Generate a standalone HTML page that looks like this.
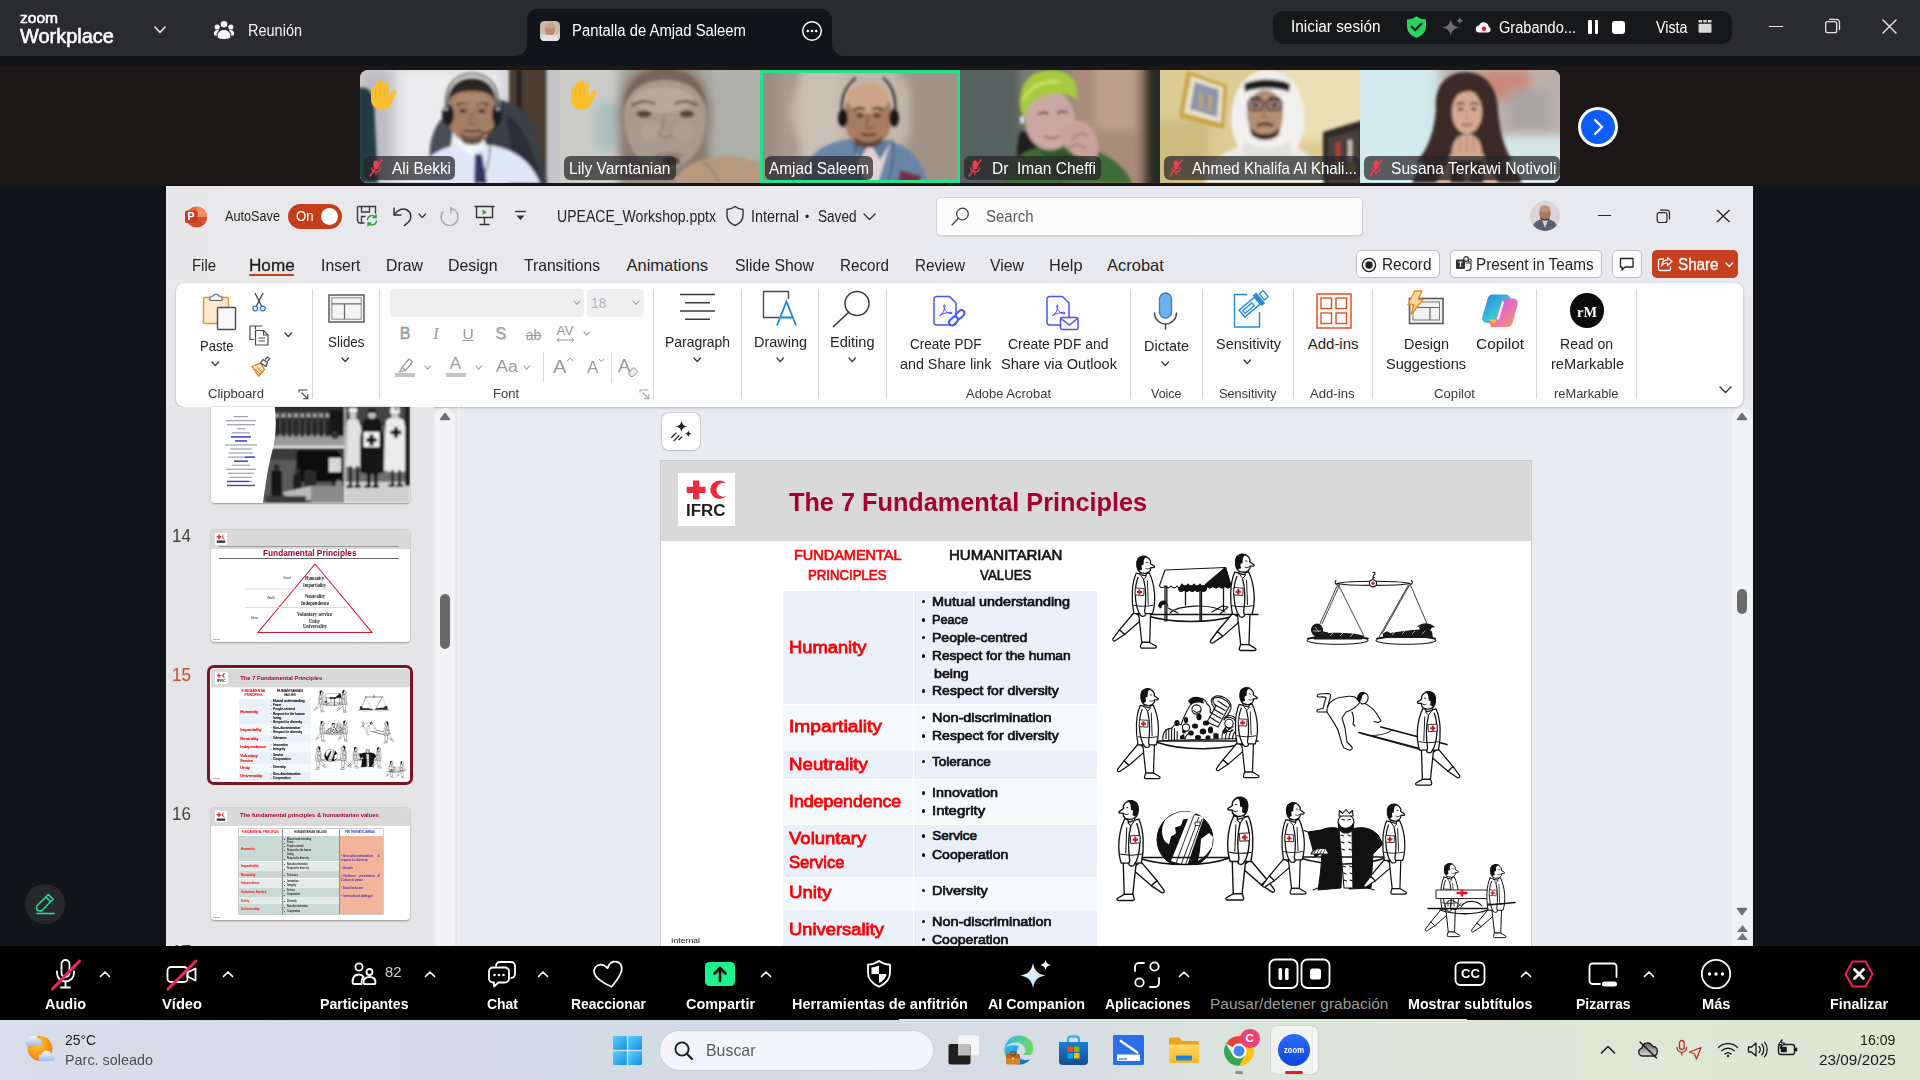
<!DOCTYPE html>
<html><head><meta charset="utf-8"><title>Zoom Workplace</title>
<style>
html,body{margin:0;padding:0;background:#111418;}
body{width:1920px;height:1080px;position:relative;overflow:hidden;font-family:"Liberation Sans",sans-serif;}
.b{position:absolute;display:block;box-sizing:border-box;}
.t{position:absolute;white-space:pre;line-height:1;transform-origin:0 50%;}
svg{overflow:visible;}
</style></head><body>
<div class="b" style="left:0;top:0;width:1920px;height:1080px;background:#111418"></div>
<div class="b" style="left:0;top:66px;width:1920px;height:119px;background:#1b1716"></div>
<!-- zoom_top -->
<div class="b" style="left:0px;top:0px;width:1920px;height:56px;background:#2a2b2e;"></div>
<div class="t" style="left:20px;top:11.4px;font-size:14.5px;color:#fff;transform:scaleX(1.072);-webkit-text-stroke:.55px #fff;">zoom</div>
<div class="t" style="left:20px;top:25.5px;font-size:20.5px;color:#fff;transform:scaleX(0.974);-webkit-text-stroke:.6px #fff;">Workplace</div>
<svg class="b" style="left:153px;top:24px;" width="14" height="12" viewBox="0 0 14 12"><path d="M2 3 L7 8.5 L12 3" fill="none" stroke="#e8e8e8" stroke-width="1.6" stroke-linecap="round" stroke-linejoin="round"/></svg>
<svg class="b" style="left:213px;top:19px;" width="22" height="22" viewBox="0 0 22 22"><g fill="#f2f2f2"><circle cx="11" cy="5.2" r="3.3"/><circle cx="4.2" cy="8" r="2.6"/><circle cx="17.8" cy="8" r="2.6"/>
    <path d="M4.5 17.2c0-3.8 2.6-6.3 6.5-6.3s6.5 2.5 6.5 6.3c0 1.7-1.5 2.8-6.5 2.8s-6.5-1.1-6.5-2.8z"/>
    <path d="M0.8 14.8c0-2.3 1.4-3.7 3.6-3.7.6 0 1.1.1 1.6.3-1.5 1.3-2.4 3.2-2.5 5.5-1.8-.2-2.7-.9-2.7-2.1zM21.2 14.8c0-2.3-1.4-3.7-3.6-3.7-.6 0-1.1.1-1.6.3 1.5 1.3 2.4 3.2 2.5 5.5 1.8-.2 2.7-.9 2.7-2.1z"/></g></svg>
<div class="t" style="left:247.5px;top:23px;font-size:16px;color:#f4f4f4;transform:scaleX(0.906);">Reunión</div>
<div class="b" style="left:527px;top:9px;width:305px;height:47px;background:#111418;border-radius:11px 11px 0 0;"></div>
<svg class="b" style="left:515px;top:44px;" width="12" height="12" viewBox="0 0 12 12"><path d="M12 0 V12 H0 A12 12 0 0 0 12 0z" fill="#111418"/></svg>
<svg class="b" style="left:832px;top:44px;" width="12" height="12" viewBox="0 0 12 12"><path d="M0 0 V12 H12 A12 12 0 0 1 0 0z" fill="#111418"/></svg>
<svg class="b" style="left:540px;top:21px;" width="20" height="20" viewBox="0 0 20 20"><defs><clipPath id="avc"><rect width="20" height="20" rx="4.5"/></clipPath></defs><g clip-path="url(#avc)"><rect width="20" height="20" fill="#c9b9a8"/><rect y="13" width="20" height="7" fill="#d8d4d2"/><ellipse cx="10" cy="9" rx="5" ry="6" fill="#b98a70"/><ellipse cx="10" cy="5" rx="4.6" ry="2.8" fill="#c9a089"/><path d="M2 20c0-4 3-6 8-6s8 2 8 6z" fill="#e6e3e6"/></g></svg>
<div class="t" style="left:572px;top:23px;font-size:16px;color:#fff;transform:scaleX(0.927);">Pantalla de Amjad Saleem</div>
<svg class="b" style="left:801px;top:20px;" width="22" height="22" viewBox="0 0 22 22"><circle cx="11" cy="11" r="9.3" fill="none" stroke="#fff" stroke-width="1.5"/><circle cx="6.8" cy="11" r="1.3" fill="#fff"/><circle cx="11" cy="11" r="1.3" fill="#fff"/><circle cx="15.2" cy="11" r="1.3" fill="#fff"/></svg>
<div class="b" style="left:1273px;top:11px;width:459px;height:33px;background:#17181a;border-radius:10px;"></div>
<div class="t" style="left:1291px;top:19.2px;font-size:16px;color:#fff;transform:scaleX(0.959);">Iniciar sesión</div>
<svg class="b" style="left:1405px;top:15px;" width="23" height="24" viewBox="0 0 23 24"><path d="M11.5 1.2c3 2.2 6 3.2 9.5 3.4v6.6c0 5.5-3.8 9.6-9.5 11.6C5.8 20.8 2 16.7 2 11.2V4.6c3.5-.2 6.5-1.2 9.5-3.4z" fill="#27d45f"/><path d="M6.8 11.8l3.4 3.4 6.2-6.6" fill="none" stroke="#10251a" stroke-width="2.3" stroke-linecap="round" stroke-linejoin="round"/></svg>
<svg class="b" style="left:1439.5px;top:14.5px;" width="26" height="26" viewBox="0 0 23 23"><path d="M9.5 3.5c.9 4.8 2.7 6.6 7.5 7.5-4.8.9-6.6 2.7-7.5 7.5C8.6 13.7 6.8 11.9 2 11c4.8-.9 6.6-2.7 7.5-7.5z" fill="#6b6c70"/><path d="M17.5 1.5c.4 2.2 1.3 3.1 3.5 3.5-2.2.4-3.1 1.3-3.5 3.5-.4-2.2-1.3-3.1-3.5-3.5 2.2-.4 3.1-1.3 3.5-3.5z" fill="#6b6c70"/></svg>
<svg class="b" style="left:1475px;top:20px;" width="18" height="14" viewBox="0 0 18 14"><path d="M4.5 12.5a3.5 3.5 0 0 1-.4-7 5 5 0 0 1 9.6 1.2 3 3 0 0 1-.4 5.8z" fill="#fff"/><circle cx="9" cy="8.8" r="2.3" fill="#e8173d"/></svg>
<div class="t" style="left:1499px;top:19.7px;font-size:16px;color:#fff;transform:scaleX(0.911);">Grabando...</div>
<div class="b" style="left:1588px;top:20px;width:3.5px;height:14px;background:#fff;border-radius:1px;"></div>
<div class="b" style="left:1594.5px;top:20px;width:3.5px;height:14px;background:#fff;border-radius:1px;"></div>
<div class="b" style="left:1611.5px;top:20.5px;width:13px;height:13px;background:#fff;border-radius:3px;"></div>
<div class="t" style="left:1656px;top:19.7px;font-size:16px;color:#fff;transform:scaleX(0.893);">Vista</div>
<svg class="b" style="left:1698px;top:19px;" width="15" height="15" viewBox="0 0 15 15"><g fill="#d9d9d9"><rect x="0.5" y="1" width="3.6" height="2.6" rx=".6"/><rect x="5.2" y="1" width="3.6" height="2.6" rx=".6"/><rect x="9.9" y="1" width="3.6" height="2.6" rx=".6"/><rect x="0.5" y="4.8" width="13" height="9" rx="1.2"/></g></svg>
<div class="b" style="left:1769px;top:25.5px;width:14px;height:1.3px;background:#e6e6e6;"></div>
<svg class="b" style="left:1824px;top:17px;" width="18" height="18" viewBox="0 0 18 18"><rect x="1.7" y="4.7" width="11" height="11" rx="2" fill="none" stroke="#e6e6e6" stroke-width="1.3"/><path d="M5 2.3h7.5a3 3 0 0 1 3 3V13" fill="none" stroke="#e6e6e6" stroke-width="1.3"/></svg>
<svg class="b" style="left:1881px;top:18px;" width="17" height="17" viewBox="0 0 17 17"><path d="M1.5 1.5l14 14M15.5 1.5l-14 14" stroke="#e6e6e6" stroke-width="1.4" fill="none"/></svg>
<!-- gallery -->
<svg class="b" style="left:360px;top:70px;border-radius:8px 0 0 8px;overflow:hidden" width="200" height="113" viewBox="0 0 200 113"><defs><filter id="bl360" x="-10%" y="-10%" width="120%" height="120%"><feGaussianBlur stdDeviation="1.6"/></filter><filter id="bb360" x="-20%" y="-20%" width="140%" height="140%"><feGaussianBlur stdDeviation="5"/></filter></defs><rect width="200" height="113" fill="#d6d5d9"/>
    <g filter="url(#bb360)"><rect x="40" y="0" width="100" height="113" fill="#ecebee"/><rect x="0" y="0" width="30" height="113" fill="#bcbcc2"/></g>
    <g filter="url(#bl360)">
    <rect x="149" y="-5" width="38" height="125" fill="#4b3d33"/><rect x="156" y="-5" width="6" height="125" fill="#2b231e"/><rect x="187" y="-5" width="15" height="125" fill="#c6c5ca"/>
    <path d="M-2 18c8-2 14 2 16 12l4 83H-2z" fill="#233b44"/>
    <path d="M70 96c-2-20 2-38 14-50l10 4-6 44z" fill="#4a4f56"/>
    <path d="M122 30c22-4 44 6 54 30l12 53h-70z" fill="#3a3f46"/>
    <path d="M146 44c14 8 26 28 36 69h-26z" fill="#2b2f35"/>
    <path d="M56 113c5-22 18-34 42-38h32c22 4 40 14 50 38z" fill="#dfe8f8"/>
    <path d="M96 74l16 12 14-12-4-8H100z" fill="#f2f5fc"/>
    <path d="M115 84l7 0 5 29h-13z" fill="#2c3763"/>
    <ellipse cx="112" cy="42" rx="25" ry="31" fill="#a57e66"/>
    <path d="M87 36c0-18 10-28 25-28s25 10 25 28c-3-10-8-15-25-15s-22 5-25 15z" fill="#2b2522"/>
    <path d="M100 62c5 6 19 6 24 0l-2 10c-5 4-15 4-20 0z" fill="#6e5547"/>
    <ellipse cx="88" cy="45" rx="6" ry="11" fill="#1a1a1c"/><ellipse cx="137" cy="45" rx="5" ry="11" fill="#1a1a1c"/>
    <path d="M86 40C84 14 98 6 112 6s28 8 26 34" fill="none" stroke="#d9d5d2" stroke-width="3"/>
    <path d="M86 40C84 14 98 6 112 6s28 8 26 34" fill="none" stroke="#222" stroke-width="1.5" transform="translate(0,-2)"/>
    <path d="M128 62c4 12 2 30-6 50" fill="none" stroke="#222" stroke-width="1"/>
    <path d="M97 35c4-2.5 9-2.5 12-.5M116 34.5c4-2 8-2 12 .5" stroke="#2a1e18" stroke-width="2.6" fill="none"/>
    <ellipse cx="103" cy="41" rx="3.6" ry="1.8" fill="#2a1e18"/><ellipse cx="122" cy="41" rx="3.6" ry="1.8" fill="#2a1e18"/>
    <path d="M112 42c-1 6-2 9-3 11 2 1.5 6 1.5 8 0" stroke="#7b5a48" stroke-width="1.6" fill="none"/>
    <path d="M104 60c5 2 12 2 17 0" stroke="#5b3d33" stroke-width="2.2" fill="none"/>
    <ellipse cx="112" cy="30" rx="16" ry="7" fill="#b58d73" opacity=".6"/>
    <path d="M137 52c-2 8-8 12-16 11" stroke="#1a1a1a" stroke-width="1.6" fill="none"/>
    </g></svg>
<svg class="b" style="left:369px;top:79px;" width="27" height="31" viewBox="0 0 27 31"><g fill="#fbbf2e"><rect x="2" y="7.5" width="4.2" height="14" rx="2.1"/><rect x="6.4" y="3" width="4.3" height="17" rx="2.15"/><rect x="10.9" y="1.2" width="4.3" height="18" rx="2.15"/><rect x="15.4" y="3.5" width="4.3" height="17" rx="2.15"/>
    <path d="M2 15h17.7v4.5l3.3-6.5c.8-1.6 2.3-2 3.3-1.3 1.1.7 1.3 2 .6 3.5L22.5 24c-2 4.5-5.5 6.7-10 6.7C6 30.7 2 26.5 2 20.5z"/></g><path d="M6.3 9v9M10.8 6v12M15.3 7v11" stroke="#e9a21a" stroke-width=".5" fill="none"/></svg>
<div class="b" style="left:364px;top:155.5px;width:91px;height:24.5px;background:rgba(38,38,40,.72);border-radius:6px;"></div><svg class="b" style="left:368.5px;top:159px;" width="14" height="18" viewBox="0 0 14 18"><g fill="#ee3d4f"><rect x="4.5" y="1.5" width="5" height="9" rx="2.5"/><path d="M2 8.5h1.2a3.8 3.8 0 0 0 7.6 0H12a5 5 0 0 1-4.4 5v2.5H6.4v-2.5A5 5 0 0 1 2 8.5z"/></g><path d="M1 17L13 1" stroke="#ee3d4f" stroke-width="1.5" stroke-linecap="round"/></svg><div class="t" style="left:391.5px;top:160.2px;font-size:16.5px;color:#fff;transform:scaleX(0.933);">Ali Bekki</div>
<svg class="b" style="left:560px;top:70px;border-radius:0;overflow:hidden" width="200" height="113" viewBox="0 0 200 113"><defs><filter id="bl560" x="-10%" y="-10%" width="120%" height="120%"><feGaussianBlur stdDeviation="1.6"/></filter><filter id="bb560" x="-20%" y="-20%" width="140%" height="140%"><feGaussianBlur stdDeviation="5"/></filter></defs><rect width="200" height="113" fill="#a5a6a1"/>
    <g filter="url(#bb560)"><rect x="-10" y="-10" width="68" height="140" fill="#cbccc8"/><rect x="36" y="32" width="20" height="48" fill="#a9bfbf"/><rect x="150" y="-10" width="60" height="100" fill="#afb0ab"/>
    <path d="M58 113V60c-6-30 10-70 46-70s54 38 46 72v51z" fill="#8b7c70"/>
    </g>
    <g filter="url(#bl560)">
    <ellipse cx="105" cy="48" rx="41" ry="52" fill="#a99a8e"/>
    <ellipse cx="103" cy="30" rx="30" ry="13" fill="#b7a99e"/>
    <ellipse cx="92" cy="62" rx="12" ry="9" fill="#b3a398" opacity=".8"/><ellipse cx="124" cy="62" rx="10" ry="9" fill="#b09f94" opacity=".8"/>
    <path d="M63 40c2-26 18-42 42-42s40 16 42 42c-6-20-20-30-42-30s-36 10-42 30z" fill="#74665a"/>
    <ellipse cx="84" cy="44" rx="7.5" ry="3.6" fill="#4f4039"/><ellipse cx="127" cy="44" rx="7.5" ry="3.6" fill="#4f4039"/>
    <path d="M72 36c6-5 15-6 23-2M115 34c8-4 17-3 23 2" stroke="#6a574b" stroke-width="2.6" fill="none"/>
    <path d="M104 48c-1 8-3 14-5 17 3 3 10 3 13 0" stroke="#8f7c70" stroke-width="2" fill="none"/>
    <ellipse cx="111" cy="91" rx="9" ry="5" fill="#4b3a36"/>
    <path d="M96 86c8-3 20-3 28 0" stroke="#8a6f66" stroke-width="2" fill="none"/>
    <path d="M114 113c5-16 22-24 45-26 22-2 38 4 46 12v14z" fill="#b79a7e"/>
    <path d="M142 92c10 4 14 12 16 21" stroke="#9f8468" stroke-width="2" fill="none"/>
    </g></svg>
<svg class="b" style="left:569px;top:79px;" width="27" height="31" viewBox="0 0 27 31"><g fill="#fbbf2e"><rect x="2" y="7.5" width="4.2" height="14" rx="2.1"/><rect x="6.4" y="3" width="4.3" height="17" rx="2.15"/><rect x="10.9" y="1.2" width="4.3" height="18" rx="2.15"/><rect x="15.4" y="3.5" width="4.3" height="17" rx="2.15"/>
    <path d="M2 15h17.7v4.5l3.3-6.5c.8-1.6 2.3-2 3.3-1.3 1.1.7 1.3 2 .6 3.5L22.5 24c-2 4.5-5.5 6.7-10 6.7C6 30.7 2 26.5 2 20.5z"/></g><path d="M6.3 9v9M10.8 6v12M15.3 7v11" stroke="#e9a21a" stroke-width=".5" fill="none"/></svg>
<div class="b" style="left:563.5px;top:155.5px;width:112.5px;height:24.5px;background:rgba(38,38,40,.72);border-radius:6px;"></div><div class="t" style="left:569px;top:160.2px;font-size:16.5px;color:#fff;transform:scaleX(0.94);">Lily Varntanian</div>
<svg class="b" style="left:760px;top:70px;border-radius:0;overflow:hidden" width="200" height="113" viewBox="0 0 200 113"><defs><filter id="bl760" x="-10%" y="-10%" width="120%" height="120%"><feGaussianBlur stdDeviation="1.6"/></filter><filter id="bb760" x="-20%" y="-20%" width="140%" height="140%"><feGaussianBlur stdDeviation="5"/></filter></defs><rect width="200" height="113" fill="#a6988e"/>
    <g filter="url(#bb760)"><ellipse cx="92" cy="42" rx="62" ry="58" fill="#c2b6ab"/><rect x="40" y="-10" width="40" height="140" fill="#cabfb4"/><rect x="150" y="-10" width="60" height="140" fill="#a09287"/><rect x="-10" y="-10" width="26" height="140" fill="#9a8c82"/></g>
    <g filter="url(#bl760)">
    <path d="M40 113c4-24 18-40 50-44h30c28 4 42 20 48 44z" fill="#6786a8"/>
    <path d="M92 74l14 39h12l12-39z" fill="#e3d3d8"/>
    <path d="M88 70l12 20 8-14zM132 70l-12 20-8-14z" fill="#5e7c9c"/>
    <path d="M140 100l22 6-4 7h-20z" fill="#7b2a48"/>
    <ellipse cx="108" cy="46" rx="24" ry="32" fill="#a77b5f"/>
    <ellipse cx="108" cy="28" rx="21" ry="15" fill="#cda586"/>
    <path d="M94 66c6 8 22 8 28 0l-1 8c-6 5-20 5-26 0z" fill="#5d4438"/>
    <path d="M94 40c4-2.5 8-2.5 11-.5M112 39.5c4-2 8-2 11 .5" stroke="#3c2a22" stroke-width="2.4" fill="none"/>
    <ellipse cx="100" cy="45.5" rx="3.4" ry="1.7" fill="#2a1c16"/><ellipse cx="117" cy="45.5" rx="3.4" ry="1.7" fill="#2a1c16"/>
    <path d="M108 46c-.5 6-1.5 9-2.5 11 2 1.5 5.5 1.5 7.5 0" stroke="#7d573f" stroke-width="1.6" fill="none"/>
    <path d="M101 64c4 1.5 11 1.5 15 0" stroke="#4a3026" stroke-width="2.2" fill="none"/>
    <ellipse cx="83" cy="48" rx="5" ry="9" fill="#161616"/><ellipse cx="134" cy="48" rx="5" ry="9" fill="#161616"/>
    <path d="M82 42c-2-18 8-30 14-34M135 42c2-18-6-30-12-34" fill="none" stroke="#161616" stroke-width="2"/>
    <path d="M132 70c4 10 0 28-4 43M96 74c-2 14 0 26 4 39" fill="none" stroke="#2a2a2a" stroke-width=".9"/>
    </g></svg>
<div class="b" style="left:760px;top:70px;width:200px;height:113px;background:transparent;border:3px solid #22e38d;"></div>
<div class="b" style="left:764.5px;top:155.5px;width:108px;height:24.5px;background:rgba(38,38,40,.72);border-radius:6px;"></div><div class="t" style="left:768.5px;top:160.2px;font-size:16.5px;color:#fff;transform:scaleX(0.932);">Amjad Saleem</div>
<svg class="b" style="left:960px;top:70px;border-radius:0;overflow:hidden" width="200" height="113" viewBox="0 0 200 113"><defs><filter id="bl960" x="-10%" y="-10%" width="120%" height="120%"><feGaussianBlur stdDeviation="1.6"/></filter><filter id="bb960" x="-20%" y="-20%" width="140%" height="140%"><feGaussianBlur stdDeviation="5"/></filter></defs><rect width="200" height="113" fill="#6a7068"/>
    <g filter="url(#bb960)"><rect x="-10" y="-10" width="70" height="140" fill="#56625e"/><rect x="110" y="-10" width="80" height="140" fill="#a98b7a"/><rect x="135" y="-10" width="40" height="70" fill="#c0a090"/><rect x="183" y="-10" width="30" height="140" fill="#2a2c28"/><rect x="60" y="-10" width="50" height="50" fill="#7b7f74"/></g>
    <g filter="url(#bl960)">
    <path d="M60 62c-4 14-4 28 0 40h22V60z" fill="#231d1b"/>
    <path d="M44 113c4-20 16-32 36-36h40c26 4 44 18 52 36z" fill="#3e6b35"/>
    <path d="M80 80l20 33 22-33z" fill="#2f5a2a"/>
    <ellipse cx="90" cy="50" rx="25" ry="30" fill="#cba7a3"/>
    <path d="M61 42C56 16 70 0 90 0s30 10 27 30c-10-8-28-10-44 2-5 4-8 10-8 16z" fill="#a6c93c"/>
    <path d="M64 30c6-14 20-20 36-18" stroke="#c4e05a" stroke-width="4" fill="none"/>
    <path d="M78 44c4-2 8-2 11 0M97 43c4-2 8-2 11 0" stroke="#4a3430" stroke-width="2" fill="none"/>
    <path d="M84 66c5 3 11 3 16 0" stroke="#a8656a" stroke-width="2.2" fill="none"/>
    <path d="M100 58c8-10 24-10 32 0 6 8 8 22 4 32l-20-4c-10-6-18-16-16-28z" fill="#caa29c"/>
    <path d="M112 70c4-6 10-8 16-4M108 78c6-4 12-4 18 0" stroke="#9c706c" stroke-width="1.5" fill="none"/>
    <ellipse cx="62" cy="50" rx="2" ry="4" fill="#f2f2f2"/>
    </g></svg>
<div class="b" style="left:963.5px;top:155.5px;width:137.5px;height:24.5px;background:rgba(38,38,40,.72);border-radius:6px;"></div><svg class="b" style="left:968px;top:159px;" width="14" height="18" viewBox="0 0 14 18"><g fill="#ee3d4f"><rect x="4.5" y="1.5" width="5" height="9" rx="2.5"/><path d="M2 8.5h1.2a3.8 3.8 0 0 0 7.6 0H12a5 5 0 0 1-4.4 5v2.5H6.4v-2.5A5 5 0 0 1 2 8.5z"/></g><path d="M1 17L13 1" stroke="#ee3d4f" stroke-width="1.5" stroke-linecap="round"/></svg><div class="t" style="left:991.5px;top:160.2px;font-size:16.5px;color:#fff;transform:scaleX(0.94);">Dr  Iman Cheffi</div>
<svg class="b" style="left:1160px;top:70px;border-radius:0;overflow:hidden" width="200" height="113" viewBox="0 0 200 113"><defs><filter id="bl1160" x="-10%" y="-10%" width="120%" height="120%"><feGaussianBlur stdDeviation="1.6"/></filter><filter id="bb1160" x="-20%" y="-20%" width="140%" height="140%"><feGaussianBlur stdDeviation="5"/></filter></defs><rect width="200" height="113" fill="#dccc94"/>
    <g filter="url(#bb1160)"><rect x="120" y="-10" width="90" height="80" fill="#eadfb4"/><rect x="-10" y="50" width="60" height="80" fill="#cdbb80"/></g>
    <g filter="url(#bl1160)">
    <path d="M27 1l40 14-3 44-45-12z" fill="#c9a23f"/><path d="M31 6l32 11-2 36-37-10z" fill="#e9e2c8"/><path d="M35 12l24 8-2 27-27-8z" fill="#8b93ad"/><path d="M40 22l3 1-1 16-3-1zM49 25l3 1-1 16-3-1z" fill="#c9a94f"/>
    <path d="M163 62l40-12v66h-40z" fill="#2d2928"/><path d="M168 68l32-9v54h-32z" fill="#4a3f3c"/><rect x="176" y="72" width="4" height="22" fill="#b9403a"/><rect x="188" y="70" width="4" height="22" fill="#c8c2b8"/><circle cx="178" cy="100" r="5" fill="#8c7a45"/><circle cx="191" cy="98" r="5" fill="#8c7a45"/>
    <path d="M45 113c4-22 20-34 44-40h36c22 6 34 18 38 40z" fill="#ebe9e5"/>
    <path d="M72 60C68 24 84 0 108 0s38 22 36 58c-2 12-6 20-12 26H84c-6-6-10-14-12-24z" fill="#f1f0ee"/>
    <path d="M84 70c8 10 38 10 46 0l4 16c-10 8-42 8-52 0z" fill="#e3e1dd"/>
    <ellipse cx="105" cy="44" rx="18" ry="24" fill="#b38e6f"/>
    <path d="M84 14c10-6 36-6 46 0l-1 8c-12-5-32-5-44 0z" fill="#1c1b1d"/>
    <path d="M89 54c4 14 28 14 32 0l-2 10c-6 8-22 8-28 0z" fill="#3b2b22"/>
    <path d="M97 56c4-3 12-3 16 0" stroke="#3b2b22" stroke-width="3" fill="none"/>
    <path d="M90 28.5c3-1.5 8-1.5 11 0M109 28.5c3-1.5 8-1.5 11 0" stroke="#2a1d16" stroke-width="2" fill="none"/><ellipse cx="95.5" cy="35" rx="3" ry="1.7" fill="#2a1d16"/><ellipse cx="114.5" cy="35" rx="3" ry="1.7" fill="#2a1d16"/><path d="M105 37c-.5 5-1.5 8-2.5 9.5 1.5 1.2 4.5 1.2 6 0" stroke="#8b6a50" stroke-width="1.4" fill="none"/><rect x="88" y="30" width="15" height="10" rx="3" fill="rgba(90,80,130,.25)" stroke="#2a2530" stroke-width="1.3"/><rect x="107" y="30" width="15" height="10" rx="3" fill="rgba(90,80,130,.25)" stroke="#2a2530" stroke-width="1.3"/><path d="M103 33h4" stroke="#2a2530" stroke-width="1.2"/>
    </g></svg>
<div class="b" style="left:1164px;top:155.5px;width:195.5px;height:24.5px;background:rgba(38,38,40,.72);border-radius:6px;"></div><svg class="b" style="left:1168.5px;top:159px;" width="14" height="18" viewBox="0 0 14 18"><g fill="#ee3d4f"><rect x="4.5" y="1.5" width="5" height="9" rx="2.5"/><path d="M2 8.5h1.2a3.8 3.8 0 0 0 7.6 0H12a5 5 0 0 1-4.4 5v2.5H6.4v-2.5A5 5 0 0 1 2 8.5z"/></g><path d="M1 17L13 1" stroke="#ee3d4f" stroke-width="1.5" stroke-linecap="round"/></svg><div class="t" style="left:1191.5px;top:160.2px;font-size:16.5px;color:#fff;transform:scaleX(0.913);">Ahmed Khalifa Al Khali...</div>
<svg class="b" style="left:1360px;top:70px;border-radius:0 8px 8px 0;overflow:hidden" width="200" height="113" viewBox="0 0 200 113"><defs><filter id="bl1360" x="-10%" y="-10%" width="120%" height="120%"><feGaussianBlur stdDeviation="1.6"/></filter><filter id="bb1360" x="-20%" y="-20%" width="140%" height="140%"><feGaussianBlur stdDeviation="5"/></filter></defs><rect width="200" height="113" fill="#cfe6e8"/>
    <g filter="url(#bb1360)"><rect x="80" y="-10" width="130" height="80" fill="#b9b0aa"/><rect x="120" y="0" width="50" height="30" fill="#c98a7c"/><rect x="150" y="20" width="40" height="40" fill="#a9a6a6"/><rect x="140" y="66" width="70" height="60" fill="#d4e6e6"/><rect x="-10" y="-10" width="80" height="140" fill="#d2eaec"/></g>
    <g filter="url(#bl1360)">
    <path d="M76 40C74 14 88 2 106 2s32 14 32 40c2 20 6 36 14 48l-20 6H74l-18-4c12-12 18-30 20-52z" fill="#3b2b25"/>
    <path d="M52 113c4-14 14-22 30-26h46c18 4 30 12 34 26z" fill="#3a2a2b"/>
    <ellipse cx="107" cy="42" rx="15" ry="22" fill="#d4aa92"/>
    <path d="M92 30c2-12 8-18 16-18s14 6 15 18c-6-8-12-10-18-8-6 1-10 4-13 8z" fill="#3b2b25"/>
    <path d="M96 34.5c3-1.8 6-1.8 8.5-.3M110 34.2c2.5-1.5 5.5-1.5 8.5.3" stroke="#3a2620" stroke-width="1.7" fill="none"/><ellipse cx="100.5" cy="39" rx="2.8" ry="1.6" fill="#2e1e1a"/><ellipse cx="114" cy="39" rx="2.8" ry="1.6" fill="#2e1e1a"/><path d="M107 40c-.4 4-1 6.5-1.8 8 1.3 1 3.5 1 4.8 0" stroke="#b58a72" stroke-width="1.2" fill="none"/>
    <path d="M102 54c3 1.5 7 1.5 10 0" stroke="#a4505a" stroke-width="2" fill="none"/>
    <path d="M92 82c0-10 6-18 15-18s15 8 15 18l4 8H88z" fill="#d2a68e"/>
    <path d="M100 68v14M107 66v16M114 68v14" stroke="#a87e68" stroke-width="1" fill="none"/>
    <path d="M90 90l-14 23h14zM124 90l14 23h-14z" fill="#c99e88"/>
    <ellipse cx="107" cy="106" rx="3" ry="4" fill="#a88f5c"/>
    </g></svg>
<div class="b" style="left:1364px;top:155.5px;width:195.5px;height:24.5px;background:rgba(38,38,40,.72);border-radius:6px;"></div><svg class="b" style="left:1368.5px;top:159px;" width="14" height="18" viewBox="0 0 14 18"><g fill="#ee3d4f"><rect x="4.5" y="1.5" width="5" height="9" rx="2.5"/><path d="M2 8.5h1.2a3.8 3.8 0 0 0 7.6 0H12a5 5 0 0 1-4.4 5v2.5H6.4v-2.5A5 5 0 0 1 2 8.5z"/></g><path d="M1 17L13 1" stroke="#ee3d4f" stroke-width="1.5" stroke-linecap="round"/></svg><div class="t" style="left:1390.5px;top:160.2px;font-size:16.5px;color:#fff;transform:scaleX(0.946);">Susana Terkawi Notivoli</div>
<div class="b" style="left:1577.5px;top:106.5px;width:40px;height:40px;background:#fff;border-radius:20px;"></div>
<div class="b" style="left:1580.5px;top:109.5px;width:34px;height:34px;background:#0d5cff;border-radius:17px;"></div>
<svg class="b" style="left:1590px;top:117px;" width="16" height="20" viewBox="0 0 16 20"><path d="M5 3l7 7-7 7" fill="none" stroke="#fff" stroke-width="2.4" stroke-linecap="round" stroke-linejoin="round"/></svg>
<!-- ppt -->
<div class="b" style="left:166px;top:186px;width:1587px;height:761px;background:#e9e9ed;"></div>
<div class="b" style="left:459px;top:400px;width:1294px;height:545px;background:#e8ebf0;"></div>
<div class="b" style="left:166px;top:186px;width:1587px;height:97px;background:linear-gradient(90deg,#e8e7ea 0%,#e9e9ee 40%,#e7e9ef 100%);"></div>
<svg class="b" style="left:184px;top:204.5px;" width="24" height="24" viewBox="0 0 24 24"><defs><linearGradient id="pp" x1="0" y1="0" x2="1" y2="1"><stop offset="0" stop-color="#f0704a"/><stop offset="1" stop-color="#c13a1b"/></linearGradient></defs><circle cx="12.5" cy="12" r="10.5" fill="url(#pp)"/><path d="M12.5 1.5a10.5 10.5 0 0 1 10.5 10.5H12.5z" fill="#f58a63"/><path d="M12.5 12H23a10.5 10.5 0 0 1-3.5 7.8z" fill="#d9502a"/><rect x="1" y="5.5" width="12.5" height="12.5" rx="1.8" fill="#c43e1c"/></svg>
<div class="t" style="left:187.5px;top:210.9px;font-size:10.5px;color:#fff;font-weight:bold;">P</div>
<div class="t" style="left:224.5px;top:209.6px;font-size:13.8px;color:#242424;transform:scaleX(0.919);">AutoSave</div>
<div class="b" style="left:287.5px;top:204px;width:54.5px;height:24.5px;background:#c43e1c;border-radius:12.5px;"></div>
<div class="t" style="left:295.5px;top:209.6px;font-size:13.8px;color:#fff;transform:scaleX(0.951);">On</div>
<div class="b" style="left:320.5px;top:207.5px;width:17.5px;height:17.5px;background:#fff;border-radius:9px;"></div>
<svg class="b" style="left:356px;top:205px;" width="23" height="22" viewBox="0 0 23 22"><path d="M1.5 1.5h14l4 0v7M1.5 1.5v13.5a3 3 0 0 0 3 3h4" fill="none" stroke="#3b3b3b" stroke-width="1.4"/><path d="M5.5 1.5v5.5h8V1.5" fill="none" stroke="#3b3b3b" stroke-width="1.3"/><path d="M5.5 18v-6.5h4" fill="none" stroke="#3b3b3b" stroke-width="1.3"/><g fill="none" stroke="#2ea043" stroke-width="1.5" stroke-linecap="round"><path d="M11.5 14.5a4.6 4.6 0 0 1 8-2.5M20 9.8v2.8h-2.8"/><path d="M20.5 16a4.6 4.6 0 0 1-8 2.5M12 20.8V18h2.8"/></g></svg>
<svg class="b" style="left:391px;top:205px;" width="23" height="22" viewBox="0 0 23 22"><path d="M3 3v7h7" fill="none" stroke="#333" stroke-width="1.5" stroke-linecap="round" stroke-linejoin="round"/><path d="M3.5 9.5C7 4.5 12 2.8 16 5c4.5 2.5 5 8.5 1.5 12l-4 3.5" fill="none" stroke="#333" stroke-width="1.5" stroke-linecap="round"/></svg>
<svg class="b" style="left:418.25px;top:213.2px;" width="8.5" height="5.6" viewBox="0 0 8.5 5.6"><path d="M1 1L4.25 4.6L7.5 1" fill="none" stroke="#333" stroke-width="1.3" stroke-linecap="round" stroke-linejoin="round"/></svg>
<svg class="b" style="left:437px;top:205px;" width="23" height="22" viewBox="0 0 23 22"><path d="M14 2.5v5.5" fill="none" stroke="#a8a8a8" stroke-width="1.4" stroke-linecap="round"/><path d="M14 3.5a8.5 8.5 0 1 1-8 3" fill="none" stroke="#a8a8a8" stroke-width="1.4" stroke-linecap="round"/></svg>
<svg class="b" style="left:474px;top:205px;" width="21" height="22" viewBox="0 0 21 22"><path d="M1 1.5h19M2.5 1.5v11h16v-11M10.5 12.5v6M6 19.5h9" fill="none" stroke="#333" stroke-width="1.4" stroke-linecap="round"/><path d="M8.5 4.5l4.5 2.8-4.5 2.8z" fill="#2ea043"/></svg>
<svg class="b" style="left:514px;top:210px;" width="13" height="12" viewBox="0 0 13 12"><path d="M1 1.5h11" stroke="#333" stroke-width="1.4"/><path d="M2.5 5.5h8L6.5 10z" fill="#333"/></svg>
<div class="t" style="left:557px;top:208.7px;font-size:16px;color:#242424;transform:scaleX(0.878);">UPEACE_Workshop.pptx</div>
<svg class="b" style="left:725px;top:205px;" width="20" height="22" viewBox="0 0 20 22"><path d="M10 1.5c2.5 2 5.2 2.8 8 3v6c0 4.5-3 7.8-8 10-5-2.2-8-5.5-8-10v-6c2.8-.2 5.5-1 8-3z" fill="none" stroke="#333" stroke-width="1.4" stroke-linejoin="round"/></svg>
<div class="t" style="left:751px;top:208.7px;font-size:16px;color:#242424;transform:scaleX(0.899);">Internal</div>
<div class="t" style="left:805px;top:210.6px;font-size:12px;color:#242424;">•</div>
<div class="t" style="left:817.5px;top:208.7px;font-size:16px;color:#242424;transform:scaleX(0.849);">Saved</div>
<svg class="b" style="left:862.5px;top:213.25px;" width="13" height="7.5" viewBox="0 0 13 7.5"><path d="M1 1L6.5 6.5L12 1" fill="none" stroke="#333" stroke-width="1.4" stroke-linecap="round" stroke-linejoin="round"/></svg>
<div class="b" style="left:935.5px;top:196.5px;width:427px;height:39px;background:#fbfbfc;border-radius:5px;border:1px solid #d4d4d8;box-shadow:0 1px 1.5px rgba(0,0,0,.08);"></div>
<svg class="b" style="left:950px;top:206px;" width="21" height="21" viewBox="0 0 21 21"><circle cx="12.5" cy="8" r="5.8" fill="none" stroke="#444" stroke-width="1.3"/><path d="M8.5 12.3L2 19" stroke="#444" stroke-width="1.3" stroke-linecap="round"/></svg>
<div class="t" style="left:986px;top:208.7px;font-size:16px;color:#5a5a5a;transform:scaleX(0.937);">Search</div>
<svg class="b" style="left:1529.5px;top:201px;" width="30" height="30" viewBox="0 0 30 30"><defs><clipPath id="av2"><circle cx="15" cy="15" r="15"/></clipPath></defs><g clip-path="url(#av2)"><rect width="30" height="30" fill="#ddd3d6"/><path d="M2 30c0-8 5-12 13-12s13 4 13 12z" fill="#59616e"/><path d="M12 19l3 8 3-8z" fill="#d9cfd2"/><ellipse cx="15" cy="12" rx="5.8" ry="7.2" fill="#a87a60"/><ellipse cx="15" cy="8" rx="5.2" ry="3.8" fill="#c09478"/><path d="M10.5 16c2 3 7 3 9 0v2c-2 2-7 2-9 0z" fill="#4a362c"/></g></svg>
<div class="b" style="left:1597.5px;top:214.5px;width:13.5px;height:1.3px;background:#222;"></div>
<svg class="b" style="left:1656px;top:208.5px;" width="16" height="15" viewBox="0 0 16 15"><rect x="1.2" y="3.7" width="9.8" height="9.8" rx="2" fill="none" stroke="#222" stroke-width="1.2"/><path d="M4.2 1.2h6.3a3 3 0 0 1 3 3v6.3" fill="none" stroke="#222" stroke-width="1.2"/></svg>
<svg class="b" style="left:1716px;top:209px;" width="15" height="14" viewBox="0 0 15 14"><path d="M1 1l12.5 12M13.5 1L1 13" stroke="#222" stroke-width="1.3"/></svg>
<div class="t" style="left:192px;top:257.2px;font-size:16.5px;color:#242424;transform:scaleX(0.903);">File</div>
<div class="t" style="left:248.8px;top:257.2px;font-size:16.5px;color:#1f1f1f;transform:scaleX(1.038);-webkit-text-stroke:.35px #1f1f1f;">Home</div>
<div class="t" style="left:320.5px;top:257.2px;font-size:16.5px;color:#242424;transform:scaleX(0.957);">Insert</div>
<div class="t" style="left:386px;top:257.2px;font-size:16.5px;color:#242424;transform:scaleX(0.961);">Draw</div>
<div class="t" style="left:448px;top:257.2px;font-size:16.5px;color:#242424;transform:scaleX(0.964);">Design</div>
<div class="t" style="left:524px;top:257.2px;font-size:16.5px;color:#242424;transform:scaleX(0.949);">Transitions</div>
<div class="t" style="left:626.5px;top:257.2px;font-size:16.5px;color:#242424;">Animations</div>
<div class="t" style="left:735px;top:257.2px;font-size:16.5px;color:#242424;transform:scaleX(0.957);">Slide Show</div>
<div class="t" style="left:840px;top:257.2px;font-size:16.5px;color:#242424;transform:scaleX(0.921);">Record</div>
<div class="t" style="left:915px;top:257.2px;font-size:16.5px;color:#242424;transform:scaleX(0.924);">Review</div>
<div class="t" style="left:990px;top:257.2px;font-size:16.5px;color:#242424;transform:scaleX(0.959);">View</div>
<div class="t" style="left:1048.5px;top:257.2px;font-size:16.5px;color:#242424;transform:scaleX(0.987);">Help</div>
<div class="t" style="left:1107px;top:257.2px;font-size:16.5px;color:#242424;">Acrobat</div>
<div class="b" style="left:248.8px;top:273.8px;width:45.7px;height:2.5px;background:#c43e1c;border-radius:1.2px;"></div>
<div class="b" style="left:1355.5px;top:249.5px;width:84px;height:28.5px;background:#fbfbfc;border-radius:5px;border:1px solid #bdbdc2;"></div>
<svg class="b" style="left:1361px;top:256.5px;" width="16" height="16" viewBox="0 0 16 16"><circle cx="8" cy="8" r="6.6" fill="none" stroke="#222" stroke-width="1.3"/><circle cx="8" cy="8" r="3.7" fill="#222"/></svg>
<div class="t" style="left:1381.5px;top:256.5px;font-size:16px;color:#242424;transform:scaleX(0.96);">Record</div>
<div class="b" style="left:1450px;top:249.5px;width:151.5px;height:28.5px;background:#fbfbfc;border-radius:5px;border:1px solid #bdbdc2;"></div>
<svg class="b" style="left:1455px;top:256px;" width="17" height="16" viewBox="0 0 17 16"><rect x="1" y="3.5" width="9" height="9.5" rx="1.2" fill="#333"/><path d="M3.5 6h4M5.5 6v5" stroke="#fff" stroke-width="1.2"/><circle cx="11" cy="3" r="2.3" fill="none" stroke="#333" stroke-width="1.2"/><circle cx="14.8" cy="4.5" r="1.5" fill="none" stroke="#333" stroke-width="1.1"/><path d="M10.5 7h5.5v4.5a3 3 0 0 1-3 3h-2" fill="none" stroke="#333" stroke-width="1.2"/></svg>
<div class="t" style="left:1476px;top:256.5px;font-size:16px;color:#242424;transform:scaleX(0.953);">Present in Teams</div>
<div class="b" style="left:1612px;top:249.5px;width:29.5px;height:28.5px;background:#fbfbfc;border-radius:5px;border:1px solid #bdbdc2;"></div>
<svg class="b" style="left:1619px;top:256.5px;" width="16" height="15" viewBox="0 0 16 15"><path d="M1.5 1.5h12.5v8.5H6l-3 3v-3H1.5z" fill="none" stroke="#222" stroke-width="1.3" stroke-linejoin="round"/></svg>
<div class="b" style="left:1651.5px;top:249.5px;width:86.5px;height:28.5px;background:#c8401f;border-radius:5px;"></div>
<svg class="b" style="left:1657px;top:256px;" width="17" height="16" viewBox="0 0 17 16"><path d="M6.5 3H3.5a2 2 0 0 0-2 2v7.5a2 2 0 0 0 2 2h8a2 2 0 0 0 2-2V11" fill="none" stroke="#fff" stroke-width="1.3" stroke-linecap="round"/><path d="M10.5 1.5l4.5 4-4.5 4v-2.5c-3 0-4.8 1-6 3 .3-3.5 2.5-6 6-6.2z" fill="none" stroke="#fff" stroke-width="1.2" stroke-linejoin="round"/></svg>
<div class="t" style="left:1677.5px;top:256.5px;font-size:16px;color:#fff;transform:scaleX(0.949);-webkit-text-stroke:.3px #fff;">Share</div>
<svg class="b" style="left:1725.25px;top:261.75px;" width="8.5" height="5.5" viewBox="0 0 8.5 5.5"><path d="M1 1L4.25 4.5L7.5 1" fill="none" stroke="#fff" stroke-width="1.3" stroke-linecap="round" stroke-linejoin="round"/></svg>
<div class="b" style="left:176px;top:283px;width:1567px;height:124px;background:#fdfdfd;border-radius:8px;box-shadow:0 1px 3px rgba(0,0,0,.22),0 0 1px rgba(0,0,0,.15);"></div>
<svg class="b" style="left:200px;top:292px;" width="37" height="39" viewBox="0 0 37 39"><path d="M5 5.5h22a1.5 1.5 0 0 1 1.5 1.5v23a1.5 1.5 0 0 1-1.5 1.5H5a1.5 1.5 0 0 1-1.5-1.5V7A1.5 1.5 0 0 1 5 5.5z" fill="#fbe9d0" stroke="#e8912d" stroke-width="1.5"/><path d="M10 8.5V6a2 2 0 0 1 2-2h1.5a2.6 2.6 0 0 1 5 0H20a2 2 0 0 1 2 2v2.5z" fill="#f3f3f3" stroke="#6b6b6b" stroke-width="1.2"/><rect x="17.5" y="15.5" width="18" height="22" rx="1" fill="#f8f8f8" stroke="#4d4d4d" stroke-width="1.4"/></svg>
<div class="t" style="left:199.6px;top:338px;font-size:15px;color:#242424;transform:scaleX(0.873);">Paste</div>
<svg class="b" style="left:211.25px;top:361.2px;" width="8.5" height="5.6" viewBox="0 0 8.5 5.6"><path d="M1 1L4.25 4.6L7.5 1" fill="none" stroke="#333" stroke-width="1.3" stroke-linecap="round" stroke-linejoin="round"/></svg>
<svg class="b" style="left:251px;top:292px;" width="16" height="21" viewBox="0 0 16 21"><path d="M4 1l6.5 13M12 1L5.5 14" stroke="#3b3b3b" stroke-width="1.2" fill="none"/><circle cx="4.2" cy="16.5" r="2.4" fill="none" stroke="#2b7cd3" stroke-width="1.3"/><circle cx="11.8" cy="16.5" r="2.4" fill="none" stroke="#2b7cd3" stroke-width="1.3"/></svg>
<svg class="b" style="left:249px;top:325px;" width="21" height="21" viewBox="0 0 21 21"><path d="M6.5 4.5V1h6.5l.5 0M1 1h5.5M1 1v13.5h4" fill="none" stroke="#4a4a4a" stroke-width="1.2"/><path d="M6.5 5.5h8l4.5 4.5v10h-12.5z" fill="#fafafa" stroke="#4a4a4a" stroke-width="1.2" stroke-linejoin="round"/><path d="M14.5 5.5v4.5h4.5M9.5 13h6.5M9.5 16h6.5" fill="none" stroke="#4a4a4a" stroke-width="1.1"/></svg>
<svg class="b" style="left:284.25px;top:332.2px;" width="8.5" height="5.6" viewBox="0 0 8.5 5.6"><path d="M1 1L4.25 4.6L7.5 1" fill="none" stroke="#333" stroke-width="1.3" stroke-linecap="round" stroke-linejoin="round"/></svg>
<svg class="b" style="left:250px;top:356px;" width="21" height="21" viewBox="0 0 21 21"><path d="M2 10.5l8.5-3.5 4 6.5-6 6.5z" fill="#fbe3c4" stroke="#e07b1a" stroke-width="1.3" stroke-linejoin="round"/><path d="M5 13l5 5M7.5 11.5l4.5 5" stroke="#e07b1a" stroke-width="1"/><path d="M10.5 7l2.5-3.5 4.5 3-1.5 4z" fill="#f3f3f3" stroke="#4a4a4a" stroke-width="1.2" stroke-linejoin="round"/><path d="M15 3.5l2.5-2.5 2 1.5-2 3" fill="none" stroke="#4a4a4a" stroke-width="1.2"/></svg>
<div class="t" style="left:208px;top:387.2px;font-size:13.5px;color:#3a3a3a;transform:scaleX(0.969);">Clipboard</div>
<svg class="b" style="left:297.5px;top:388.5px;" width="11" height="11" viewBox="0 0 11 11"><path d="M1 3.5V1h8.5M3.5 3.5l6 6M9.8 5v4.8H5" fill="none" stroke="#444" stroke-width="1.1"/></svg>
<div class="b" style="left:311.5px;top:289px;width:1px;height:110px;background:#d6d6d8;"></div>
<svg class="b" style="left:328px;top:293.5px;" width="37" height="29" viewBox="0 0 37 29"><rect x="1" y="1" width="35" height="27" fill="#f5f5f5" stroke="#5a5a5a" stroke-width="1.5"/><rect x="3.8" y="3.8" width="29.4" height="21.4" fill="none" stroke="#8a8a8a" stroke-width="1"/><path d="M3.8 9.8h29.4M16.5 9.8v15.4" stroke="#6a6a6a" stroke-width="1.3"/></svg>
<div class="t" style="left:327.6px;top:334px;font-size:15px;color:#242424;transform:scaleX(0.893);">Slides</div>
<svg class="b" style="left:341.25px;top:357.2px;" width="8.5" height="5.6" viewBox="0 0 8.5 5.6"><path d="M1 1L4.25 4.6L7.5 1" fill="none" stroke="#333" stroke-width="1.3" stroke-linecap="round" stroke-linejoin="round"/></svg>
<div class="b" style="left:379px;top:289px;width:1px;height:110px;background:#d6d6d8;"></div>
<div class="b" style="left:390px;top:288.5px;width:194px;height:28.5px;background:#efeff2;border-radius:4px;"></div>
<svg class="b" style="left:572.5px;top:300.3px;" width="8" height="5.4" viewBox="0 0 8 5.4"><path d="M1 1L4 4.4L7 1" fill="none" stroke="#9a9a9a" stroke-width="1.1" stroke-linecap="round" stroke-linejoin="round"/></svg>
<div class="b" style="left:587px;top:288.5px;width:56.5px;height:28.5px;background:#efeff2;border-radius:4px;"></div>
<div class="t" style="left:590.5px;top:296.2px;font-size:14.5px;color:#b4b4b8;transform:scaleX(0.961);">18</div>
<svg class="b" style="left:632px;top:300.3px;" width="8" height="5.4" viewBox="0 0 8 5.4"><path d="M1 1L4 4.4L7 1" fill="none" stroke="#9a9a9a" stroke-width="1.1" stroke-linecap="round" stroke-linejoin="round"/></svg>
<div class="t" style="left:399.7px;top:326px;font-size:16px;color:#9a9a9a;-webkit-text-stroke:.4px #9a9a9a;">B</div>
<div class="t" style="left:433.3px;top:326px;font-size:16px;color:#9a9a9a;font-style:italic;font-family:'Liberation Serif',serif;">I</div>
<div class="t" style="left:462.4px;top:325.7px;font-size:15.5px;color:#9a9a9a;text-decoration:underline;">U</div>
<div class="t" style="left:495.2px;top:326px;font-size:16px;color:#9a9a9a;text-shadow:1px 1px 0 #d5d5d5;">S</div>
<div class="t" style="left:525.7px;top:327.5px;font-size:14px;color:#9a9a9a;text-decoration:line-through;">ab</div>
<div class="t" style="left:556.5px;top:323.9px;font-size:13.5px;color:#9a9a9a;">AV</div>
<svg class="b" style="left:556px;top:337px;" width="20" height="6" viewBox="0 0 20 6"><path d="M1 3h17M3.5 .8L1 3l2.5 2.2M15.5 .8L18 3l-2.5 2.2" fill="none" stroke="#9a9a9a" stroke-width="1"/></svg>
<svg class="b" style="left:582.75px;top:331.4px;" width="7.5" height="5.2" viewBox="0 0 7.5 5.2"><path d="M1 1L3.75 4.2L6.5 1" fill="none" stroke="#9a9a9a" stroke-width="1.1" stroke-linecap="round" stroke-linejoin="round"/></svg>
<svg class="b" style="left:394px;top:355px;" width="22" height="22" viewBox="0 0 22 22"><path d="M8 12.5l7-8.5 3.5 3-7 8.5zM8 12.5l-2.5 4.5 5.5-1.5" fill="none" stroke="#9a9a9a" stroke-width="1.2" stroke-linejoin="round"/><rect x="1" y="18" width="20" height="4" fill="#c4c4c4"/></svg>
<svg class="b" style="left:424.25px;top:365.4px;" width="7.5" height="5.2" viewBox="0 0 7.5 5.2"><path d="M1 1L3.75 4.2L6.5 1" fill="none" stroke="#9a9a9a" stroke-width="1.1" stroke-linecap="round" stroke-linejoin="round"/></svg>
<div class="t" style="left:449.8px;top:355.2px;font-size:17px;color:#9a9a9a;">A</div>
<div class="b" style="left:445.5px;top:373px;width:20px;height:4px;background:#c4c4c4;"></div>
<svg class="b" style="left:474.75px;top:365.4px;" width="7.5" height="5.2" viewBox="0 0 7.5 5.2"><path d="M1 1L3.75 4.2L6.5 1" fill="none" stroke="#9a9a9a" stroke-width="1.1" stroke-linecap="round" stroke-linejoin="round"/></svg>
<div class="t" style="left:496px;top:359.2px;font-size:16px;color:#9a9a9a;transform:scaleX(1.124);">Aa</div>
<svg class="b" style="left:522.75px;top:365.4px;" width="7.5" height="5.2" viewBox="0 0 7.5 5.2"><path d="M1 1L3.75 4.2L6.5 1" fill="none" stroke="#9a9a9a" stroke-width="1.1" stroke-linecap="round" stroke-linejoin="round"/></svg>
<div class="b" style="left:543px;top:352px;width:1px;height:30px;background:#dcdcdc;"></div>
<div class="t" style="left:553px;top:357.2px;font-size:19px;color:#9a9a9a;transform:scaleX(1.065);">A</div>
<svg class="b" style="left:566px;top:357px;" width="8" height="5" viewBox="0 0 8 5"><path d="M1 4l3-3 3 3" fill="none" stroke="#9a9a9a" stroke-width="1"/></svg>
<div class="t" style="left:587px;top:360.2px;font-size:16px;color:#9a9a9a;transform:scaleX(1.078);">A</div>
<svg class="b" style="left:598px;top:358px;" width="7" height="5" viewBox="0 0 7 5"><path d="M1 1l2.5 2.5L6 1" fill="none" stroke="#9a9a9a" stroke-width="1"/></svg>
<div class="b" style="left:611px;top:352px;width:1px;height:30px;background:#dcdcdc;"></div>
<div class="t" style="left:618px;top:356.7px;font-size:18px;color:#9a9a9a;transform:scaleX(1.041);">A</div>
<svg class="b" style="left:627px;top:366px;" width="12" height="11" viewBox="0 0 12 11"><path d="M1.5 7L6.5 1.5 11 5.5 6 10.5H3.5z" fill="#e9e9e9" stroke="#9a9a9a" stroke-width="1"/></svg>
<div class="t" style="left:493.3px;top:387.2px;font-size:13.5px;color:#3a3a3a;transform:scaleX(0.963);">Font</div>
<svg class="b" style="left:639px;top:388.5px;" width="11" height="11" viewBox="0 0 11 11"><path d="M1 3.5V1h8.5M3.5 3.5l6 6M9.8 5v4.8H5" fill="none" stroke="#a8a8a8" stroke-width="1.1"/></svg>
<div class="b" style="left:653.3px;top:289px;width:1px;height:110px;background:#d6d6d8;"></div>
<svg class="b" style="left:679px;top:293px;" width="37" height="28" viewBox="0 0 37 28"><path d="M1 1.5h35M6 9.8h25M1 18h35M6 26.2h25" stroke="#3b3b3b" stroke-width="1.5"/></svg>
<div class="t" style="left:665px;top:334px;font-size:15px;color:#242424;transform:scaleX(0.928);">Paragraph</div>
<svg class="b" style="left:692.55px;top:357.2px;" width="8.5" height="5.6" viewBox="0 0 8.5 5.6"><path d="M1 1L4.25 4.6L7.5 1" fill="none" stroke="#333" stroke-width="1.3" stroke-linecap="round" stroke-linejoin="round"/></svg>
<div class="b" style="left:740.8px;top:289px;width:1px;height:110px;background:#d6d6d8;"></div>
<svg class="b" style="left:762px;top:290px;" width="37" height="37" viewBox="0 0 37 37"><path d="M17 27.5H1.5V1.5h25V9" fill="none" stroke="#4a4a4a" stroke-width="1.4"/><path d="M15 35.5L24.5 11.5 34 35.5M18.5 27.5h12" fill="none" stroke="#1e88d8" stroke-width="1.8"/></svg>
<div class="t" style="left:753.7px;top:334px;font-size:15px;color:#242424;transform:scaleX(0.963);">Drawing</div>
<svg class="b" style="left:775.55px;top:357.2px;" width="8.5" height="5.6" viewBox="0 0 8.5 5.6"><path d="M1 1L4.25 4.6L7.5 1" fill="none" stroke="#333" stroke-width="1.3" stroke-linecap="round" stroke-linejoin="round"/></svg>
<div class="b" style="left:817.5px;top:289px;width:1px;height:110px;background:#d6d6d8;"></div>
<svg class="b" style="left:832px;top:290px;" width="39" height="38" viewBox="0 0 39 38"><circle cx="25" cy="13.5" r="12" fill="none" stroke="#3b3b3b" stroke-width="1.5"/><path d="M16.5 22.5L1.5 36.5" stroke="#3b3b3b" stroke-width="1.7" stroke-linecap="round"/></svg>
<div class="t" style="left:830px;top:334px;font-size:15px;color:#242424;transform:scaleX(0.97);">Editing</div>
<svg class="b" style="left:847.55px;top:357.2px;" width="8.5" height="5.6" viewBox="0 0 8.5 5.6"><path d="M1 1L4.25 4.6L7.5 1" fill="none" stroke="#333" stroke-width="1.3" stroke-linecap="round" stroke-linejoin="round"/></svg>
<div class="b" style="left:885.8px;top:289px;width:1px;height:110px;background:#d6d6d8;"></div>
<svg class="b" style="left:933px;top:295px;" width="34" height="36" viewBox="0 0 34 36"><path d="M3.5 1.5h13l6.5 6.5v19.5a2.5 2.5 0 0 1-2.5 2.5H3.5A2.5 2.5 0 0 1 1 27.5V4a2.5 2.5 0 0 1 2.5-2.5z" fill="#fcfcff" stroke="#4656ee" stroke-width="1.5"/><path d="M6.5 20.5c3-1.5 5-5 5.5-9.5.2-1.5-1.5-1.5-1.3.2.5 4 3.5 7.3 7.3 7.5 1.5 0 1.5-1.5 0-1.5-4 .2-8.5 1.5-11.5 3.3z" fill="none" stroke="#4656ee" stroke-width="1"/><g fill="none" stroke="#4656ee" stroke-width="1.9" stroke-linecap="round"><rect x="22" y="16.5" width="10" height="6" rx="3" transform="rotate(-45 27 19.5)" fill="#fdfdfd"/><rect x="15.5" y="23" width="10" height="6" rx="3" transform="rotate(-45 20.5 26)" fill="#fdfdfd"/></g></svg>
<div class="t" style="left:910px;top:336.4px;font-size:15px;color:#242424;transform:scaleX(0.903);">Create PDF</div>
<div class="t" style="left:900px;top:355.9px;font-size:15px;color:#242424;transform:scaleX(0.954);">and Share link</div>
<svg class="b" style="left:1046px;top:295px;" width="34" height="36" viewBox="0 0 34 36"><path d="M3.5 1.5h13l6.5 6.5v19.5a2.5 2.5 0 0 1-2.5 2.5H3.5A2.5 2.5 0 0 1 1 27.5V4a2.5 2.5 0 0 1 2.5-2.5z" fill="#fcfcff" stroke="#4656ee" stroke-width="1.5"/><path d="M6.5 20.5c3-1.5 5-5 5.5-9.5.2-1.5-1.5-1.5-1.3.2.5 4 3.5 7.3 7.3 7.5 1.5 0 1.5-1.5 0-1.5-4 .2-8.5 1.5-11.5 3.3z" fill="none" stroke="#4656ee" stroke-width="1"/><rect x="14.5" y="22.5" width="17.5" height="12" rx="1.5" fill="#fdfdfd" stroke="#4656ee" stroke-width="1.5"/><path d="M15 23.5l8.3 6.5 8.3-6.5" fill="none" stroke="#4656ee" stroke-width="1.4"/></svg>
<div class="t" style="left:1008px;top:336.4px;font-size:15px;color:#242424;transform:scaleX(0.927);">Create PDF and</div>
<div class="t" style="left:1001px;top:355.9px;font-size:15px;color:#242424;transform:scaleX(0.973);">Share via Outlook</div>
<div class="t" style="left:965.5px;top:387.2px;font-size:13.5px;color:#3a3a3a;transform:scaleX(0.96);">Adobe Acrobat</div>
<div class="b" style="left:1130px;top:289px;width:1px;height:110px;background:#d6d6d8;"></div>
<svg class="b" style="left:1153px;top:292px;" width="25" height="38" viewBox="0 0 25 38"><rect x="6.5" y="1" width="12" height="25" rx="6" fill="#6fb1e8" stroke="#2a7fd0" stroke-width="1.3"/><path d="M1.5 21a11 11 0 0 0 22 0M12.5 32.5V37" fill="none" stroke="#4a4a4a" stroke-width="1.5" stroke-linecap="round"/></svg>
<div class="t" style="left:1144.2px;top:338px;font-size:15px;color:#242424;transform:scaleX(0.964);">Dictate</div>
<svg class="b" style="left:1161.05px;top:361.2px;" width="8.5" height="5.6" viewBox="0 0 8.5 5.6"><path d="M1 1L4.25 4.6L7.5 1" fill="none" stroke="#333" stroke-width="1.3" stroke-linecap="round" stroke-linejoin="round"/></svg>
<div class="t" style="left:1150.5px;top:387.2px;font-size:13.5px;color:#3a3a3a;transform:scaleX(0.924);">Voice</div>
<div class="b" style="left:1202px;top:289px;width:1px;height:110px;background:#d6d6d8;"></div>
<svg class="b" style="left:1233px;top:290px;" width="36" height="38" viewBox="0 0 36 38"><path d="M14 4.5H1.5v32.5h25V22" fill="#f7fbff" stroke="#2a8ad8" stroke-width="1.4"/><g transform="rotate(-40 20 15)"><rect x="6" y="10" width="20" height="9" fill="#eaf4fd" stroke="#2a8ad8" stroke-width="1.4"/><rect x="8.5" y="12.7" width="12" height="3.6" fill="none" stroke="#2a8ad8" stroke-width="1.2"/><rect x="26" y="7.5" width="4.5" height="14" fill="#2a8ad8"/><rect x="32" y="10.5" width="5" height="8" fill="#fff" stroke="#2a8ad8" stroke-width="1.3"/></g></svg>
<div class="t" style="left:1215.7px;top:336.4px;font-size:15px;color:#242424;transform:scaleX(0.963);">Sensitivity</div>
<svg class="b" style="left:1243.05px;top:359.2px;" width="8.5" height="5.6" viewBox="0 0 8.5 5.6"><path d="M1 1L4.25 4.6L7.5 1" fill="none" stroke="#333" stroke-width="1.3" stroke-linecap="round" stroke-linejoin="round"/></svg>
<div class="t" style="left:1218.8px;top:387.2px;font-size:13.5px;color:#3a3a3a;transform:scaleX(0.946);">Sensitivity</div>
<div class="b" style="left:1293px;top:289px;width:1px;height:110px;background:#d6d6d8;"></div>
<svg class="b" style="left:1315.5px;top:293px;" width="36" height="36" viewBox="0 0 36 36"><rect x="1" y="1" width="34" height="34" fill="#fff7f3" stroke="#d84a20" stroke-width="1.4"/><g fill="#fff" stroke="#d84a20" stroke-width="1.3"><rect x="5" y="5" width="10.5" height="10.5"/><rect x="20" y="5" width="10.5" height="10.5"/><rect x="5" y="20" width="10.5" height="10.5"/><rect x="20" y="20" width="10.5" height="10.5"/></g></svg>
<div class="t" style="left:1307.7px;top:336px;font-size:15px;color:#242424;">Add-ins</div>
<div class="t" style="left:1310px;top:387.2px;font-size:13.5px;color:#3a3a3a;transform:scaleX(0.972);">Add-ins</div>
<div class="b" style="left:1372px;top:289px;width:1px;height:110px;background:#d6d6d8;"></div>
<svg class="b" style="left:1405px;top:290px;" width="40" height="36" viewBox="0 0 40 36"><rect x="4.5" y="8.5" width="33.5" height="25" fill="#f2f2f2" stroke="#5a5a5a" stroke-width="1.6"/><rect x="8" y="12" width="26.5" height="18" fill="none" stroke="#7a7a7a" stroke-width="1"/><path d="M8 17.5h26.5M25 17.5v12.5" stroke="#6a6a6a" stroke-width="1.2"/><path d="M9.5 1h7.5l-4 8.5h5L6 24.5l3-10H3z" fill="#fbd9a0" stroke="#ea8a1e" stroke-width="1.3" stroke-linejoin="round"/></svg>
<div class="t" style="left:1403.5px;top:336px;font-size:15px;color:#242424;transform:scaleX(0.964);">Design</div>
<div class="t" style="left:1386px;top:355.9px;font-size:15px;color:#242424;transform:scaleX(0.969);">Suggestions</div>
<svg class="b" style="left:1481px;top:293px;" width="38" height="35" viewBox="0 0 38 35"><defs><linearGradient id="cp1" x1="0" y1="0" x2="1" y2="1"><stop offset="0" stop-color="#2a7be8"/><stop offset=".5" stop-color="#36c0d8"/><stop offset="1" stop-color="#7bd34a"/></linearGradient><linearGradient id="cp2" x1="0" y1="0" x2="1" y2="1"><stop offset="0" stop-color="#9a6cf0"/><stop offset=".5" stop-color="#e86cc0"/><stop offset="1" stop-color="#f9a04a"/></linearGradient><linearGradient id="cp3" x1="0" y1="0" x2="0" y2="1"><stop offset="0" stop-color="#ffd24a"/><stop offset="1" stop-color="#f0602a"/></linearGradient></defs>
    <path d="M12 1.5h12c3 0 4.5 1.5 5.5 4l1.5 4.5h-8l-5 15.5c-1 3-2.5 4.5-5.5 4.5H6c-3.5 0-5.5-3-4.5-6.5L6.5 6c1-3 2.5-4.5 5.5-4.5z" fill="url(#cp1)"/>
    <path d="M26 34h-12c-3 0-4.5-1.5-5.5-4l-1-3.5h7.5l5-16.5c1-3 2.5-4.5 5.5-4.5H32c3.5 0 5.5 3 4.5 6.5L31.5 29.5c-1 3-2.5 4.5-5.5 4.5z" fill="url(#cp2)"/>
    <path d="M7.5 26.5h8l-1 3c-1 3-2.5 4.5-5 4.5H9c2-1 2.5-2.5 2-4.5z" fill="url(#cp3)"/><path d="M15.5 26.5l5-16.5c.3-1 .8-2 1.5-2.8l1 2.8-5 16.5z" fill="#fff" opacity=".85"/></svg>
<div class="t" style="left:1476px;top:336px;font-size:15px;color:#242424;transform:scaleX(1.028);">Copilot</div>
<div class="t" style="left:1433.5px;top:387.2px;font-size:13.5px;color:#3a3a3a;transform:scaleX(0.976);">Copilot</div>
<div class="b" style="left:1536px;top:289px;width:1px;height:110px;background:#d6d6d8;"></div>
<div class="b" style="left:1569.5px;top:293.2px;width:34.6px;height:34.6px;background:#0c0c0c;border-radius:18px;"></div>
<div class="t" style="left:1576.8px;top:303.9px;font-size:15.5px;color:#fff;font-weight:bold;font-family:'Liberation Serif',serif;transform:scaleX(0.93);">rM</div>
<div class="t" style="left:1560px;top:336px;font-size:15px;color:#242424;transform:scaleX(0.935);">Read on</div>
<div class="t" style="left:1550.5px;top:355.9px;font-size:15px;color:#242424;transform:scaleX(0.973);">reMarkable</div>
<div class="t" style="left:1553.5px;top:387.2px;font-size:13.5px;color:#3a3a3a;transform:scaleX(0.955);">reMarkable</div>
<div class="b" style="left:1635.5px;top:289px;width:1px;height:110px;background:#d6d6d8;"></div>
<svg class="b" style="left:1718.5px;top:386.25px;" width="13" height="7.5" viewBox="0 0 13 7.5"><path d="M1 1L6.5 6.5L12 1" fill="none" stroke="#333" stroke-width="1.4" stroke-linecap="round" stroke-linejoin="round"/></svg>
<!-- thumbs -->
<div class="b" style="left:166px;top:407px;width:268px;height:540px;background:#e5e5e8;"></div>
<div class="b" style="left:434.5px;top:408px;width:20.5px;height:545px;background:#f3f3f6;border-radius:10px;"></div>
<div class="b" style="left:458px;top:407px;width:1px;height:540px;background:#f0f1f4;"></div>
<svg class="b" style="left:439px;top:412px;" width="12" height="9" viewBox="0 0 12 9"><path d="M6 1.5L10.5 7.5H1.5z" fill="#707074" stroke="#707074" stroke-width="1.5" stroke-linejoin="round"/></svg>
<div class="b" style="left:440px;top:593.5px;width:9.6px;height:55.5px;background:#6a6a6a;border-radius:5px;"></div>
<div class="b" style="left:1732px;top:408px;width:20px;height:545px;background:#f2f3f6;border-radius:10px;"></div>
<svg class="b" style="left:1736px;top:412px;" width="12" height="9" viewBox="0 0 12 9"><path d="M6 1.5L10.5 7.5H1.5z" fill="#707074" stroke="#707074" stroke-width="1.5" stroke-linejoin="round"/></svg>
<div class="b" style="left:1737px;top:589px;width:10px;height:24.5px;background:#6a6a6a;border-radius:5px;"></div>
<svg class="b" style="left:1736px;top:907px;" width="12" height="9" viewBox="0 0 12 9"><path d="M6 7.5L10.5 1.5H1.5z" fill="#707074" stroke="#707074" stroke-width="1.5" stroke-linejoin="round"/></svg>
<svg class="b" style="left:1735.5px;top:924px;" width="13" height="18" viewBox="0 0 13 18"><path d="M6.5 1L12 8H1zM6.5 9L12 16H1z" fill="#767676"/></svg>
<svg class="b" style="left:210.5px;top:407px;border-radius:0 0 4px 4px;overflow:hidden;box-shadow:0 .5px 2px rgba(0,0,0,.35)" width="199" height="96" viewBox="0 11 199 96"><defs><filter id="b13" x="-5%" y="-5%" width="110%" height="110%"><feGaussianBlur stdDeviation=".8"/></filter></defs><rect width="199" height="107" fill="#fff"/><g filter="url(#b13)"><rect x="55" y="0" width="80" height="50" fill="#4a4a4a"/><rect x="55" y="0" width="80" height="16" fill="#2e2e2e"/><rect x="55" y="38" width="80" height="12" fill="#9a9a9a"/><rect x="118" y="14" width="16" height="26" fill="#151515"/><circle cx="124" cy="39" r="4" fill="#333"/><ellipse cx="66" cy="19.5" rx="1.7" ry="2" fill="#b5b5b5"/><rect x="63.8" y="21.5" width="4.6" height="19" rx="1.5" fill="#262626"/><ellipse cx="72.3" cy="19.5" rx="1.7" ry="2" fill="#b5b5b5"/><rect x="70.1" y="21.5" width="4.6" height="19" rx="1.5" fill="#262626"/><ellipse cx="78.6" cy="19.5" rx="1.7" ry="2" fill="#b5b5b5"/><rect x="76.4" y="21.5" width="4.6" height="19" rx="1.5" fill="#262626"/><ellipse cx="84.9" cy="19.5" rx="1.7" ry="2" fill="#b5b5b5"/><rect x="82.7" y="21.5" width="4.6" height="19" rx="1.5" fill="#262626"/><ellipse cx="91.2" cy="19.5" rx="1.7" ry="2" fill="#b5b5b5"/><rect x="89" y="21.5" width="4.6" height="19" rx="1.5" fill="#262626"/><ellipse cx="97.5" cy="19.5" rx="1.7" ry="2" fill="#b5b5b5"/><rect x="95.3" y="21.5" width="4.6" height="19" rx="1.5" fill="#262626"/><ellipse cx="103.8" cy="19.5" rx="1.7" ry="2" fill="#b5b5b5"/><rect x="101.6" y="21.5" width="4.6" height="19" rx="1.5" fill="#262626"/><ellipse cx="110.1" cy="19.5" rx="1.7" ry="2" fill="#b5b5b5"/><rect x="107.9" y="21.5" width="4.6" height="19" rx="1.5" fill="#262626"/><ellipse cx="116.4" cy="19.5" rx="1.7" ry="2" fill="#b5b5b5"/><rect x="114.2" y="21.5" width="4.6" height="19" rx="1.5" fill="#262626"/><rect x="50" y="52" width="85" height="55" fill="#5a5a5a"/><rect x="50" y="52" width="85" height="12" fill="#3a3a3a"/><path d="M86 54h40l6 8v24H84z" fill="#0e0e0e"/><rect x="118" y="62" width="12" height="14" fill="#d8d8d8"/><circle cx="128" cy="88" r="7" fill="#1a1a1a"/><circle cx="128" cy="88" r="3.5" fill="#8a8a8a"/><rect x="60" y="74" width="11" height="33" rx="3" fill="#161616"/><circle cx="65.5" cy="71" r="3" fill="#2a2a2a"/><rect x="82" y="78" width="9" height="29" rx="3" fill="#1f1f1f"/><circle cx="86.5" cy="75" r="2.8" fill="#333"/><rect x="93" y="74" width="12" height="18" rx="4" fill="#2a2a2a"/><path d="M72 96l28-6 14 6-6 8H76z" fill="#b8b8b8"/><rect x="100" y="90" width="32" height="17" fill="#8a8a8a"/><rect x="55" y="100" width="40" height="7" fill="#3a3a3a"/><rect x="133" y="0" width="66" height="107" fill="#6e6e6e"/><rect x="133" y="0" width="66" height="30" fill="#454545"/><rect x="133" y="86" width="66" height="21" fill="#cfcfcf"/><path d="M136 26c0-5 12-5 12 0l3 10 2 34c-4 3-14 3-18 0z" fill="#e2e2e2"/><circle cx="142" cy="19" r="3.5" fill="#c8c8c8"/><path d="M137.5 16h9l-1-4h-7z" fill="#f2f2f2"/><path d="M152 26c0-6 18-6 18 0l3 16v34c-6 3-18 3-24 0V42z" fill="#191919"/><circle cx="161" cy="19" r="3.8" fill="#bdbdbd"/><path d="M155 17c2-6 10-6 12 0z" fill="#222"/><rect x="152.5" y="36" width="16" height="15" fill="#f4f4f4"/><path d="M175 26c0-6 18-6 18 0l3 14 1 34c-6 3-18 3-24 0l1-34z" fill="#ececec"/><circle cx="184" cy="19" r="3.8" fill="#c8c8c8"/><path d="M179 17l1-6h8l1 6z" fill="#f5f5f5"/><path d="M183.5 12.5h1v-1h1v1h1v1h-1v1h-1v-1h-1z" fill="#111"/><path d="M158.5 38.5h4v3.5h3.5v4h-3.5v3.5h-4V46H155v-4h3.5zM183 31h3.8v3.5h3.5v3.8h-3.5v3.5H183v-3.5h-3.5v-3.8H183z" fill="#111"/><rect x="138" y="70" width="3" height="20" fill="#1a1a1a"/><rect x="145" y="70" width="3" height="20" fill="#1a1a1a"/><path d="M136 89h6v3h-7zM144 89h6v3h-7z" fill="#111"/><rect x="156" y="77" width="3.5" height="13" fill="#0e0e0e"/><rect x="163" y="77" width="3.5" height="13" fill="#0e0e0e"/><path d="M154 89h6v3h-7zM162 89h6v3h-7z" fill="#080808"/><rect x="180" y="74" width="3" height="15" fill="#2a2a2a"/><rect x="187" y="74" width="3" height="15" fill="#2a2a2a"/><path d="M178 88h6v3h-7zM186 88h6v3h-7z" fill="#111"/><rect x="194" y="0" width="5" height="90" fill="#1f1f1f"/><rect x="133.5" y="11" width="1.2" height="96" fill="#eee"/><rect x="55" y="50" width="79" height="1.6" fill="#eee"/></g><path d="M0 0h62c4 20 4 40-2 60-4 16-6 32-8 47H0z" fill="#fff"/><g fill="#a0a0ac"><rect x="23" y="20" width="14" height="1.2"/><rect x="15" y="24.05" width="30" height="1.2"/><rect x="16" y="28.1" width="28" height="1.2"/><rect x="26" y="32.15" width="8" height="1.2"/><rect x="21" y="36.2" width="18" height="1.2"/><rect x="20" y="40.25" width="20" height="1.2"/><rect x="24" y="44.3" width="12" height="1.2"/><rect x="14" y="48.349999999999994" width="32" height="1.2"/><rect x="19" y="52.4" width="22" height="1.2"/><rect x="18" y="56.449999999999996" width="24" height="1.2"/><rect x="17" y="60.5" width="26" height="1.2"/><rect x="23" y="64.55" width="14" height="1.2"/><rect x="21" y="68.6" width="18" height="1.2"/><rect x="15" y="72.65" width="30" height="1.2"/><rect x="17" y="76.69999999999999" width="26" height="1.2"/><rect x="19" y="80.75" width="22" height="1.2"/><rect x="19" y="84.8" width="22" height="1.2"/><rect x="16" y="88.85" width="28" height="1.2"/></g><g fill="#3b3bd6"><rect x="20" y="40.25" width="20" height="1.3"/><rect x="24" y="44.3" width="12" height="1.3"/><rect x="34" y="60.5" width="10" height="1.3"/><rect x="23" y="64.55" width="14" height="1.3"/><rect x="16" y="84.8" width="22" height="1.3"/><rect x="16" y="88.85" width="28" height="1.3"/></g></svg>
<div class="t" style="left:171.5px;top:525.7px;font-size:19px;color:#444;transform:scaleX(0.899);">14</div>
<div class="b" style="left:210.5px;top:530px;width:199px;height:112px;background:#fff;border-radius:4px;box-shadow:0 .5px 2px rgba(0,0,0,.35);"></div>
<div class="b" style="left:210.5px;top:530px;width:199px;height:19px;background:#d9d9d9;border-radius:4px 4px 0 0;"></div>
<div class="b" style="left:214.5px;top:533px;width:12.5px;height:11.5px;background:#fff;"></div>
<svg class="b" style="left:214.5px;top:533px;" width="12.5" height="11.5" viewBox="0 0 12.5 11.5"><path d="M3.2 1.5h1.6v1.5h1.5v1.6H4.8v1.5H3.2V4.6H1.7V3h1.5z" fill="#ee2a3c"/><path d="M9.8 1.5a2.4 2.4 0 1 0 .6 4.6 2 2 0 0 1 0-4.5z" fill="#ee2a3c"/><rect x="1.7" y="7.5" width="8.5" height="2.3" fill="#333"/></svg>
<div class="b" style="left:218.5px;top:545.5px;width:180px;height:0.6px;background:#9a9a9a;"></div>
<div class="t" style="left:263.2px;top:549.3px;font-size:8.5px;color:#a6002d;font-weight:bold;transform:scaleX(0.975);">Fundamental Principles</div>
<div class="b" style="left:218.5px;top:558.2px;width:180px;height:0.7px;background:#666;"></div>
<svg class="b" style="left:210.5px;top:530px;" width="199" height="112" viewBox="0 0 199 112"><path d="M104 34L47 102.5H161z" fill="none" stroke="#d9142a" stroke-width="1.1"/><path d="M34.5 59h89M34 77.5h104" stroke="#c5cfe0" stroke-width=".7"/></svg>
<div class="t" style="left:305px;top:575.9px;font-size:5.3px;color:#222;font-weight:bold;font-family:'Liberation Serif',serif;transform:scaleX(0.827);">Humanity</div>
<div class="t" style="left:302.5px;top:582.7px;font-size:5.3px;color:#222;font-weight:bold;font-family:'Liberation Serif',serif;transform:scaleX(0.831);">Impartiality</div>
<div class="t" style="left:304.5px;top:593.6px;font-size:5.3px;color:#222;font-weight:bold;font-family:'Liberation Serif',serif;transform:scaleX(0.86);">Neutrality</div>
<div class="t" style="left:300.5px;top:600.7px;font-size:5.3px;color:#222;font-weight:bold;font-family:'Liberation Serif',serif;transform:scaleX(0.889);">Independence</div>
<div class="t" style="left:297px;top:611.9px;font-size:5.3px;color:#222;font-weight:bold;font-family:'Liberation Serif',serif;transform:scaleX(0.882);">Voluntary service</div>
<div class="t" style="left:309px;top:618.6px;font-size:5.3px;color:#222;font-weight:bold;font-family:'Liberation Serif',serif;transform:scaleX(0.869);">Unity</div>
<div class="t" style="left:302.5px;top:624.4px;font-size:5.3px;color:#222;font-weight:bold;font-family:'Liberation Serif',serif;transform:scaleX(0.867);">Universality</div>
<div class="t" style="left:282.5px;top:577.2px;font-size:3.6px;color:#333;transform:scaleX(1.052);">Goal</div>
<div class="t" style="left:266.5px;top:596.7px;font-size:3.6px;color:#333;transform:scaleX(1.017);">Walk</div>
<div class="t" style="left:250.5px;top:616.5px;font-size:3.6px;color:#333;transform:scaleX(0.972);">How</div>
<div class="t" style="left:213px;top:638.4px;font-size:2.3px;color:#333;transform:scaleX(0.912);">Internal</div>
<div class="t" style="left:171.5px;top:664.5px;font-size:19px;color:#d24726;transform:scaleX(0.899);">15</div>
<div class="b" style="left:206.8px;top:665.3px;width:206.4px;height:120px;background:#fff;border:3px solid #7b1426;border-radius:7px;"></div>
<div class="b" style="left:210.5px;top:669.3px;width:199px;height:112px;overflow:hidden;border-radius:3px;"><div class="b" style="left:0;top:0;width:870px;height:490px;transform:scale(0.22874);transform-origin:0 0;">
<div class="b" style="left:0px;top:0px;width:870px;height:490px;background:#fff;"></div>
<div class="b" style="left:0px;top:0px;width:870px;height:80px;background:#d9d9d9;"></div>
<div class="b" style="left:17px;top:12px;width:57px;height:52.6px;background:#fff;"></div>
<svg class="b" style="left:17px;top:12px;" width="57" height="53" viewBox="0 0 57 53"><path d="M15 7.5h6.3v6.2h6.2V20h-6.2v6.2H15V20H8.7v-6.3H15z" fill="#ee2a3c"/><path d="M48.07 10.24A9.25 9.25 0 1 0 48.07 23.26A7 7 0 1 1 48.07 10.24z" fill="#ee2a3c"/></svg>
<div class="t" style="left:25px;top:42.4px;font-size:16px;color:#1d1d1d;font-weight:bold;transform:scaleX(1.058);">IFRC</div>
<div class="t" style="left:127.6px;top:27.8px;font-size:26px;color:#a6002d;font-weight:bold;transform:scaleX(0.972);">The 7 Fundamental Principles</div>
<div class="t" style="left:132.6px;top:86.6px;font-size:14.7px;color:#fb0007;transform:scaleX(0.985);-webkit-text-stroke:.65px #fb0007;">FUNDAMENTAL</div>
<div class="t" style="left:147.1px;top:106.8px;font-size:14.7px;color:#fb0007;transform:scaleX(0.898);-webkit-text-stroke:.65px #fb0007;">PRINCIPLES</div>
<div class="t" style="left:288.1px;top:86.6px;font-size:14.7px;color:#141414;transform:scaleX(1.024);-webkit-text-stroke:.65px #141414;">HUMANITARIAN</div>
<div class="t" style="left:319.1px;top:106.8px;font-size:14.7px;color:#141414;transform:scaleX(0.905);-webkit-text-stroke:.65px #141414;">VALUES</div>
<div class="b" style="left:121.8px;top:129.5px;width:130px;height:113px;background:#e9f0f7;"></div>
<div class="b" style="left:253px;top:129.5px;width:183px;height:113px;background:#e9f0f7;"></div>
<div class="b" style="left:121.8px;top:243.5px;width:130px;height:44.30000000000001px;background:#f6f9fc;"></div>
<div class="b" style="left:253px;top:243.5px;width:183px;height:44.30000000000001px;background:#f6f9fc;"></div>
<div class="b" style="left:121.8px;top:288.8px;width:130px;height:29.19999999999999px;background:#e9f0f7;"></div>
<div class="b" style="left:253px;top:288.8px;width:183px;height:29.19999999999999px;background:#e9f0f7;"></div>
<div class="b" style="left:121.8px;top:319px;width:130px;height:44px;background:#f6f9fc;"></div>
<div class="b" style="left:253px;top:319px;width:183px;height:44px;background:#f6f9fc;"></div>
<div class="b" style="left:121.8px;top:364px;width:130px;height:51.5px;background:#e9f0f7;"></div>
<div class="b" style="left:253px;top:364px;width:183px;height:51.5px;background:#e9f0f7;"></div>
<div class="b" style="left:121.8px;top:416.5px;width:130px;height:31.30000000000001px;background:#f6f9fc;"></div>
<div class="b" style="left:253px;top:416.5px;width:183px;height:31.30000000000001px;background:#f6f9fc;"></div>
<div class="b" style="left:121.8px;top:448.8px;width:130px;height:41.19999999999999px;background:#e9f0f7;"></div>
<div class="b" style="left:253px;top:448.8px;width:183px;height:41.19999999999999px;background:#e9f0f7;"></div>
<div class="t" style="left:127.7px;top:177.5px;font-size:17.3px;color:#fb0007;transform:scaleX(1.061);-webkit-text-stroke:.8px #fb0007;">Humanity</div>
<div class="t" style="left:127.7px;top:257.3px;font-size:17.3px;color:#fb0007;transform:scaleX(1.112);-webkit-text-stroke:.8px #fb0007;">Impartiality</div>
<div class="t" style="left:127.7px;top:294.7px;font-size:17.3px;color:#fb0007;transform:scaleX(1.081);-webkit-text-stroke:.8px #fb0007;">Neutrality</div>
<div class="t" style="left:127.7px;top:331.9px;font-size:17.3px;color:#fb0007;transform:scaleX(1.024);-webkit-text-stroke:.8px #fb0007;">Independence</div>
<div class="t" style="left:127.7px;top:369.1px;font-size:17.3px;color:#fb0007;transform:scaleX(1.072);-webkit-text-stroke:.8px #fb0007;">Voluntary</div>
<div class="t" style="left:127.7px;top:392.5px;font-size:17.3px;color:#fb0007;transform:scaleX(0.962);-webkit-text-stroke:.8px #fb0007;">Service</div>
<div class="t" style="left:127.7px;top:423px;font-size:17.3px;color:#fb0007;transform:scaleX(1.078);-webkit-text-stroke:.8px #fb0007;">Unity</div>
<div class="t" style="left:127.7px;top:460.2px;font-size:17.3px;color:#fb0007;transform:scaleX(1.063);-webkit-text-stroke:.8px #fb0007;">Universality</div>
<div class="b" style="left:260.5px;top:138.8px;width:3.7px;height:3.7px;background:#111;border-radius:2px;"></div>
<div class="t" style="left:271.3px;top:133.8px;font-size:13.4px;color:#111;transform:scaleX(1.072);-webkit-text-stroke:.7px #111;">Mutual understanding</div>
<div class="b" style="left:260.5px;top:156.9px;width:3.7px;height:3.7px;background:#111;border-radius:2px;"></div>
<div class="t" style="left:271.3px;top:151.9px;font-size:13.4px;color:#111;transform:scaleX(0.949);-webkit-text-stroke:.7px #111;">Peace</div>
<div class="b" style="left:260.5px;top:174.5px;width:3.7px;height:3.7px;background:#111;border-radius:2px;"></div>
<div class="t" style="left:271.3px;top:169.5px;font-size:13.4px;color:#111;transform:scaleX(1.049);-webkit-text-stroke:.7px #111;">People-centred</div>
<div class="b" style="left:260.5px;top:193px;width:3.7px;height:3.7px;background:#111;border-radius:2px;"></div>
<div class="t" style="left:271.3px;top:188px;font-size:13.4px;color:#111;transform:scaleX(1.023);-webkit-text-stroke:.7px #111;">Respect for the human</div>
<div class="b" style="left:260.5px;top:227.9px;width:3.7px;height:3.7px;background:#111;border-radius:2px;"></div>
<div class="t" style="left:271.3px;top:222.9px;font-size:13.4px;color:#111;transform:scaleX(1.045);-webkit-text-stroke:.7px #111;">Respect for diversity</div>
<div class="b" style="left:260.5px;top:254.8px;width:3.7px;height:3.7px;background:#111;border-radius:2px;"></div>
<div class="t" style="left:271.3px;top:249.8px;font-size:13.4px;color:#111;transform:scaleX(1.078);-webkit-text-stroke:.7px #111;">Non-discrimination</div>
<div class="b" style="left:260.5px;top:273.2px;width:3.7px;height:3.7px;background:#111;border-radius:2px;"></div>
<div class="t" style="left:271.3px;top:268.2px;font-size:13.4px;color:#111;transform:scaleX(1.045);-webkit-text-stroke:.7px #111;">Respect for diversity</div>
<div class="b" style="left:260.5px;top:298.7px;width:3.7px;height:3.7px;background:#111;border-radius:2px;"></div>
<div class="t" style="left:271.3px;top:293.7px;font-size:13.4px;color:#111;transform:scaleX(1.011);-webkit-text-stroke:.7px #111;">Tolerance</div>
<div class="b" style="left:260.5px;top:330px;width:3.7px;height:3.7px;background:#111;border-radius:2px;"></div>
<div class="t" style="left:271.3px;top:325px;font-size:13.4px;color:#111;transform:scaleX(1.069);-webkit-text-stroke:.7px #111;">Innovation</div>
<div class="b" style="left:260.5px;top:348px;width:3.7px;height:3.7px;background:#111;border-radius:2px;"></div>
<div class="t" style="left:271.3px;top:343px;font-size:13.4px;color:#111;transform:scaleX(1.116);-webkit-text-stroke:.7px #111;">Integrity</div>
<div class="b" style="left:260.5px;top:373.3px;width:3.7px;height:3.7px;background:#111;border-radius:2px;"></div>
<div class="t" style="left:271.3px;top:368.3px;font-size:13.4px;color:#111;-webkit-text-stroke:.7px #111;">Service</div>
<div class="b" style="left:260.5px;top:391.9px;width:3.7px;height:3.7px;background:#111;border-radius:2px;"></div>
<div class="t" style="left:271.3px;top:386.9px;font-size:13.4px;color:#111;transform:scaleX(1.045);-webkit-text-stroke:.7px #111;">Cooperation</div>
<div class="b" style="left:260.5px;top:427.5px;width:3.7px;height:3.7px;background:#111;border-radius:2px;"></div>
<div class="t" style="left:271.3px;top:422.5px;font-size:13.4px;color:#111;transform:scaleX(1.086);-webkit-text-stroke:.7px #111;">Diversity</div>
<div class="b" style="left:260.5px;top:458.5px;width:3.7px;height:3.7px;background:#111;border-radius:2px;"></div>
<div class="t" style="left:271.3px;top:453.5px;font-size:13.4px;color:#111;transform:scaleX(1.078);-webkit-text-stroke:.7px #111;">Non-discrimination</div>
<div class="b" style="left:260.5px;top:476.5px;width:3.7px;height:3.7px;background:#111;border-radius:2px;"></div>
<div class="t" style="left:271.3px;top:471.5px;font-size:13.4px;color:#111;transform:scaleX(1.045);-webkit-text-stroke:.7px #111;">Cooperation</div>
<div class="t" style="left:272.5px;top:205.5px;font-size:13.4px;color:#111;transform:scaleX(1.058);-webkit-text-stroke:.7px #111;">being</div>
<div class="t" style="left:10px;top:476.3px;font-size:7.5px;color:#222;transform:scaleX(1.159);">Internal</div>
<svg class="b" style="left:0;top:0" width="870" height="490" viewBox="661 461 870 490">
<g fill="none" stroke="#111" stroke-width="1.1" stroke-linecap="round" stroke-linejoin="round">
<path d="M1165 570L1225.5 567.5 1231 586c-2 2.5-4.5 2.5-6 0-1.5 2.5-4.5 2.5-6 0-1.5 2.5-4.5 2.5-6 0-1.5 2.5-4.5 2.5-6 0-1.5 2.5-4.5 2.5-6 0-1.5 2.5-4.5 2.5-6 0-1.5 2.5-4.5 2.5-6 0-1.5 2.5-4.5 2.5-6 0-1.5 2.5-4.5 2.5-6 0-1.5 2.5-4.5 2.5-6 0-1.5 2.5-4.5 2.5-6 0-1.5 2.5-4.5 2.5-5.5-.5z" fill="#fff"/>
<path d="M1225.5 567.5L1231 586c-2 2.5-4.5 2.5-6 0-1.5 2.5-4.5 2.5-6 0-1.5 2.5-4.5 2.5-6 0-1.5 2.5-4.5 2.5-6 0l-1 4c-2 2-4 2-5.5 0-1.5 2-4 2-5.5 0-1.5 2-4 2-5.5 0-1.5 2-4 2-5.5 0-1.5 2-4.5 2-5.5-1l3.5-5c1.5 2.5 4.5 2.5 6 0 1.5 2.5 4.5 2.5 6 0 1.5 2.5 4.5 2.5 6 0 1.5 2.5 4.5 2.5 6 0z" fill="#111"/>
<path d="M1165 586v35M1166.8 586v35M1185.5 590v15M1200 586v35M1201.5 586v35M1223.5 588v23" stroke-width="1.3"/>
<path d="M1132 614.5H1258M1146 615.5c25 8 65 8 90 0" stroke-width="1.4"/>
<path d="M1170 613c8-8 40-10 55-1M1160 608a4 4.5 0 1 1 8-2M1168 608l10 5M1212 612l10-6 6 1-8 7" />
<path d="M1158.5 606c.5-4 4-6 7.5-4.5l-1 2.5c-2.5-.5-4 1-4 3.5z" fill="#111"/>
</g>
<g transform="translate(1123.2,555.5) scale(0.93)">
<g fill="#fff" stroke="#111" stroke-width="1.35" stroke-linejoin="round" stroke-linecap="round">
<path d="M12 61L-4 80l5.5 5L21 68z"/>
<path d="M-4 80l-7 9.5c-.8 1.8 1.2 3.2 2.7 2L1.5 85z"/>
<path d="M16.5 61l3.5 32.5h8.5L29.5 61z"/>
<path d="M19.8 93.5l-1.3 4.5c0 1 .5 1.5 1.5 1.5h14c2 0 2.3-1.8.5-2.5L28.5 93.5z"/>
<path d="M14 19C9 30 8.5 48 11.5 62.5h20c4-12.5 3-30.5-3.5-44-4 2-9 2-14 .5z"/>
<path d="M18.5 15l-.5 5.5 6.5 1.5.5-5z"/>
<path d="M16 3.5c5-4 12-2.5 13.5 3l-.3 2 4.3 3c.6.6 0 1.5-.9 1.5h-3l-.3 2.5c-1.5 3.8-7 4.8-11 2.5-3.5-2-5-10-2.3-14.5z"/>
<path d="M16 23.5c-4 10-4 26 .5 37l2.5 4c1.5 1.5 4.5 1 5-1l-1-3.5c1.5-10 1.5-24-1-34" />
</g>
<path d="M14.5 6.5C15 1 21-1.5 26.5 1c-2.5.5-4 2-4.3 4.5l-.4 4.5c-1.5-.3-2.3.7-2 2l.5 3-3.3 1.5c-2.5-2.5-3.3-6.5-2.5-10z" fill="#111"/>
<path d="M24.5 14c1.5.8 3 .6 4-.3M25 7.5l1.5.3" fill="none" stroke="#111" stroke-width=".9" stroke-linecap="round"/>
<path d="M13 35l9.5.5-.3 7.5-9.5-.5z" fill="#fff" stroke="#111" stroke-width=".9"/>
<path d="M17.5 36.5v5.5M14.8 39.3h5.4" stroke="#d8142a" stroke-width="2.1"/>
<path d="M11 53.5c7 1.5 14 1.5 21.5 0M19 21.5l3 4 3-3M26 27l1 26" fill="none" stroke="#111" stroke-width="1"/>
</g>
<g transform="translate(1221.2,553.5) scale(0.975)">
<g fill="#fff" stroke="#111" stroke-width="1.35" stroke-linejoin="round" stroke-linecap="round">
<path d="M12 61L-4 80l5.5 5L21 68z"/>
<path d="M-4 80l-7 9.5c-.8 1.8 1.2 3.2 2.7 2L1.5 85z"/>
<path d="M16.5 61l3.5 32.5h8.5L29.5 61z"/>
<path d="M19.8 93.5l-1.3 4.5c0 1 .5 1.5 1.5 1.5h14c2 0 2.3-1.8.5-2.5L28.5 93.5z"/>
<path d="M14 19C9 30 8.5 48 11.5 62.5h20c4-12.5 3-30.5-3.5-44-4 2-9 2-14 .5z"/>
<path d="M18.5 15l-.5 5.5 6.5 1.5.5-5z"/>
<path d="M16 3.5c5-4 12-2.5 13.5 3l-.3 2 4.3 3c.6.6 0 1.5-.9 1.5h-3l-.3 2.5c-1.5 3.8-7 4.8-11 2.5-3.5-2-5-10-2.3-14.5z"/>
<path d="M16 23.5c-4 10-4 26 .5 37l2.5 4c1.5 1.5 4.5 1 5-1l-1-3.5c1.5-10 1.5-24-1-34" />
</g>
<path d="M14.5 6.5C15 1 21-1.5 26.5 1c-2.5.5-4 2-4.3 4.5l-.4 4.5c-1.5-.3-2.3.7-2 2l.5 3-3.3 1.5c-2.5-2.5-3.3-6.5-2.5-10z" fill="#111"/>
<path d="M24.5 14c1.5.8 3 .6 4-.3M25 7.5l1.5.3" fill="none" stroke="#111" stroke-width=".9" stroke-linecap="round"/>
<path d="M13 35l9.5.5-.3 7.5-9.5-.5z" fill="#fff" stroke="#111" stroke-width=".9"/>
<path d="M17.5 36.5v5.5M14.8 39.3h5.4" stroke="#d8142a" stroke-width="2.1"/>
<path d="M11 53.5c7 1.5 14 1.5 21.5 0M19 21.5l3 4 3-3M26 27l1 26" fill="none" stroke="#111" stroke-width="1"/>
</g>
<g fill="none" stroke="#111" stroke-width="1.1" stroke-linecap="round" stroke-linejoin="round">
<path d="M1337 583.5c12-3 60-3 73 0M1337 583.5c12 2.5 60 2.5 73 0M1336 580.5c-1.5 1.5-1 3.5 1 4M1411.5 580.5c1.5 1.5 1 3.5-1 4" />
<path d="M1373 572.5c2-1 3 1.5 1 2.5-1.5.8-1 2.5.5 2.5M1373 577.5v2"/>
<circle cx="1373" cy="583.3" r="3.6" fill="#fff"/>
<path d="M1337.5 585L1319 626M1338.5 585L1364 636M1339.5 585L1322 624M1409.5 585L1382 634M1410.5 585L1428 626M1408.5 585L1379 637" stroke-width=".8"/>
<ellipse cx="1337.5" cy="640.5" rx="30.5" ry="3.8" fill="#fff"/><ellipse cx="1406" cy="640.5" rx="30" ry="3.8" fill="#fff"/>
<path d="M1308 638.5c20-4 42-4 60 0M1377 638.5c20-4 42-4 58 0" stroke-width="1.6"/>
</g>
<path d="M1371.2 583.3h3.6M1373 581.5v3.6" stroke="#e0162b" stroke-width="1.5"/>
<g fill="#1a1a1a"><ellipse cx="1317" cy="630" rx="6" ry="6.5"/><path d="M1313 637c8-4 20-5 30-4 8 0 16 1 21 3l-2 3.5h-48z"/><path d="M1322 631l6 1.5-1 3.5-6-1z"/><path d="M1383 634c2-3 5-3.5 7-1 8-1 20-3 30-3.5 5-.5 10 0 12 2l1 6.5h-50z"/><path d="M1419 627c2-3 8-4 14-1.5l-3 5-10 1z"/></g>
<g stroke="#fff" stroke-width=".6" fill="none"><path d="M1315 627l4 5M1313 631h8M1330 636l3-3M1340 636l3-3M1350 637l3-3M1392 635l3-3M1402 634l3-3M1412 634l3-3M1422 634l3-3"/></g>
<path d="M1418 626.5c4-3 10-3.5 16 .5l-8 .5" fill="none" stroke="#111" stroke-width="1.1" stroke-linecap="round" stroke-linejoin="round" fill="#fff"/>
<g fill="none" stroke="#111" stroke-width="1.1" stroke-linecap="round" stroke-linejoin="round">
<path d="M1141 741H1258M1156 742c25 9 70 9 95-1" stroke-width="1.5"/>
<path d="M1163 740.5c-1-8 3-12 9-12.5 2-4 6-5 9-3 3-9 7-17 12-24 5-5 12-3 14 3 3 2 4 5 3 8 3 3 6 4 8 2l-6-10c-2-4 0-7 4-8 6-1 13 3 15 9 1 5-3 10-7 14 4-3 10-2 12 3 4 1 6 5 4 9 2 2 2 5 1 7.5z" fill="#fff"/>
<path d="M1207 722l9-16c-3-3-4-6-2-8 5-2 12 1 16 7l-12 22z" fill="#fff"/>
</g>
<g fill="#111"><path d="M1188 701c3-5 11-6 15-1l1 4c-4-2-9-2-13 1z"/><ellipse cx="1199" cy="717" rx="2.6" ry="3.2"/><ellipse cx="1206" cy="723" rx="3.2" ry="2.6"/><ellipse cx="1195" cy="726" rx="3" ry="2.6"/><ellipse cx="1203" cy="731.5" rx="3.2" ry="3"/><ellipse cx="1210.5" cy="730" rx="2.6" ry="3.6"/><ellipse cx="1191" cy="733" rx="2.8" ry="2.6"/><ellipse cx="1186" cy="720" rx="2.2" ry="3"/><ellipse cx="1177" cy="723" rx="2.6" ry="3"/><ellipse cx="1216" cy="736" rx="2.2" ry="3"/><ellipse cx="1198" cy="737.5" rx="3" ry="2.4"/><ellipse cx="1208" cy="737.5" rx="2.6" ry="2.2"/><ellipse cx="1184" cy="731" rx="2" ry="2.6"/><path d="M1238 726c2-3 6-3 7 0l-2 3zM1222 731l4-3 1 4-3 2zM1180 736l4-2 1 5h-5z"/></g>
<g fill="none" stroke="#111" stroke-width="1.1" stroke-linecap="round" stroke-linejoin="round" stroke-width=".9"><path d="M1213.5 709l9.5 5.5M1215.5 705l9.5 5.5M1211.5 713l9.5 5.5M1209.5 717l9 5.5M1218 701l9 6M1166 738.5v-9M1168.8 739.5v-11M1171.6 739.5v-11.5M1174.4 739.5v-11M1177.2 739.5v-8M1222 738c0-5 2-9 5-12M1225.5 739c0-5 2-9 5-11M1229 739c0-4 1-7 3-9M1232.5 739c0-3 1-5 2-7M1236 739.5c0-2 .5-4 1.5-5.5M1185 739c1-4 3-6 6-7M1214 739v-6M1218 739v-5"/><circle cx="1196.5" cy="709.5" r="4.6" fill="#fff"/><path d="M1193.5 710.5c2 2.5 5 2.5 7 0"/><circle cx="1186" cy="727.5" r="3.6" fill="#fff"/><circle cx="1229" cy="723.5" r="4.2" fill="#fff"/><path d="M1224 720c1-4 6-6 10-3 3 2 4 5 3 8M1226 726.5c2 3 5 3 7 0M1225 728c1 3 5 5 8 2"/></g>
<g transform="translate(1127.6,688) scale(0.91)">
<g fill="#fff" stroke="#111" stroke-width="1.35" stroke-linejoin="round" stroke-linecap="round">
<path d="M12 61L-4 80l5.5 5L21 68z"/>
<path d="M-4 80l-7 9.5c-.8 1.8 1.2 3.2 2.7 2L1.5 85z"/>
<path d="M16.5 61l3.5 32.5h8.5L29.5 61z"/>
<path d="M19.8 93.5l-1.3 4.5c0 1 .5 1.5 1.5 1.5h14c2 0 2.3-1.8.5-2.5L28.5 93.5z"/>
<path d="M14 19C9 30 8.5 48 11.5 62.5h20c4-12.5 3-30.5-3.5-44-4 2-9 2-14 .5z"/>
<path d="M18.5 15l-.5 5.5 6.5 1.5.5-5z"/>
<path d="M16 3.5c5-4 12-2.5 13.5 3l-.3 2 4.3 3c.6.6 0 1.5-.9 1.5h-3l-.3 2.5c-1.5 3.8-7 4.8-11 2.5-3.5-2-5-10-2.3-14.5z"/>
<path d="M16 23.5c-4 10-4 26 .5 37l2.5 4c1.5 1.5 4.5 1 5-1l-1-3.5c1.5-10 1.5-24-1-34" />
</g>
<path d="M14.5 6.5C15 1 21-1.5 26.5 1c-2.5.5-4 2-4.3 4.5l-.4 4.5c-1.5-.3-2.3.7-2 2l.5 3-3.3 1.5c-2.5-2.5-3.3-6.5-2.5-10z" fill="#111"/>
<path d="M24.5 14c1.5.8 3 .6 4-.3M25 7.5l1.5.3" fill="none" stroke="#111" stroke-width=".9" stroke-linecap="round"/>
<path d="M13 35l9.5.5-.3 7.5-9.5-.5z" fill="#fff" stroke="#111" stroke-width=".9"/>
<path d="M17.5 36.5v5.5M14.8 39.3h5.4" stroke="#d8142a" stroke-width="2.1"/>
<path d="M11 53.5c7 1.5 14 1.5 21.5 0M19 21.5l3 4 3-3M26 27l1 26" fill="none" stroke="#111" stroke-width="1"/>
</g>
<g transform="translate(1226.6,687) scale(0.91)">
<g fill="#fff" stroke="#111" stroke-width="1.35" stroke-linejoin="round" stroke-linecap="round">
<path d="M12 61L-4 80l5.5 5L21 68z"/>
<path d="M-4 80l-7 9.5c-.8 1.8 1.2 3.2 2.7 2L1.5 85z"/>
<path d="M16.5 61l3.5 32.5h8.5L29.5 61z"/>
<path d="M19.8 93.5l-1.3 4.5c0 1 .5 1.5 1.5 1.5h14c2 0 2.3-1.8.5-2.5L28.5 93.5z"/>
<path d="M14 19C9 30 8.5 48 11.5 62.5h20c4-12.5 3-30.5-3.5-44-4 2-9 2-14 .5z"/>
<path d="M18.5 15l-.5 5.5 6.5 1.5.5-5z"/>
<path d="M16 3.5c5-4 12-2.5 13.5 3l-.3 2 4.3 3c.6.6 0 1.5-.9 1.5h-3l-.3 2.5c-1.5 3.8-7 4.8-11 2.5-3.5-2-5-10-2.3-14.5z"/>
<path d="M16 23.5c-4 10-4 26 .5 37l2.5 4c1.5 1.5 4.5 1 5-1l-1-3.5c1.5-10 1.5-24-1-34" />
</g>
<path d="M14.5 6.5C15 1 21-1.5 26.5 1c-2.5.5-4 2-4.3 4.5l-.4 4.5c-1.5-.3-2.3.7-2 2l.5 3-3.3 1.5c-2.5-2.5-3.3-6.5-2.5-10z" fill="#111"/>
<path d="M24.5 14c1.5.8 3 .6 4-.3M25 7.5l1.5.3" fill="none" stroke="#111" stroke-width=".9" stroke-linecap="round"/>
<path d="M13 35l9.5.5-.3 7.5-9.5-.5z" fill="#fff" stroke="#111" stroke-width=".9"/>
<path d="M17.5 36.5v5.5M14.8 39.3h5.4" stroke="#d8142a" stroke-width="2.1"/>
<path d="M11 53.5c7 1.5 14 1.5 21.5 0M19 21.5l3 4 3-3M26 27l1 26" fill="none" stroke="#111" stroke-width="1"/>
</g>
<g fill="none" stroke="#111" stroke-width="1.1" stroke-linecap="round" stroke-linejoin="round">
<path d="M1359 732.5L1421.5 749M1381 727L1447 744.5" stroke-width="1.8"/><path d="M1361 733.5L1421 750M1372 735.5c8 0 16-2 21-6" stroke-width=".9"/>
<path d="M1327 712c-1-8 6-14 16-15 5-1 9-1 12 0l5 5c-3 5-8 8-14 10l-4 6 3 10 2 14 5 5c1 2-1 3.5-3 3l-5-2-2-4-4-14c-4-8-8-13-11-18z" fill="#fff"/>
<path d="M1327 712h-9c-1.5 0-1.5-2 0-2.5l5-1 3-11c-2-1-5-.5-8-.5-1.5-1-1-2.5 1-3l9-.5c2 0 3 1.5 2.5 3l-3 11M1360 702c6 1 12 5 17 12l4 7-3 1.5-4-1M1352 712c2 5 2 9 1 12l2 2" />
<ellipse cx="1363.5" cy="698.5" rx="4.5" ry="5.5" fill="#fff" transform="rotate(20 1363.5 698.5)"/>
</g>
<path d="M1357 699c0-4 3-8 7-7l2 1c-3 1-4 3-4.5 6l-2 4z" fill="#111"/>
<g transform="translate(1449.3,691) scale(-0.945,0.945)">
<g fill="#fff" stroke="#111" stroke-width="1.35" stroke-linejoin="round" stroke-linecap="round">
<path d="M12 61L-4 80l5.5 5L21 68z"/>
<path d="M-4 80l-7 9.5c-.8 1.8 1.2 3.2 2.7 2L1.5 85z"/>
<path d="M16.5 61l3.5 32.5h8.5L29.5 61z"/>
<path d="M19.8 93.5l-1.3 4.5c0 1 .5 1.5 1.5 1.5h14c2 0 2.3-1.8.5-2.5L28.5 93.5z"/>
<path d="M14 19C9 30 8.5 48 11.5 62.5h20c4-12.5 3-30.5-3.5-44-4 2-9 2-14 .5z"/>
<path d="M18.5 15l-.5 5.5 6.5 1.5.5-5z"/>
<path d="M16 3.5c5-4 12-2.5 13.5 3l-.3 2 4.3 3c.6.6 0 1.5-.9 1.5h-3l-.3 2.5c-1.5 3.8-7 4.8-11 2.5-3.5-2-5-10-2.3-14.5z"/>
<path d="M16 23.5c-4 10-4 26 .5 37l2.5 4c1.5 1.5 4.5 1 5-1l-1-3.5c1.5-10 1.5-24-1-34" />
</g>
<path d="M14.5 6.5C15 1 21-1.5 26.5 1c-2.5.5-4 2-4.3 4.5l-.4 4.5c-1.5-.3-2.3.7-2 2l.5 3-3.3 1.5c-2.5-2.5-3.3-6.5-2.5-10z" fill="#111"/>
<path d="M24.5 14c1.5.8 3 .6 4-.3M25 7.5l1.5.3" fill="none" stroke="#111" stroke-width=".9" stroke-linecap="round"/>
<path d="M13 35l9.5.5-.3 7.5-9.5-.5z" fill="#fff" stroke="#111" stroke-width=".9"/>
<path d="M17.5 36.5v5.5M14.8 39.3h5.4" stroke="#d8142a" stroke-width="2.1"/>
<path d="M11 53.5c7 1.5 14 1.5 21.5 0M19 21.5l3 4 3-3M26 27l1 26" fill="none" stroke="#111" stroke-width="1"/>
</g>
<circle cx="1185" cy="839.5" r="28" fill="#111" stroke="#111" stroke-width="1"/>
<path d="M1165 820c6-5 12-8 20-8.5l12 1-8 6-6 1-2 6-6 2 1 6-5 3-2 8-4-3c-4-6-4-15 0-21z" fill="#fff"/>
<path d="M1171 861l19-47 14 3-17 49z" fill="#fff"/><path d="M1176 863l18-48M1181 865l18-48M1185 866l17-47" stroke="#111" stroke-width=".9" fill="none"/>
<path d="M1201 839l8-6 4 4-1 10-6 8-8 6 2-10z" fill="#fff"/><path d="M1195 822h5v3.5h-5z" fill="#fff" stroke="#111" stroke-width=".8"/>
<g fill="none" stroke="#111" stroke-width="1.1" stroke-linecap="round" stroke-linejoin="round"><path d="M1140 858c25 9 65 9 88 0v12h-88z" fill="#fff" stroke="none"/><path d="M1123 857.5H1247M1140 858.5c25 8 65 8 88 0" stroke-width="1.5"/></g>
<g transform="translate(1153,800) scale(-1.01,1.01)">
<g fill="#fff" stroke="#111" stroke-width="1.35" stroke-linejoin="round" stroke-linecap="round">
<path d="M12 61L-4 80l5.5 5L21 68z"/>
<path d="M-4 80l-7 9.5c-.8 1.8 1.2 3.2 2.7 2L1.5 85z"/>
<path d="M16.5 61l3.5 32.5h8.5L29.5 61z"/>
<path d="M19.8 93.5l-1.3 4.5c0 1 .5 1.5 1.5 1.5h14c2 0 2.3-1.8.5-2.5L28.5 93.5z"/>
<path d="M14 19C9 30 8.5 48 11.5 62.5h20c4-12.5 3-30.5-3.5-44-4 2-9 2-14 .5z"/>
<path d="M18.5 15l-.5 5.5 6.5 1.5.5-5z"/>
<path d="M16 3.5c5-4 12-2.5 13.5 3l-.3 2 4.3 3c.6.6 0 1.5-.9 1.5h-3l-.3 2.5c-1.5 3.8-7 4.8-11 2.5-3.5-2-5-10-2.3-14.5z"/>
<path d="M16 23.5c-4 10-4 26 .5 37l2.5 4c1.5 1.5 4.5 1 5-1l-1-3.5c1.5-10 1.5-24-1-34" />
</g>
<path d="M14.5 6.5C15 1 21-1.5 26.5 1c-2.5.5-4 2-4.3 4.5l-.4 4.5c-1.5-.3-2.3.7-2 2l.5 3-3.3 1.5c-2.5-2.5-3.3-6.5-2.5-10z" fill="#111"/>
<path d="M24.5 14c1.5.8 3 .6 4-.3M25 7.5l1.5.3" fill="none" stroke="#111" stroke-width=".9" stroke-linecap="round"/>
<path d="M13 35l9.5.5-.3 7.5-9.5-.5z" fill="#fff" stroke="#111" stroke-width=".9"/>
<path d="M17.5 36.5v5.5M14.8 39.3h5.4" stroke="#d8142a" stroke-width="2.1"/>
<path d="M11 53.5c7 1.5 14 1.5 21.5 0M19 21.5l3 4 3-3M26 27l1 26" fill="none" stroke="#111" stroke-width="1"/>
</g>
<g transform="translate(1262.9,796.5) scale(-1.04,1.04)">
<g fill="#fff" stroke="#111" stroke-width="1.35" stroke-linejoin="round" stroke-linecap="round">
<path d="M12 61L-4 80l5.5 5L21 68z"/>
<path d="M-4 80l-7 9.5c-.8 1.8 1.2 3.2 2.7 2L1.5 85z"/>
<path d="M16.5 61l3.5 32.5h8.5L29.5 61z"/>
<path d="M19.8 93.5l-1.3 4.5c0 1 .5 1.5 1.5 1.5h14c2 0 2.3-1.8.5-2.5L28.5 93.5z"/>
<path d="M14 19C9 30 8.5 48 11.5 62.5h20c4-12.5 3-30.5-3.5-44-4 2-9 2-14 .5z"/>
<path d="M18.5 15l-.5 5.5 6.5 1.5.5-5z"/>
<path d="M16 3.5c5-4 12-2.5 13.5 3l-.3 2 4.3 3c.6.6 0 1.5-.9 1.5h-3l-.3 2.5c-1.5 3.8-7 4.8-11 2.5-3.5-2-5-10-2.3-14.5z"/>
<path d="M16 23.5c-4 10-4 26 .5 37l2.5 4c1.5 1.5 4.5 1 5-1l-1-3.5c1.5-10 1.5-24-1-34" />
</g>
<path d="M14.5 6.5C15 1 21-1.5 26.5 1c-2.5.5-4 2-4.3 4.5l-.4 4.5c-1.5-.3-2.3.7-2 2l.5 3-3.3 1.5c-2.5-2.5-3.3-6.5-2.5-10z" fill="#111"/>
<path d="M24.5 14c1.5.8 3 .6 4-.3M25 7.5l1.5.3" fill="none" stroke="#111" stroke-width=".9" stroke-linecap="round"/>
<path d="M13 35l9.5.5-.3 7.5-9.5-.5z" fill="#fff" stroke="#111" stroke-width=".9"/>
<path d="M17.5 36.5v5.5M14.8 39.3h5.4" stroke="#d8142a" stroke-width="2.1"/>
<path d="M11 53.5c7 1.5 14 1.5 21.5 0M19 21.5l3 4 3-3M26 27l1 26" fill="none" stroke="#111" stroke-width="1"/>
</g>
<g fill="#111" stroke="#111" stroke-width="1" stroke-linejoin="round"><path d="M1321 830c8-3 14-3 18-1l4 12-2 47-23 2c3-18 5-38 3-60z"/><path d="M1352 829c10-3 20-1 26 6l5 9-10 10-2 34-22 1z"/><path d="M1308 832l13-2 1 23-7 4z"/></g>
<g fill="none" stroke="#111" stroke-width="1.1" stroke-linecap="round" stroke-linejoin="round"><path d="M1339 829l5 59h9l-1-59z" fill="#fff"/><path d="M1341 835l2.5 1M1348 835l2.5 1M1341.5 842l2.5 1M1348.5 842l2.5 1M1342 849l2.5 1M1349 849l2.5 1M1343 866l2.5 1M1349.5 866l2.5 1M1343.5 873l2.5 1M1350 873l2.5 1M1344 880l2.5 1M1350 880l2.5 1" stroke-width="1.1"/>
<ellipse cx="1346" cy="822" rx="8" ry="7.5" fill="#fff"/><path d="M1339 816l.5-5.5 3 3 3.5-4 3.5 4 3-3 .5 5.5z" fill="#fff"/><path d="M1338.5 823c2 7 12 7 15 0 1 5-2 10-7.5 10s-8.5-5-7.5-10z" fill="#111"/><path d="M1342.5 825.5c2 1.5 5 1.5 7 0" stroke="#fff" stroke-width="1"/><path d="M1342 819.5l2.5.5M1348 820l2.5-.5" stroke-width="1.2"/>
<path d="M1308 832l-4-1.5M1318 888l-5 2M1368 888l6 2M1364 846l4-8 3 1-3 9" /></g>
<g fill="none" stroke="#111" stroke-width="1.1" stroke-linecap="round" stroke-linejoin="round"><path d="M1286.5 857H1402M1300 858c25 8 65 8 88-1" stroke-width="1.5"/><path d="M1311 854c2-5 9-7 15-5l3 5z" fill="#fff"/><path d="M1314 853l2-3M1317 853.5l2-4M1320 853.5l2-4M1323 853.5l1.5-3" stroke-width=".8"/></g>
<g transform="translate(1273,802) scale(0.925)">
<g fill="#fff" stroke="#111" stroke-width="1.35" stroke-linejoin="round" stroke-linecap="round">
<path d="M12 61L-4 80l5.5 5L21 68z"/>
<path d="M-4 80l-7 9.5c-.8 1.8 1.2 3.2 2.7 2L1.5 85z"/>
<path d="M16.5 61l3.5 32.5h8.5L29.5 61z"/>
<path d="M19.8 93.5l-1.3 4.5c0 1 .5 1.5 1.5 1.5h14c2 0 2.3-1.8.5-2.5L28.5 93.5z"/>
<path d="M14 19C9 30 8.5 48 11.5 62.5h20c4-12.5 3-30.5-3.5-44-4 2-9 2-14 .5z"/>
<path d="M18.5 15l-.5 5.5 6.5 1.5.5-5z"/>
<path d="M16 3.5c5-4 12-2.5 13.5 3l-.3 2 4.3 3c.6.6 0 1.5-.9 1.5h-3l-.3 2.5c-1.5 3.8-7 4.8-11 2.5-3.5-2-5-10-2.3-14.5z"/>
<path d="M16 23.5c-4 10-4 26 .5 37l2.5 4c1.5 1.5 4.5 1 5-1l-1-3.5c1.5-10 1.5-24-1-34" />
</g>
<path d="M14.5 6.5C15 1 21-1.5 26.5 1c-2.5.5-4 2-4.3 4.5l-.4 4.5c-1.5-.3-2.3.7-2 2l.5 3-3.3 1.5c-2.5-2.5-3.3-6.5-2.5-10z" fill="#111"/>
<path d="M24.5 14c1.5.8 3 .6 4-.3M25 7.5l1.5.3" fill="none" stroke="#111" stroke-width=".9" stroke-linecap="round"/>
<path d="M13 35l9.5.5-.3 7.5-9.5-.5z" fill="#fff" stroke="#111" stroke-width=".9"/>
<path d="M17.5 36.5v5.5M14.8 39.3h5.4" stroke="#d8142a" stroke-width="2.1"/>
<path d="M11 53.5c7 1.5 14 1.5 21.5 0M19 21.5l3 4 3-3M26 27l1 26" fill="none" stroke="#111" stroke-width="1"/>
</g>
<g transform="translate(1374,803.5) scale(0.91)">
<g fill="#fff" stroke="#111" stroke-width="1.35" stroke-linejoin="round" stroke-linecap="round">
<path d="M12 61L-4 80l5.5 5L21 68z"/>
<path d="M-4 80l-7 9.5c-.8 1.8 1.2 3.2 2.7 2L1.5 85z"/>
<path d="M16.5 61l3.5 32.5h8.5L29.5 61z"/>
<path d="M19.8 93.5l-1.3 4.5c0 1 .5 1.5 1.5 1.5h14c2 0 2.3-1.8.5-2.5L28.5 93.5z"/>
<path d="M14 19C9 30 8.5 48 11.5 62.5h20c4-12.5 3-30.5-3.5-44-4 2-9 2-14 .5z"/>
<path d="M18.5 15l-.5 5.5 6.5 1.5.5-5z"/>
<path d="M16 3.5c5-4 12-2.5 13.5 3l-.3 2 4.3 3c.6.6 0 1.5-.9 1.5h-3l-.3 2.5c-1.5 3.8-7 4.8-11 2.5-3.5-2-5-10-2.3-14.5z"/>
<path d="M16 23.5c-4 10-4 26 .5 37l2.5 4c1.5 1.5 4.5 1 5-1l-1-3.5c1.5-10 1.5-24-1-34" />
</g>
<path d="M14.5 6.5C15 1 21-1.5 26.5 1c-2.5.5-4 2-4.3 4.5l-.4 4.5c-1.5-.3-2.3.7-2 2l.5 3-3.3 1.5c-2.5-2.5-3.3-6.5-2.5-10z" fill="#111"/>
<path d="M24.5 14c1.5.8 3 .6 4-.3M25 7.5l1.5.3" fill="none" stroke="#111" stroke-width=".9" stroke-linecap="round"/>
<path d="M13 35l9.5.5-.3 7.5-9.5-.5z" fill="#fff" stroke="#111" stroke-width=".9"/>
<path d="M17.5 36.5v5.5M14.8 39.3h5.4" stroke="#d8142a" stroke-width="2.1"/>
<path d="M11 53.5c7 1.5 14 1.5 21.5 0M19 21.5l3 4 3-3M26 27l1 26" fill="none" stroke="#111" stroke-width="1"/>
</g>
<g transform="translate(1433.5,863) scale(0.74)">
<g fill="#fff" stroke="#111" stroke-width="1.35" stroke-linejoin="round" stroke-linecap="round">
<path d="M12 61L-4 80l5.5 5L21 68z"/>
<path d="M-4 80l-7 9.5c-.8 1.8 1.2 3.2 2.7 2L1.5 85z"/>
<path d="M16.5 61l3.5 32.5h8.5L29.5 61z"/>
<path d="M19.8 93.5l-1.3 4.5c0 1 .5 1.5 1.5 1.5h14c2 0 2.3-1.8.5-2.5L28.5 93.5z"/>
<path d="M14 19C9 30 8.5 48 11.5 62.5h20c4-12.5 3-30.5-3.5-44-4 2-9 2-14 .5z"/>
<path d="M18.5 15l-.5 5.5 6.5 1.5.5-5z"/>
<path d="M16 3.5c5-4 12-2.5 13.5 3l-.3 2 4.3 3c.6.6 0 1.5-.9 1.5h-3l-.3 2.5c-1.5 3.8-7 4.8-11 2.5-3.5-2-5-10-2.3-14.5z"/>
<path d="M16 23.5c-4 10-4 26 .5 37l2.5 4c1.5 1.5 4.5 1 5-1l-1-3.5c1.5-10 1.5-24-1-34" />
</g>
<path d="M14.5 6.5C15 1 21-1.5 26.5 1c-2.5.5-4 2-4.3 4.5l-.4 4.5c-1.5-.3-2.3.7-2 2l.5 3-3.3 1.5c-2.5-2.5-3.3-6.5-2.5-10z" fill="#111"/>
<path d="M24.5 14c1.5.8 3 .6 4-.3M25 7.5l1.5.3" fill="none" stroke="#111" stroke-width=".9" stroke-linecap="round"/>
<path d="M13 35l9.5.5-.3 7.5-9.5-.5z" fill="#fff" stroke="#111" stroke-width=".9"/>
<path d="M17.5 36.5v5.5M14.8 39.3h5.4" stroke="#d8142a" stroke-width="2.1"/>
<path d="M11 53.5c7 1.5 14 1.5 21.5 0M19 21.5l3 4 3-3M26 27l1 26" fill="none" stroke="#111" stroke-width="1"/>
</g>
<g fill="none" stroke="#111" stroke-width="1.1" stroke-linecap="round" stroke-linejoin="round"><path d="M1428 908.5H1494M1440 910c15 5 35 5 48 0" stroke-width="1.3"/><path d="M1445 907c1-6 5-8 9-6 3 2 6 4 8 6M1448 906v-5M1451 906v-6M1454 906v-5M1458 907l3-4M1461 907l2-3" stroke-width=".8"/><path d="M1462 905c5-5 15-5 20 1" /></g>
<path d="M1436 890h52v8.5h-52z" fill="#fff" stroke="#111" stroke-width=".9"/><path d="M1462 889.5v7M1456.5 893h11" stroke="#f01020" stroke-width="2.6"/>
<g transform="translate(1479.7,864) scale(0.74)">
<g fill="#fff" stroke="#111" stroke-width="1.35" stroke-linejoin="round" stroke-linecap="round">
<path d="M12 61L-4 80l5.5 5L21 68z"/>
<path d="M-4 80l-7 9.5c-.8 1.8 1.2 3.2 2.7 2L1.5 85z"/>
<path d="M16.5 61l3.5 32.5h8.5L29.5 61z"/>
<path d="M19.8 93.5l-1.3 4.5c0 1 .5 1.5 1.5 1.5h14c2 0 2.3-1.8.5-2.5L28.5 93.5z"/>
<path d="M14 19C9 30 8.5 48 11.5 62.5h20c4-12.5 3-30.5-3.5-44-4 2-9 2-14 .5z"/>
<path d="M18.5 15l-.5 5.5 6.5 1.5.5-5z"/>
<path d="M16 3.5c5-4 12-2.5 13.5 3l-.3 2 4.3 3c.6.6 0 1.5-.9 1.5h-3l-.3 2.5c-1.5 3.8-7 4.8-11 2.5-3.5-2-5-10-2.3-14.5z"/>
<path d="M16 23.5c-4 10-4 26 .5 37l2.5 4c1.5 1.5 4.5 1 5-1l-1-3.5c1.5-10 1.5-24-1-34" />
</g>
<path d="M14.5 6.5C15 1 21-1.5 26.5 1c-2.5.5-4 2-4.3 4.5l-.4 4.5c-1.5-.3-2.3.7-2 2l.5 3-3.3 1.5c-2.5-2.5-3.3-6.5-2.5-10z" fill="#111"/>
<path d="M24.5 14c1.5.8 3 .6 4-.3M25 7.5l1.5.3" fill="none" stroke="#111" stroke-width=".9" stroke-linecap="round"/>
<path d="M13 35l9.5.5-.3 7.5-9.5-.5z" fill="#fff" stroke="#111" stroke-width=".9"/>
<path d="M17.5 36.5v5.5M14.8 39.3h5.4" stroke="#d8142a" stroke-width="2.1"/>
<path d="M11 53.5c7 1.5 14 1.5 21.5 0M19 21.5l3 4 3-3M26 27l1 26" fill="none" stroke="#111" stroke-width="1"/>
</g>
<g fill="none" stroke="#111" stroke-width="1.1" stroke-linecap="round" stroke-linejoin="round"><path d="M1488 905l27-2.5" stroke-width="1.5"/></g>
</svg>
</div></div>
<div class="t" style="left:171.5px;top:803.5px;font-size:19px;color:#444;transform:scaleX(0.899);">16</div>
<div class="b" style="left:210.5px;top:807.8px;width:199px;height:112.2px;background:#fff;border-radius:4px;box-shadow:0 .5px 2px rgba(0,0,0,.35);"></div>
<div class="b" style="left:210.5px;top:807.8px;width:199px;height:18.3px;background:#d9d9d9;border-radius:4px 4px 0 0;"></div>
<div class="b" style="left:214.5px;top:810.8px;width:12.5px;height:11.5px;background:#fff;"></div>
<svg class="b" style="left:214.5px;top:810.8px;" width="12.5" height="11.5" viewBox="0 0 12.5 11.5"><path d="M3.2 1.5h1.6v1.5h1.5v1.6H4.8v1.5H3.2V4.6H1.7V3h1.5z" fill="#ee2a3c"/><path d="M9.8 1.5a2.4 2.4 0 1 0 .6 4.6 2 2 0 0 1 0-4.5z" fill="#ee2a3c"/><rect x="1.7" y="7.5" width="8.5" height="2.3" fill="#333"/></svg>
<div class="t" style="left:239.6px;top:811.6px;font-size:6.2px;color:#a6002d;font-weight:bold;transform:scaleX(0.936);">The fundamental principles &amp; humanitarian values</div>
<div class="b" style="left:239px;top:828.6px;width:143.7px;height:85.3px;background:#fff;box-shadow:0 0 0 .5px #9a9a9a;"></div>
<div class="b" style="left:339.3px;top:835.6px;width:43.4px;height:78.3px;background:#f2b59b;"></div>
<div class="b" style="left:239px;top:835.6px;width:43.4px;height:25.899999999999977px;background:#c9dad4;"></div>
<div class="b" style="left:282.7px;top:835.6px;width:56.3px;height:25.899999999999977px;background:#c9dad4;"></div>
<div class="b" style="left:239px;top:861.8px;width:43.4px;height:8.900000000000091px;background:#e4ece9;"></div>
<div class="b" style="left:282.7px;top:861.8px;width:56.3px;height:8.900000000000091px;background:#e4ece9;"></div>
<div class="b" style="left:239px;top:871px;width:43.4px;height:7.2000000000000455px;background:#c9dad4;"></div>
<div class="b" style="left:282.7px;top:871px;width:56.3px;height:7.2000000000000455px;background:#c9dad4;"></div>
<div class="b" style="left:239px;top:878.5px;width:43.4px;height:9.200000000000045px;background:#e4ece9;"></div>
<div class="b" style="left:282.7px;top:878.5px;width:56.3px;height:9.200000000000045px;background:#e4ece9;"></div>
<div class="b" style="left:239px;top:888px;width:43.4px;height:8.700000000000045px;background:#c9dad4;"></div>
<div class="b" style="left:282.7px;top:888px;width:56.3px;height:8.700000000000045px;background:#c9dad4;"></div>
<div class="b" style="left:239px;top:897px;width:43.4px;height:6.600000000000023px;background:#e4ece9;"></div>
<div class="b" style="left:282.7px;top:897px;width:56.3px;height:6.600000000000023px;background:#e4ece9;"></div>
<div class="b" style="left:239px;top:903.9px;width:43.4px;height:10px;background:#c9dad4;"></div>
<div class="b" style="left:282.7px;top:903.9px;width:56.3px;height:10px;background:#c9dad4;"></div>
<div class="b" style="left:282.4px;top:828.6px;width:0.5px;height:85.3px;background:#8a8a8a;"></div>
<div class="b" style="left:339px;top:828.6px;width:0.5px;height:85.3px;background:#8a8a8a;"></div>
<div class="t" style="left:242px;top:830.6px;font-size:3.4px;color:#fb0007;font-weight:bold;transform:scaleX(0.785);">FUNDAMENTAL PRINCIPLES</div>
<div class="t" style="left:294px;top:830.6px;font-size:3.4px;color:#222;font-weight:bold;transform:scaleX(0.811);">HUMANITARIAN VALUES</div>
<div class="t" style="left:345px;top:830.6px;font-size:3.4px;color:#2a2ad0;font-weight:bold;transform:scaleX(0.81);">PMI THEMATIC AREAS</div>
<div class="t" style="left:240.5px;top:846.6px;font-size:3.9px;color:#fb0007;font-weight:bold;transform:scaleX(0.765);">Humanity</div>
<div class="t" style="left:240.5px;top:864.4px;font-size:3.9px;color:#fb0007;font-weight:bold;transform:scaleX(0.858);">Impartiality</div>
<div class="t" style="left:240.5px;top:872.7px;font-size:3.9px;color:#fb0007;font-weight:bold;transform:scaleX(0.803);">Neutrality</div>
<div class="t" style="left:240.5px;top:881.1px;font-size:3.9px;color:#fb0007;font-weight:bold;transform:scaleX(0.713);">Independence</div>
<div class="t" style="left:240.5px;top:890.4px;font-size:3.9px;color:#fb0007;font-weight:bold;transform:scaleX(0.781);">Voluntary Service</div>
<div class="t" style="left:240.5px;top:898.6px;font-size:3.9px;color:#fb0007;font-weight:bold;transform:scaleX(0.872);">Unity</div>
<div class="t" style="left:240.5px;top:907.1px;font-size:3.9px;color:#fb0007;font-weight:bold;transform:scaleX(0.846);">Universality</div>
<div class="b" style="left:284.3px;top:838.9px;width:0.9px;height:0.9px;background:#222;border-radius:1px;"></div>
<div class="t" style="left:286.5px;top:837.6px;font-size:3.5px;color:#222;font-weight:bold;transform:scaleX(0.662);">Mutual understanding</div>
<div class="b" style="left:284.3px;top:842.6px;width:0.9px;height:0.9px;background:#222;border-radius:1px;"></div>
<div class="t" style="left:286.5px;top:841.3px;font-size:3.5px;color:#222;font-weight:bold;transform:scaleX(0.652);">Peace</div>
<div class="b" style="left:284.3px;top:846.4px;width:0.9px;height:0.9px;background:#222;border-radius:1px;"></div>
<div class="t" style="left:286.5px;top:845.1px;font-size:3.5px;color:#222;font-weight:bold;transform:scaleX(0.652);">People-centred</div>
<div class="b" style="left:284.3px;top:850.4px;width:0.9px;height:0.9px;background:#222;border-radius:1px;"></div>
<div class="t" style="left:286.5px;top:849.1px;font-size:3.5px;color:#222;font-weight:bold;transform:scaleX(0.638);">Respect for the human</div>
<div class="t" style="left:286.5px;top:852.8px;font-size:3.5px;color:#222;font-weight:bold;transform:scaleX(0.707);">being</div>
<div class="b" style="left:284.3px;top:858.6px;width:0.9px;height:0.9px;background:#222;border-radius:1px;"></div>
<div class="t" style="left:286.5px;top:857.3px;font-size:3.5px;color:#222;font-weight:bold;transform:scaleX(0.635);">Respect for diversity</div>
<div class="b" style="left:284.3px;top:864.1px;width:0.9px;height:0.9px;background:#222;border-radius:1px;"></div>
<div class="t" style="left:286.5px;top:862.8px;font-size:3.5px;color:#222;font-weight:bold;transform:scaleX(0.655);">Non-discrimination</div>
<div class="b" style="left:284.3px;top:868.6px;width:0.9px;height:0.9px;background:#222;border-radius:1px;"></div>
<div class="t" style="left:286.5px;top:867.3px;font-size:3.5px;color:#222;font-weight:bold;transform:scaleX(0.635);">Respect for diversity</div>
<div class="b" style="left:284.3px;top:875.1px;width:0.9px;height:0.9px;background:#222;border-radius:1px;"></div>
<div class="t" style="left:286.5px;top:873.8px;font-size:3.5px;color:#222;font-weight:bold;transform:scaleX(0.675);">Tolerance</div>
<div class="b" style="left:284.3px;top:880.9px;width:0.9px;height:0.9px;background:#222;border-radius:1px;"></div>
<div class="t" style="left:286.5px;top:879.6px;font-size:3.5px;color:#222;font-weight:bold;transform:scaleX(0.652);">Innovation</div>
<div class="b" style="left:284.3px;top:885.3000000000001px;width:0.9px;height:0.9px;background:#222;border-radius:1px;"></div>
<div class="t" style="left:286.5px;top:884px;font-size:3.5px;color:#222;font-weight:bold;transform:scaleX(0.677);">Integrity</div>
<div class="b" style="left:284.3px;top:890.1px;width:0.9px;height:0.9px;background:#222;border-radius:1px;"></div>
<div class="t" style="left:286.5px;top:888.8px;font-size:3.5px;color:#222;font-weight:bold;transform:scaleX(0.618);">Service</div>
<div class="b" style="left:284.3px;top:894.6px;width:0.9px;height:0.9px;background:#222;border-radius:1px;"></div>
<div class="t" style="left:286.5px;top:893.3px;font-size:3.5px;color:#222;font-weight:bold;transform:scaleX(0.64);">Cooperation</div>
<div class="b" style="left:284.3px;top:900.9px;width:0.9px;height:0.9px;background:#222;border-radius:1px;"></div>
<div class="t" style="left:286.5px;top:899.6px;font-size:3.5px;color:#222;font-weight:bold;transform:scaleX(0.669);">Diversity</div>
<div class="b" style="left:284.3px;top:906.6px;width:0.9px;height:0.9px;background:#222;border-radius:1px;"></div>
<div class="t" style="left:286.5px;top:905.3px;font-size:3.5px;color:#222;font-weight:bold;transform:scaleX(0.655);">Non-discrimination</div>
<div class="b" style="left:284.3px;top:911.1px;width:0.9px;height:0.9px;background:#222;border-radius:1px;"></div>
<div class="t" style="left:286.5px;top:909.8px;font-size:3.5px;color:#222;font-weight:bold;transform:scaleX(0.64);">Cooperation</div>
<div class="t" style="left:341px;top:854.8px;font-size:3.4px;color:#4a1fb8;font-weight:bold;font-style:italic;transform:scaleX(0.968);">• Non-discrimination     &amp;</div>
<div class="t" style="left:341px;top:859.1px;font-size:3.4px;color:#4a1fb8;font-weight:bold;font-style:italic;transform:scaleX(0.831);">respect for diversity</div>
<div class="t" style="left:341px;top:866.6px;font-size:3.4px;color:#4a1fb8;font-weight:bold;font-style:italic;transform:scaleX(0.855);">• Gender</div>
<div class="t" style="left:341px;top:874.8px;font-size:3.4px;color:#4a1fb8;font-weight:bold;font-style:italic;transform:scaleX(0.94);">• Violence   prevention   &amp;</div>
<div class="t" style="left:341px;top:879.1px;font-size:3.4px;color:#4a1fb8;font-weight:bold;font-style:italic;transform:scaleX(0.826);">Culture of peace</div>
<div class="t" style="left:341px;top:886.6px;font-size:3.4px;color:#4a1fb8;font-weight:bold;font-style:italic;transform:scaleX(0.785);">• Social Inclusion</div>
<div class="t" style="left:341px;top:894.8px;font-size:3.4px;color:#4a1fb8;font-weight:bold;font-style:italic;transform:scaleX(0.872);">• Intercultural dialogue</div>
<div class="t" style="left:213px;top:916.4px;font-size:2.3px;color:#333;transform:scaleX(0.912);">Internal</div>
<div class="b" style="left:166px;top:940px;width:60px;height:5.5px;overflow:hidden"><div class="t" style="left:5.5px;top:1.7px;font-size:19px;color:#444;transform:scaleX(0.899);">17</div></div>
<!-- slide -->
<div class="b" style="left:662px;top:412.5px;width:38px;height:37.5px;background:#fdfdfd;border-radius:7px;box-shadow:0 0 0 1px rgba(0,0,0,.1),0 1px 2px rgba(0,0,0,.1);"></div>
<svg class="b" style="left:668.5px;top:418.5px;" width="25" height="25" viewBox="0 0 22 22"><path d="M11 1.5c.6 3.2 1.8 4.4 5 5-3.2.6-4.4 1.8-5 5-.6-3.2-1.8-4.4-5-5 3.2-.6 4.4-1.8 5-5z" fill="#222"/><path d="M17 10c.4 2 1.1 2.7 3 3-1.9.3-2.6 1-3 3-.4-2-1.1-2.7-3-3 1.9-.3 2.6-1 3-3z" fill="#222"/><path d="M2 16.5l4.5-4.5M4 19.5l5-5M8.5 18.5l3-3" stroke="#222" stroke-width="1.1" fill="none"/></svg>
<div class="b" style="left:661px;top:461px;width:870px;height:484.5px;overflow:hidden;box-shadow:0 0 0 1px #c9c9cc;">
<div class="b" style="left:0px;top:0px;width:870px;height:490px;background:#fff;"></div>
<div class="b" style="left:0px;top:0px;width:870px;height:80px;background:#d9d9d9;"></div>
<div class="b" style="left:17px;top:12px;width:57px;height:52.6px;background:#fff;"></div>
<svg class="b" style="left:17px;top:12px;" width="57" height="53" viewBox="0 0 57 53"><path d="M15 7.5h6.3v6.2h6.2V20h-6.2v6.2H15V20H8.7v-6.3H15z" fill="#ee2a3c"/><path d="M48.07 10.24A9.25 9.25 0 1 0 48.07 23.26A7 7 0 1 1 48.07 10.24z" fill="#ee2a3c"/></svg>
<div class="t" style="left:25px;top:42.4px;font-size:16px;color:#1d1d1d;font-weight:bold;transform:scaleX(1.058);">IFRC</div>
<div class="t" style="left:127.6px;top:27.8px;font-size:26px;color:#a6002d;font-weight:bold;transform:scaleX(0.972);">The 7 Fundamental Principles</div>
<div class="t" style="left:132.6px;top:86.6px;font-size:14.7px;color:#fb0007;transform:scaleX(0.985);-webkit-text-stroke:.65px #fb0007;">FUNDAMENTAL</div>
<div class="t" style="left:147.1px;top:106.8px;font-size:14.7px;color:#fb0007;transform:scaleX(0.898);-webkit-text-stroke:.65px #fb0007;">PRINCIPLES</div>
<div class="t" style="left:288.1px;top:86.6px;font-size:14.7px;color:#141414;transform:scaleX(1.024);-webkit-text-stroke:.65px #141414;">HUMANITARIAN</div>
<div class="t" style="left:319.1px;top:106.8px;font-size:14.7px;color:#141414;transform:scaleX(0.905);-webkit-text-stroke:.65px #141414;">VALUES</div>
<div class="b" style="left:121.8px;top:129.5px;width:130px;height:113px;background:#e9f0f7;"></div>
<div class="b" style="left:253px;top:129.5px;width:183px;height:113px;background:#e9f0f7;"></div>
<div class="b" style="left:121.8px;top:243.5px;width:130px;height:44.30000000000001px;background:#f6f9fc;"></div>
<div class="b" style="left:253px;top:243.5px;width:183px;height:44.30000000000001px;background:#f6f9fc;"></div>
<div class="b" style="left:121.8px;top:288.8px;width:130px;height:29.19999999999999px;background:#e9f0f7;"></div>
<div class="b" style="left:253px;top:288.8px;width:183px;height:29.19999999999999px;background:#e9f0f7;"></div>
<div class="b" style="left:121.8px;top:319px;width:130px;height:44px;background:#f6f9fc;"></div>
<div class="b" style="left:253px;top:319px;width:183px;height:44px;background:#f6f9fc;"></div>
<div class="b" style="left:121.8px;top:364px;width:130px;height:51.5px;background:#e9f0f7;"></div>
<div class="b" style="left:253px;top:364px;width:183px;height:51.5px;background:#e9f0f7;"></div>
<div class="b" style="left:121.8px;top:416.5px;width:130px;height:31.30000000000001px;background:#f6f9fc;"></div>
<div class="b" style="left:253px;top:416.5px;width:183px;height:31.30000000000001px;background:#f6f9fc;"></div>
<div class="b" style="left:121.8px;top:448.8px;width:130px;height:41.19999999999999px;background:#e9f0f7;"></div>
<div class="b" style="left:253px;top:448.8px;width:183px;height:41.19999999999999px;background:#e9f0f7;"></div>
<div class="t" style="left:127.7px;top:177.5px;font-size:17.3px;color:#fb0007;transform:scaleX(1.061);-webkit-text-stroke:.8px #fb0007;">Humanity</div>
<div class="t" style="left:127.7px;top:257.3px;font-size:17.3px;color:#fb0007;transform:scaleX(1.112);-webkit-text-stroke:.8px #fb0007;">Impartiality</div>
<div class="t" style="left:127.7px;top:294.7px;font-size:17.3px;color:#fb0007;transform:scaleX(1.081);-webkit-text-stroke:.8px #fb0007;">Neutrality</div>
<div class="t" style="left:127.7px;top:331.9px;font-size:17.3px;color:#fb0007;transform:scaleX(1.024);-webkit-text-stroke:.8px #fb0007;">Independence</div>
<div class="t" style="left:127.7px;top:369.1px;font-size:17.3px;color:#fb0007;transform:scaleX(1.072);-webkit-text-stroke:.8px #fb0007;">Voluntary</div>
<div class="t" style="left:127.7px;top:392.5px;font-size:17.3px;color:#fb0007;transform:scaleX(0.962);-webkit-text-stroke:.8px #fb0007;">Service</div>
<div class="t" style="left:127.7px;top:423px;font-size:17.3px;color:#fb0007;transform:scaleX(1.078);-webkit-text-stroke:.8px #fb0007;">Unity</div>
<div class="t" style="left:127.7px;top:460.2px;font-size:17.3px;color:#fb0007;transform:scaleX(1.063);-webkit-text-stroke:.8px #fb0007;">Universality</div>
<div class="b" style="left:260.5px;top:138.8px;width:3.7px;height:3.7px;background:#111;border-radius:2px;"></div>
<div class="t" style="left:271.3px;top:133.8px;font-size:13.4px;color:#111;transform:scaleX(1.072);-webkit-text-stroke:.7px #111;">Mutual understanding</div>
<div class="b" style="left:260.5px;top:156.9px;width:3.7px;height:3.7px;background:#111;border-radius:2px;"></div>
<div class="t" style="left:271.3px;top:151.9px;font-size:13.4px;color:#111;transform:scaleX(0.949);-webkit-text-stroke:.7px #111;">Peace</div>
<div class="b" style="left:260.5px;top:174.5px;width:3.7px;height:3.7px;background:#111;border-radius:2px;"></div>
<div class="t" style="left:271.3px;top:169.5px;font-size:13.4px;color:#111;transform:scaleX(1.049);-webkit-text-stroke:.7px #111;">People-centred</div>
<div class="b" style="left:260.5px;top:193px;width:3.7px;height:3.7px;background:#111;border-radius:2px;"></div>
<div class="t" style="left:271.3px;top:188px;font-size:13.4px;color:#111;transform:scaleX(1.023);-webkit-text-stroke:.7px #111;">Respect for the human</div>
<div class="b" style="left:260.5px;top:227.9px;width:3.7px;height:3.7px;background:#111;border-radius:2px;"></div>
<div class="t" style="left:271.3px;top:222.9px;font-size:13.4px;color:#111;transform:scaleX(1.045);-webkit-text-stroke:.7px #111;">Respect for diversity</div>
<div class="b" style="left:260.5px;top:254.8px;width:3.7px;height:3.7px;background:#111;border-radius:2px;"></div>
<div class="t" style="left:271.3px;top:249.8px;font-size:13.4px;color:#111;transform:scaleX(1.078);-webkit-text-stroke:.7px #111;">Non-discrimination</div>
<div class="b" style="left:260.5px;top:273.2px;width:3.7px;height:3.7px;background:#111;border-radius:2px;"></div>
<div class="t" style="left:271.3px;top:268.2px;font-size:13.4px;color:#111;transform:scaleX(1.045);-webkit-text-stroke:.7px #111;">Respect for diversity</div>
<div class="b" style="left:260.5px;top:298.7px;width:3.7px;height:3.7px;background:#111;border-radius:2px;"></div>
<div class="t" style="left:271.3px;top:293.7px;font-size:13.4px;color:#111;transform:scaleX(1.011);-webkit-text-stroke:.7px #111;">Tolerance</div>
<div class="b" style="left:260.5px;top:330px;width:3.7px;height:3.7px;background:#111;border-radius:2px;"></div>
<div class="t" style="left:271.3px;top:325px;font-size:13.4px;color:#111;transform:scaleX(1.069);-webkit-text-stroke:.7px #111;">Innovation</div>
<div class="b" style="left:260.5px;top:348px;width:3.7px;height:3.7px;background:#111;border-radius:2px;"></div>
<div class="t" style="left:271.3px;top:343px;font-size:13.4px;color:#111;transform:scaleX(1.116);-webkit-text-stroke:.7px #111;">Integrity</div>
<div class="b" style="left:260.5px;top:373.3px;width:3.7px;height:3.7px;background:#111;border-radius:2px;"></div>
<div class="t" style="left:271.3px;top:368.3px;font-size:13.4px;color:#111;-webkit-text-stroke:.7px #111;">Service</div>
<div class="b" style="left:260.5px;top:391.9px;width:3.7px;height:3.7px;background:#111;border-radius:2px;"></div>
<div class="t" style="left:271.3px;top:386.9px;font-size:13.4px;color:#111;transform:scaleX(1.045);-webkit-text-stroke:.7px #111;">Cooperation</div>
<div class="b" style="left:260.5px;top:427.5px;width:3.7px;height:3.7px;background:#111;border-radius:2px;"></div>
<div class="t" style="left:271.3px;top:422.5px;font-size:13.4px;color:#111;transform:scaleX(1.086);-webkit-text-stroke:.7px #111;">Diversity</div>
<div class="b" style="left:260.5px;top:458.5px;width:3.7px;height:3.7px;background:#111;border-radius:2px;"></div>
<div class="t" style="left:271.3px;top:453.5px;font-size:13.4px;color:#111;transform:scaleX(1.078);-webkit-text-stroke:.7px #111;">Non-discrimination</div>
<div class="b" style="left:260.5px;top:476.5px;width:3.7px;height:3.7px;background:#111;border-radius:2px;"></div>
<div class="t" style="left:271.3px;top:471.5px;font-size:13.4px;color:#111;transform:scaleX(1.045);-webkit-text-stroke:.7px #111;">Cooperation</div>
<div class="t" style="left:272.5px;top:205.5px;font-size:13.4px;color:#111;transform:scaleX(1.058);-webkit-text-stroke:.7px #111;">being</div>
<div class="t" style="left:10px;top:476.3px;font-size:7.5px;color:#222;transform:scaleX(1.159);">Internal</div>
<svg class="b" style="left:0;top:0" width="870" height="490" viewBox="661 461 870 490">
<g fill="none" stroke="#111" stroke-width="1.1" stroke-linecap="round" stroke-linejoin="round">
<path d="M1165 570L1225.5 567.5 1231 586c-2 2.5-4.5 2.5-6 0-1.5 2.5-4.5 2.5-6 0-1.5 2.5-4.5 2.5-6 0-1.5 2.5-4.5 2.5-6 0-1.5 2.5-4.5 2.5-6 0-1.5 2.5-4.5 2.5-6 0-1.5 2.5-4.5 2.5-6 0-1.5 2.5-4.5 2.5-6 0-1.5 2.5-4.5 2.5-6 0-1.5 2.5-4.5 2.5-6 0-1.5 2.5-4.5 2.5-6 0-1.5 2.5-4.5 2.5-5.5-.5z" fill="#fff"/>
<path d="M1225.5 567.5L1231 586c-2 2.5-4.5 2.5-6 0-1.5 2.5-4.5 2.5-6 0-1.5 2.5-4.5 2.5-6 0-1.5 2.5-4.5 2.5-6 0l-1 4c-2 2-4 2-5.5 0-1.5 2-4 2-5.5 0-1.5 2-4 2-5.5 0-1.5 2-4 2-5.5 0-1.5 2-4.5 2-5.5-1l3.5-5c1.5 2.5 4.5 2.5 6 0 1.5 2.5 4.5 2.5 6 0 1.5 2.5 4.5 2.5 6 0 1.5 2.5 4.5 2.5 6 0z" fill="#111"/>
<path d="M1165 586v35M1166.8 586v35M1185.5 590v15M1200 586v35M1201.5 586v35M1223.5 588v23" stroke-width="1.3"/>
<path d="M1132 614.5H1258M1146 615.5c25 8 65 8 90 0" stroke-width="1.4"/>
<path d="M1170 613c8-8 40-10 55-1M1160 608a4 4.5 0 1 1 8-2M1168 608l10 5M1212 612l10-6 6 1-8 7" />
<path d="M1158.5 606c.5-4 4-6 7.5-4.5l-1 2.5c-2.5-.5-4 1-4 3.5z" fill="#111"/>
</g>
<g transform="translate(1123.2,555.5) scale(0.93)">
<g fill="#fff" stroke="#111" stroke-width="1.35" stroke-linejoin="round" stroke-linecap="round">
<path d="M12 61L-4 80l5.5 5L21 68z"/>
<path d="M-4 80l-7 9.5c-.8 1.8 1.2 3.2 2.7 2L1.5 85z"/>
<path d="M16.5 61l3.5 32.5h8.5L29.5 61z"/>
<path d="M19.8 93.5l-1.3 4.5c0 1 .5 1.5 1.5 1.5h14c2 0 2.3-1.8.5-2.5L28.5 93.5z"/>
<path d="M14 19C9 30 8.5 48 11.5 62.5h20c4-12.5 3-30.5-3.5-44-4 2-9 2-14 .5z"/>
<path d="M18.5 15l-.5 5.5 6.5 1.5.5-5z"/>
<path d="M16 3.5c5-4 12-2.5 13.5 3l-.3 2 4.3 3c.6.6 0 1.5-.9 1.5h-3l-.3 2.5c-1.5 3.8-7 4.8-11 2.5-3.5-2-5-10-2.3-14.5z"/>
<path d="M16 23.5c-4 10-4 26 .5 37l2.5 4c1.5 1.5 4.5 1 5-1l-1-3.5c1.5-10 1.5-24-1-34" />
</g>
<path d="M14.5 6.5C15 1 21-1.5 26.5 1c-2.5.5-4 2-4.3 4.5l-.4 4.5c-1.5-.3-2.3.7-2 2l.5 3-3.3 1.5c-2.5-2.5-3.3-6.5-2.5-10z" fill="#111"/>
<path d="M24.5 14c1.5.8 3 .6 4-.3M25 7.5l1.5.3" fill="none" stroke="#111" stroke-width=".9" stroke-linecap="round"/>
<path d="M13 35l9.5.5-.3 7.5-9.5-.5z" fill="#fff" stroke="#111" stroke-width=".9"/>
<path d="M17.5 36.5v5.5M14.8 39.3h5.4" stroke="#d8142a" stroke-width="2.1"/>
<path d="M11 53.5c7 1.5 14 1.5 21.5 0M19 21.5l3 4 3-3M26 27l1 26" fill="none" stroke="#111" stroke-width="1"/>
</g>
<g transform="translate(1221.2,553.5) scale(0.975)">
<g fill="#fff" stroke="#111" stroke-width="1.35" stroke-linejoin="round" stroke-linecap="round">
<path d="M12 61L-4 80l5.5 5L21 68z"/>
<path d="M-4 80l-7 9.5c-.8 1.8 1.2 3.2 2.7 2L1.5 85z"/>
<path d="M16.5 61l3.5 32.5h8.5L29.5 61z"/>
<path d="M19.8 93.5l-1.3 4.5c0 1 .5 1.5 1.5 1.5h14c2 0 2.3-1.8.5-2.5L28.5 93.5z"/>
<path d="M14 19C9 30 8.5 48 11.5 62.5h20c4-12.5 3-30.5-3.5-44-4 2-9 2-14 .5z"/>
<path d="M18.5 15l-.5 5.5 6.5 1.5.5-5z"/>
<path d="M16 3.5c5-4 12-2.5 13.5 3l-.3 2 4.3 3c.6.6 0 1.5-.9 1.5h-3l-.3 2.5c-1.5 3.8-7 4.8-11 2.5-3.5-2-5-10-2.3-14.5z"/>
<path d="M16 23.5c-4 10-4 26 .5 37l2.5 4c1.5 1.5 4.5 1 5-1l-1-3.5c1.5-10 1.5-24-1-34" />
</g>
<path d="M14.5 6.5C15 1 21-1.5 26.5 1c-2.5.5-4 2-4.3 4.5l-.4 4.5c-1.5-.3-2.3.7-2 2l.5 3-3.3 1.5c-2.5-2.5-3.3-6.5-2.5-10z" fill="#111"/>
<path d="M24.5 14c1.5.8 3 .6 4-.3M25 7.5l1.5.3" fill="none" stroke="#111" stroke-width=".9" stroke-linecap="round"/>
<path d="M13 35l9.5.5-.3 7.5-9.5-.5z" fill="#fff" stroke="#111" stroke-width=".9"/>
<path d="M17.5 36.5v5.5M14.8 39.3h5.4" stroke="#d8142a" stroke-width="2.1"/>
<path d="M11 53.5c7 1.5 14 1.5 21.5 0M19 21.5l3 4 3-3M26 27l1 26" fill="none" stroke="#111" stroke-width="1"/>
</g>
<g fill="none" stroke="#111" stroke-width="1.1" stroke-linecap="round" stroke-linejoin="round">
<path d="M1337 583.5c12-3 60-3 73 0M1337 583.5c12 2.5 60 2.5 73 0M1336 580.5c-1.5 1.5-1 3.5 1 4M1411.5 580.5c1.5 1.5 1 3.5-1 4" />
<path d="M1373 572.5c2-1 3 1.5 1 2.5-1.5.8-1 2.5.5 2.5M1373 577.5v2"/>
<circle cx="1373" cy="583.3" r="3.6" fill="#fff"/>
<path d="M1337.5 585L1319 626M1338.5 585L1364 636M1339.5 585L1322 624M1409.5 585L1382 634M1410.5 585L1428 626M1408.5 585L1379 637" stroke-width=".8"/>
<ellipse cx="1337.5" cy="640.5" rx="30.5" ry="3.8" fill="#fff"/><ellipse cx="1406" cy="640.5" rx="30" ry="3.8" fill="#fff"/>
<path d="M1308 638.5c20-4 42-4 60 0M1377 638.5c20-4 42-4 58 0" stroke-width="1.6"/>
</g>
<path d="M1371.2 583.3h3.6M1373 581.5v3.6" stroke="#e0162b" stroke-width="1.5"/>
<g fill="#1a1a1a"><ellipse cx="1317" cy="630" rx="6" ry="6.5"/><path d="M1313 637c8-4 20-5 30-4 8 0 16 1 21 3l-2 3.5h-48z"/><path d="M1322 631l6 1.5-1 3.5-6-1z"/><path d="M1383 634c2-3 5-3.5 7-1 8-1 20-3 30-3.5 5-.5 10 0 12 2l1 6.5h-50z"/><path d="M1419 627c2-3 8-4 14-1.5l-3 5-10 1z"/></g>
<g stroke="#fff" stroke-width=".6" fill="none"><path d="M1315 627l4 5M1313 631h8M1330 636l3-3M1340 636l3-3M1350 637l3-3M1392 635l3-3M1402 634l3-3M1412 634l3-3M1422 634l3-3"/></g>
<path d="M1418 626.5c4-3 10-3.5 16 .5l-8 .5" fill="none" stroke="#111" stroke-width="1.1" stroke-linecap="round" stroke-linejoin="round" fill="#fff"/>
<g fill="none" stroke="#111" stroke-width="1.1" stroke-linecap="round" stroke-linejoin="round">
<path d="M1141 741H1258M1156 742c25 9 70 9 95-1" stroke-width="1.5"/>
<path d="M1163 740.5c-1-8 3-12 9-12.5 2-4 6-5 9-3 3-9 7-17 12-24 5-5 12-3 14 3 3 2 4 5 3 8 3 3 6 4 8 2l-6-10c-2-4 0-7 4-8 6-1 13 3 15 9 1 5-3 10-7 14 4-3 10-2 12 3 4 1 6 5 4 9 2 2 2 5 1 7.5z" fill="#fff"/>
<path d="M1207 722l9-16c-3-3-4-6-2-8 5-2 12 1 16 7l-12 22z" fill="#fff"/>
</g>
<g fill="#111"><path d="M1188 701c3-5 11-6 15-1l1 4c-4-2-9-2-13 1z"/><ellipse cx="1199" cy="717" rx="2.6" ry="3.2"/><ellipse cx="1206" cy="723" rx="3.2" ry="2.6"/><ellipse cx="1195" cy="726" rx="3" ry="2.6"/><ellipse cx="1203" cy="731.5" rx="3.2" ry="3"/><ellipse cx="1210.5" cy="730" rx="2.6" ry="3.6"/><ellipse cx="1191" cy="733" rx="2.8" ry="2.6"/><ellipse cx="1186" cy="720" rx="2.2" ry="3"/><ellipse cx="1177" cy="723" rx="2.6" ry="3"/><ellipse cx="1216" cy="736" rx="2.2" ry="3"/><ellipse cx="1198" cy="737.5" rx="3" ry="2.4"/><ellipse cx="1208" cy="737.5" rx="2.6" ry="2.2"/><ellipse cx="1184" cy="731" rx="2" ry="2.6"/><path d="M1238 726c2-3 6-3 7 0l-2 3zM1222 731l4-3 1 4-3 2zM1180 736l4-2 1 5h-5z"/></g>
<g fill="none" stroke="#111" stroke-width="1.1" stroke-linecap="round" stroke-linejoin="round" stroke-width=".9"><path d="M1213.5 709l9.5 5.5M1215.5 705l9.5 5.5M1211.5 713l9.5 5.5M1209.5 717l9 5.5M1218 701l9 6M1166 738.5v-9M1168.8 739.5v-11M1171.6 739.5v-11.5M1174.4 739.5v-11M1177.2 739.5v-8M1222 738c0-5 2-9 5-12M1225.5 739c0-5 2-9 5-11M1229 739c0-4 1-7 3-9M1232.5 739c0-3 1-5 2-7M1236 739.5c0-2 .5-4 1.5-5.5M1185 739c1-4 3-6 6-7M1214 739v-6M1218 739v-5"/><circle cx="1196.5" cy="709.5" r="4.6" fill="#fff"/><path d="M1193.5 710.5c2 2.5 5 2.5 7 0"/><circle cx="1186" cy="727.5" r="3.6" fill="#fff"/><circle cx="1229" cy="723.5" r="4.2" fill="#fff"/><path d="M1224 720c1-4 6-6 10-3 3 2 4 5 3 8M1226 726.5c2 3 5 3 7 0M1225 728c1 3 5 5 8 2"/></g>
<g transform="translate(1127.6,688) scale(0.91)">
<g fill="#fff" stroke="#111" stroke-width="1.35" stroke-linejoin="round" stroke-linecap="round">
<path d="M12 61L-4 80l5.5 5L21 68z"/>
<path d="M-4 80l-7 9.5c-.8 1.8 1.2 3.2 2.7 2L1.5 85z"/>
<path d="M16.5 61l3.5 32.5h8.5L29.5 61z"/>
<path d="M19.8 93.5l-1.3 4.5c0 1 .5 1.5 1.5 1.5h14c2 0 2.3-1.8.5-2.5L28.5 93.5z"/>
<path d="M14 19C9 30 8.5 48 11.5 62.5h20c4-12.5 3-30.5-3.5-44-4 2-9 2-14 .5z"/>
<path d="M18.5 15l-.5 5.5 6.5 1.5.5-5z"/>
<path d="M16 3.5c5-4 12-2.5 13.5 3l-.3 2 4.3 3c.6.6 0 1.5-.9 1.5h-3l-.3 2.5c-1.5 3.8-7 4.8-11 2.5-3.5-2-5-10-2.3-14.5z"/>
<path d="M16 23.5c-4 10-4 26 .5 37l2.5 4c1.5 1.5 4.5 1 5-1l-1-3.5c1.5-10 1.5-24-1-34" />
</g>
<path d="M14.5 6.5C15 1 21-1.5 26.5 1c-2.5.5-4 2-4.3 4.5l-.4 4.5c-1.5-.3-2.3.7-2 2l.5 3-3.3 1.5c-2.5-2.5-3.3-6.5-2.5-10z" fill="#111"/>
<path d="M24.5 14c1.5.8 3 .6 4-.3M25 7.5l1.5.3" fill="none" stroke="#111" stroke-width=".9" stroke-linecap="round"/>
<path d="M13 35l9.5.5-.3 7.5-9.5-.5z" fill="#fff" stroke="#111" stroke-width=".9"/>
<path d="M17.5 36.5v5.5M14.8 39.3h5.4" stroke="#d8142a" stroke-width="2.1"/>
<path d="M11 53.5c7 1.5 14 1.5 21.5 0M19 21.5l3 4 3-3M26 27l1 26" fill="none" stroke="#111" stroke-width="1"/>
</g>
<g transform="translate(1226.6,687) scale(0.91)">
<g fill="#fff" stroke="#111" stroke-width="1.35" stroke-linejoin="round" stroke-linecap="round">
<path d="M12 61L-4 80l5.5 5L21 68z"/>
<path d="M-4 80l-7 9.5c-.8 1.8 1.2 3.2 2.7 2L1.5 85z"/>
<path d="M16.5 61l3.5 32.5h8.5L29.5 61z"/>
<path d="M19.8 93.5l-1.3 4.5c0 1 .5 1.5 1.5 1.5h14c2 0 2.3-1.8.5-2.5L28.5 93.5z"/>
<path d="M14 19C9 30 8.5 48 11.5 62.5h20c4-12.5 3-30.5-3.5-44-4 2-9 2-14 .5z"/>
<path d="M18.5 15l-.5 5.5 6.5 1.5.5-5z"/>
<path d="M16 3.5c5-4 12-2.5 13.5 3l-.3 2 4.3 3c.6.6 0 1.5-.9 1.5h-3l-.3 2.5c-1.5 3.8-7 4.8-11 2.5-3.5-2-5-10-2.3-14.5z"/>
<path d="M16 23.5c-4 10-4 26 .5 37l2.5 4c1.5 1.5 4.5 1 5-1l-1-3.5c1.5-10 1.5-24-1-34" />
</g>
<path d="M14.5 6.5C15 1 21-1.5 26.5 1c-2.5.5-4 2-4.3 4.5l-.4 4.5c-1.5-.3-2.3.7-2 2l.5 3-3.3 1.5c-2.5-2.5-3.3-6.5-2.5-10z" fill="#111"/>
<path d="M24.5 14c1.5.8 3 .6 4-.3M25 7.5l1.5.3" fill="none" stroke="#111" stroke-width=".9" stroke-linecap="round"/>
<path d="M13 35l9.5.5-.3 7.5-9.5-.5z" fill="#fff" stroke="#111" stroke-width=".9"/>
<path d="M17.5 36.5v5.5M14.8 39.3h5.4" stroke="#d8142a" stroke-width="2.1"/>
<path d="M11 53.5c7 1.5 14 1.5 21.5 0M19 21.5l3 4 3-3M26 27l1 26" fill="none" stroke="#111" stroke-width="1"/>
</g>
<g fill="none" stroke="#111" stroke-width="1.1" stroke-linecap="round" stroke-linejoin="round">
<path d="M1359 732.5L1421.5 749M1381 727L1447 744.5" stroke-width="1.8"/><path d="M1361 733.5L1421 750M1372 735.5c8 0 16-2 21-6" stroke-width=".9"/>
<path d="M1327 712c-1-8 6-14 16-15 5-1 9-1 12 0l5 5c-3 5-8 8-14 10l-4 6 3 10 2 14 5 5c1 2-1 3.5-3 3l-5-2-2-4-4-14c-4-8-8-13-11-18z" fill="#fff"/>
<path d="M1327 712h-9c-1.5 0-1.5-2 0-2.5l5-1 3-11c-2-1-5-.5-8-.5-1.5-1-1-2.5 1-3l9-.5c2 0 3 1.5 2.5 3l-3 11M1360 702c6 1 12 5 17 12l4 7-3 1.5-4-1M1352 712c2 5 2 9 1 12l2 2" />
<ellipse cx="1363.5" cy="698.5" rx="4.5" ry="5.5" fill="#fff" transform="rotate(20 1363.5 698.5)"/>
</g>
<path d="M1357 699c0-4 3-8 7-7l2 1c-3 1-4 3-4.5 6l-2 4z" fill="#111"/>
<g transform="translate(1449.3,691) scale(-0.945,0.945)">
<g fill="#fff" stroke="#111" stroke-width="1.35" stroke-linejoin="round" stroke-linecap="round">
<path d="M12 61L-4 80l5.5 5L21 68z"/>
<path d="M-4 80l-7 9.5c-.8 1.8 1.2 3.2 2.7 2L1.5 85z"/>
<path d="M16.5 61l3.5 32.5h8.5L29.5 61z"/>
<path d="M19.8 93.5l-1.3 4.5c0 1 .5 1.5 1.5 1.5h14c2 0 2.3-1.8.5-2.5L28.5 93.5z"/>
<path d="M14 19C9 30 8.5 48 11.5 62.5h20c4-12.5 3-30.5-3.5-44-4 2-9 2-14 .5z"/>
<path d="M18.5 15l-.5 5.5 6.5 1.5.5-5z"/>
<path d="M16 3.5c5-4 12-2.5 13.5 3l-.3 2 4.3 3c.6.6 0 1.5-.9 1.5h-3l-.3 2.5c-1.5 3.8-7 4.8-11 2.5-3.5-2-5-10-2.3-14.5z"/>
<path d="M16 23.5c-4 10-4 26 .5 37l2.5 4c1.5 1.5 4.5 1 5-1l-1-3.5c1.5-10 1.5-24-1-34" />
</g>
<path d="M14.5 6.5C15 1 21-1.5 26.5 1c-2.5.5-4 2-4.3 4.5l-.4 4.5c-1.5-.3-2.3.7-2 2l.5 3-3.3 1.5c-2.5-2.5-3.3-6.5-2.5-10z" fill="#111"/>
<path d="M24.5 14c1.5.8 3 .6 4-.3M25 7.5l1.5.3" fill="none" stroke="#111" stroke-width=".9" stroke-linecap="round"/>
<path d="M13 35l9.5.5-.3 7.5-9.5-.5z" fill="#fff" stroke="#111" stroke-width=".9"/>
<path d="M17.5 36.5v5.5M14.8 39.3h5.4" stroke="#d8142a" stroke-width="2.1"/>
<path d="M11 53.5c7 1.5 14 1.5 21.5 0M19 21.5l3 4 3-3M26 27l1 26" fill="none" stroke="#111" stroke-width="1"/>
</g>
<circle cx="1185" cy="839.5" r="28" fill="#111" stroke="#111" stroke-width="1"/>
<path d="M1165 820c6-5 12-8 20-8.5l12 1-8 6-6 1-2 6-6 2 1 6-5 3-2 8-4-3c-4-6-4-15 0-21z" fill="#fff"/>
<path d="M1171 861l19-47 14 3-17 49z" fill="#fff"/><path d="M1176 863l18-48M1181 865l18-48M1185 866l17-47" stroke="#111" stroke-width=".9" fill="none"/>
<path d="M1201 839l8-6 4 4-1 10-6 8-8 6 2-10z" fill="#fff"/><path d="M1195 822h5v3.5h-5z" fill="#fff" stroke="#111" stroke-width=".8"/>
<g fill="none" stroke="#111" stroke-width="1.1" stroke-linecap="round" stroke-linejoin="round"><path d="M1140 858c25 9 65 9 88 0v12h-88z" fill="#fff" stroke="none"/><path d="M1123 857.5H1247M1140 858.5c25 8 65 8 88 0" stroke-width="1.5"/></g>
<g transform="translate(1153,800) scale(-1.01,1.01)">
<g fill="#fff" stroke="#111" stroke-width="1.35" stroke-linejoin="round" stroke-linecap="round">
<path d="M12 61L-4 80l5.5 5L21 68z"/>
<path d="M-4 80l-7 9.5c-.8 1.8 1.2 3.2 2.7 2L1.5 85z"/>
<path d="M16.5 61l3.5 32.5h8.5L29.5 61z"/>
<path d="M19.8 93.5l-1.3 4.5c0 1 .5 1.5 1.5 1.5h14c2 0 2.3-1.8.5-2.5L28.5 93.5z"/>
<path d="M14 19C9 30 8.5 48 11.5 62.5h20c4-12.5 3-30.5-3.5-44-4 2-9 2-14 .5z"/>
<path d="M18.5 15l-.5 5.5 6.5 1.5.5-5z"/>
<path d="M16 3.5c5-4 12-2.5 13.5 3l-.3 2 4.3 3c.6.6 0 1.5-.9 1.5h-3l-.3 2.5c-1.5 3.8-7 4.8-11 2.5-3.5-2-5-10-2.3-14.5z"/>
<path d="M16 23.5c-4 10-4 26 .5 37l2.5 4c1.5 1.5 4.5 1 5-1l-1-3.5c1.5-10 1.5-24-1-34" />
</g>
<path d="M14.5 6.5C15 1 21-1.5 26.5 1c-2.5.5-4 2-4.3 4.5l-.4 4.5c-1.5-.3-2.3.7-2 2l.5 3-3.3 1.5c-2.5-2.5-3.3-6.5-2.5-10z" fill="#111"/>
<path d="M24.5 14c1.5.8 3 .6 4-.3M25 7.5l1.5.3" fill="none" stroke="#111" stroke-width=".9" stroke-linecap="round"/>
<path d="M13 35l9.5.5-.3 7.5-9.5-.5z" fill="#fff" stroke="#111" stroke-width=".9"/>
<path d="M17.5 36.5v5.5M14.8 39.3h5.4" stroke="#d8142a" stroke-width="2.1"/>
<path d="M11 53.5c7 1.5 14 1.5 21.5 0M19 21.5l3 4 3-3M26 27l1 26" fill="none" stroke="#111" stroke-width="1"/>
</g>
<g transform="translate(1262.9,796.5) scale(-1.04,1.04)">
<g fill="#fff" stroke="#111" stroke-width="1.35" stroke-linejoin="round" stroke-linecap="round">
<path d="M12 61L-4 80l5.5 5L21 68z"/>
<path d="M-4 80l-7 9.5c-.8 1.8 1.2 3.2 2.7 2L1.5 85z"/>
<path d="M16.5 61l3.5 32.5h8.5L29.5 61z"/>
<path d="M19.8 93.5l-1.3 4.5c0 1 .5 1.5 1.5 1.5h14c2 0 2.3-1.8.5-2.5L28.5 93.5z"/>
<path d="M14 19C9 30 8.5 48 11.5 62.5h20c4-12.5 3-30.5-3.5-44-4 2-9 2-14 .5z"/>
<path d="M18.5 15l-.5 5.5 6.5 1.5.5-5z"/>
<path d="M16 3.5c5-4 12-2.5 13.5 3l-.3 2 4.3 3c.6.6 0 1.5-.9 1.5h-3l-.3 2.5c-1.5 3.8-7 4.8-11 2.5-3.5-2-5-10-2.3-14.5z"/>
<path d="M16 23.5c-4 10-4 26 .5 37l2.5 4c1.5 1.5 4.5 1 5-1l-1-3.5c1.5-10 1.5-24-1-34" />
</g>
<path d="M14.5 6.5C15 1 21-1.5 26.5 1c-2.5.5-4 2-4.3 4.5l-.4 4.5c-1.5-.3-2.3.7-2 2l.5 3-3.3 1.5c-2.5-2.5-3.3-6.5-2.5-10z" fill="#111"/>
<path d="M24.5 14c1.5.8 3 .6 4-.3M25 7.5l1.5.3" fill="none" stroke="#111" stroke-width=".9" stroke-linecap="round"/>
<path d="M13 35l9.5.5-.3 7.5-9.5-.5z" fill="#fff" stroke="#111" stroke-width=".9"/>
<path d="M17.5 36.5v5.5M14.8 39.3h5.4" stroke="#d8142a" stroke-width="2.1"/>
<path d="M11 53.5c7 1.5 14 1.5 21.5 0M19 21.5l3 4 3-3M26 27l1 26" fill="none" stroke="#111" stroke-width="1"/>
</g>
<g fill="#111" stroke="#111" stroke-width="1" stroke-linejoin="round"><path d="M1321 830c8-3 14-3 18-1l4 12-2 47-23 2c3-18 5-38 3-60z"/><path d="M1352 829c10-3 20-1 26 6l5 9-10 10-2 34-22 1z"/><path d="M1308 832l13-2 1 23-7 4z"/></g>
<g fill="none" stroke="#111" stroke-width="1.1" stroke-linecap="round" stroke-linejoin="round"><path d="M1339 829l5 59h9l-1-59z" fill="#fff"/><path d="M1341 835l2.5 1M1348 835l2.5 1M1341.5 842l2.5 1M1348.5 842l2.5 1M1342 849l2.5 1M1349 849l2.5 1M1343 866l2.5 1M1349.5 866l2.5 1M1343.5 873l2.5 1M1350 873l2.5 1M1344 880l2.5 1M1350 880l2.5 1" stroke-width="1.1"/>
<ellipse cx="1346" cy="822" rx="8" ry="7.5" fill="#fff"/><path d="M1339 816l.5-5.5 3 3 3.5-4 3.5 4 3-3 .5 5.5z" fill="#fff"/><path d="M1338.5 823c2 7 12 7 15 0 1 5-2 10-7.5 10s-8.5-5-7.5-10z" fill="#111"/><path d="M1342.5 825.5c2 1.5 5 1.5 7 0" stroke="#fff" stroke-width="1"/><path d="M1342 819.5l2.5.5M1348 820l2.5-.5" stroke-width="1.2"/>
<path d="M1308 832l-4-1.5M1318 888l-5 2M1368 888l6 2M1364 846l4-8 3 1-3 9" /></g>
<g fill="none" stroke="#111" stroke-width="1.1" stroke-linecap="round" stroke-linejoin="round"><path d="M1286.5 857H1402M1300 858c25 8 65 8 88-1" stroke-width="1.5"/><path d="M1311 854c2-5 9-7 15-5l3 5z" fill="#fff"/><path d="M1314 853l2-3M1317 853.5l2-4M1320 853.5l2-4M1323 853.5l1.5-3" stroke-width=".8"/></g>
<g transform="translate(1273,802) scale(0.925)">
<g fill="#fff" stroke="#111" stroke-width="1.35" stroke-linejoin="round" stroke-linecap="round">
<path d="M12 61L-4 80l5.5 5L21 68z"/>
<path d="M-4 80l-7 9.5c-.8 1.8 1.2 3.2 2.7 2L1.5 85z"/>
<path d="M16.5 61l3.5 32.5h8.5L29.5 61z"/>
<path d="M19.8 93.5l-1.3 4.5c0 1 .5 1.5 1.5 1.5h14c2 0 2.3-1.8.5-2.5L28.5 93.5z"/>
<path d="M14 19C9 30 8.5 48 11.5 62.5h20c4-12.5 3-30.5-3.5-44-4 2-9 2-14 .5z"/>
<path d="M18.5 15l-.5 5.5 6.5 1.5.5-5z"/>
<path d="M16 3.5c5-4 12-2.5 13.5 3l-.3 2 4.3 3c.6.6 0 1.5-.9 1.5h-3l-.3 2.5c-1.5 3.8-7 4.8-11 2.5-3.5-2-5-10-2.3-14.5z"/>
<path d="M16 23.5c-4 10-4 26 .5 37l2.5 4c1.5 1.5 4.5 1 5-1l-1-3.5c1.5-10 1.5-24-1-34" />
</g>
<path d="M14.5 6.5C15 1 21-1.5 26.5 1c-2.5.5-4 2-4.3 4.5l-.4 4.5c-1.5-.3-2.3.7-2 2l.5 3-3.3 1.5c-2.5-2.5-3.3-6.5-2.5-10z" fill="#111"/>
<path d="M24.5 14c1.5.8 3 .6 4-.3M25 7.5l1.5.3" fill="none" stroke="#111" stroke-width=".9" stroke-linecap="round"/>
<path d="M13 35l9.5.5-.3 7.5-9.5-.5z" fill="#fff" stroke="#111" stroke-width=".9"/>
<path d="M17.5 36.5v5.5M14.8 39.3h5.4" stroke="#d8142a" stroke-width="2.1"/>
<path d="M11 53.5c7 1.5 14 1.5 21.5 0M19 21.5l3 4 3-3M26 27l1 26" fill="none" stroke="#111" stroke-width="1"/>
</g>
<g transform="translate(1374,803.5) scale(0.91)">
<g fill="#fff" stroke="#111" stroke-width="1.35" stroke-linejoin="round" stroke-linecap="round">
<path d="M12 61L-4 80l5.5 5L21 68z"/>
<path d="M-4 80l-7 9.5c-.8 1.8 1.2 3.2 2.7 2L1.5 85z"/>
<path d="M16.5 61l3.5 32.5h8.5L29.5 61z"/>
<path d="M19.8 93.5l-1.3 4.5c0 1 .5 1.5 1.5 1.5h14c2 0 2.3-1.8.5-2.5L28.5 93.5z"/>
<path d="M14 19C9 30 8.5 48 11.5 62.5h20c4-12.5 3-30.5-3.5-44-4 2-9 2-14 .5z"/>
<path d="M18.5 15l-.5 5.5 6.5 1.5.5-5z"/>
<path d="M16 3.5c5-4 12-2.5 13.5 3l-.3 2 4.3 3c.6.6 0 1.5-.9 1.5h-3l-.3 2.5c-1.5 3.8-7 4.8-11 2.5-3.5-2-5-10-2.3-14.5z"/>
<path d="M16 23.5c-4 10-4 26 .5 37l2.5 4c1.5 1.5 4.5 1 5-1l-1-3.5c1.5-10 1.5-24-1-34" />
</g>
<path d="M14.5 6.5C15 1 21-1.5 26.5 1c-2.5.5-4 2-4.3 4.5l-.4 4.5c-1.5-.3-2.3.7-2 2l.5 3-3.3 1.5c-2.5-2.5-3.3-6.5-2.5-10z" fill="#111"/>
<path d="M24.5 14c1.5.8 3 .6 4-.3M25 7.5l1.5.3" fill="none" stroke="#111" stroke-width=".9" stroke-linecap="round"/>
<path d="M13 35l9.5.5-.3 7.5-9.5-.5z" fill="#fff" stroke="#111" stroke-width=".9"/>
<path d="M17.5 36.5v5.5M14.8 39.3h5.4" stroke="#d8142a" stroke-width="2.1"/>
<path d="M11 53.5c7 1.5 14 1.5 21.5 0M19 21.5l3 4 3-3M26 27l1 26" fill="none" stroke="#111" stroke-width="1"/>
</g>
<g transform="translate(1433.5,863) scale(0.74)">
<g fill="#fff" stroke="#111" stroke-width="1.35" stroke-linejoin="round" stroke-linecap="round">
<path d="M12 61L-4 80l5.5 5L21 68z"/>
<path d="M-4 80l-7 9.5c-.8 1.8 1.2 3.2 2.7 2L1.5 85z"/>
<path d="M16.5 61l3.5 32.5h8.5L29.5 61z"/>
<path d="M19.8 93.5l-1.3 4.5c0 1 .5 1.5 1.5 1.5h14c2 0 2.3-1.8.5-2.5L28.5 93.5z"/>
<path d="M14 19C9 30 8.5 48 11.5 62.5h20c4-12.5 3-30.5-3.5-44-4 2-9 2-14 .5z"/>
<path d="M18.5 15l-.5 5.5 6.5 1.5.5-5z"/>
<path d="M16 3.5c5-4 12-2.5 13.5 3l-.3 2 4.3 3c.6.6 0 1.5-.9 1.5h-3l-.3 2.5c-1.5 3.8-7 4.8-11 2.5-3.5-2-5-10-2.3-14.5z"/>
<path d="M16 23.5c-4 10-4 26 .5 37l2.5 4c1.5 1.5 4.5 1 5-1l-1-3.5c1.5-10 1.5-24-1-34" />
</g>
<path d="M14.5 6.5C15 1 21-1.5 26.5 1c-2.5.5-4 2-4.3 4.5l-.4 4.5c-1.5-.3-2.3.7-2 2l.5 3-3.3 1.5c-2.5-2.5-3.3-6.5-2.5-10z" fill="#111"/>
<path d="M24.5 14c1.5.8 3 .6 4-.3M25 7.5l1.5.3" fill="none" stroke="#111" stroke-width=".9" stroke-linecap="round"/>
<path d="M13 35l9.5.5-.3 7.5-9.5-.5z" fill="#fff" stroke="#111" stroke-width=".9"/>
<path d="M17.5 36.5v5.5M14.8 39.3h5.4" stroke="#d8142a" stroke-width="2.1"/>
<path d="M11 53.5c7 1.5 14 1.5 21.5 0M19 21.5l3 4 3-3M26 27l1 26" fill="none" stroke="#111" stroke-width="1"/>
</g>
<g fill="none" stroke="#111" stroke-width="1.1" stroke-linecap="round" stroke-linejoin="round"><path d="M1428 908.5H1494M1440 910c15 5 35 5 48 0" stroke-width="1.3"/><path d="M1445 907c1-6 5-8 9-6 3 2 6 4 8 6M1448 906v-5M1451 906v-6M1454 906v-5M1458 907l3-4M1461 907l2-3" stroke-width=".8"/><path d="M1462 905c5-5 15-5 20 1" /></g>
<path d="M1436 890h52v8.5h-52z" fill="#fff" stroke="#111" stroke-width=".9"/><path d="M1462 889.5v7M1456.5 893h11" stroke="#f01020" stroke-width="2.6"/>
<g transform="translate(1479.7,864) scale(0.74)">
<g fill="#fff" stroke="#111" stroke-width="1.35" stroke-linejoin="round" stroke-linecap="round">
<path d="M12 61L-4 80l5.5 5L21 68z"/>
<path d="M-4 80l-7 9.5c-.8 1.8 1.2 3.2 2.7 2L1.5 85z"/>
<path d="M16.5 61l3.5 32.5h8.5L29.5 61z"/>
<path d="M19.8 93.5l-1.3 4.5c0 1 .5 1.5 1.5 1.5h14c2 0 2.3-1.8.5-2.5L28.5 93.5z"/>
<path d="M14 19C9 30 8.5 48 11.5 62.5h20c4-12.5 3-30.5-3.5-44-4 2-9 2-14 .5z"/>
<path d="M18.5 15l-.5 5.5 6.5 1.5.5-5z"/>
<path d="M16 3.5c5-4 12-2.5 13.5 3l-.3 2 4.3 3c.6.6 0 1.5-.9 1.5h-3l-.3 2.5c-1.5 3.8-7 4.8-11 2.5-3.5-2-5-10-2.3-14.5z"/>
<path d="M16 23.5c-4 10-4 26 .5 37l2.5 4c1.5 1.5 4.5 1 5-1l-1-3.5c1.5-10 1.5-24-1-34" />
</g>
<path d="M14.5 6.5C15 1 21-1.5 26.5 1c-2.5.5-4 2-4.3 4.5l-.4 4.5c-1.5-.3-2.3.7-2 2l.5 3-3.3 1.5c-2.5-2.5-3.3-6.5-2.5-10z" fill="#111"/>
<path d="M24.5 14c1.5.8 3 .6 4-.3M25 7.5l1.5.3" fill="none" stroke="#111" stroke-width=".9" stroke-linecap="round"/>
<path d="M13 35l9.5.5-.3 7.5-9.5-.5z" fill="#fff" stroke="#111" stroke-width=".9"/>
<path d="M17.5 36.5v5.5M14.8 39.3h5.4" stroke="#d8142a" stroke-width="2.1"/>
<path d="M11 53.5c7 1.5 14 1.5 21.5 0M19 21.5l3 4 3-3M26 27l1 26" fill="none" stroke="#111" stroke-width="1"/>
</g>
<g fill="none" stroke="#111" stroke-width="1.1" stroke-linecap="round" stroke-linejoin="round"><path d="M1488 905l27-2.5" stroke-width="1.5"/></g>
</svg>
</div>
<!-- zoom_bottom -->
<div class="b" style="left:0px;top:945.7px;width:1920px;height:75px;background:#000;"></div>
<svg class="b" style="left:50px;top:957px;" width="32" height="36" viewBox="0 0 32 36"><g fill="none" stroke="#fff" stroke-width="1.8" stroke-linecap="round"><rect x="11.5" y="3" width="8" height="17" rx="4"/><path d="M7 14.5v1.5a8.5 8.5 0 0 0 17 0v-1.5M15.5 24.5V30M11 30.5h9"/></g><path d="M2.5 32L29.5 4" stroke="#f2265a" stroke-width="3" stroke-linecap="round"/></svg>
<div class="t" style="left:45px;top:996.4px;font-size:15.5px;color:#fff;font-weight:bold;transform:scaleX(0.934);">Audio</div>
<svg class="b" style="left:99px;top:970px;" width="12" height="8" viewBox="0 0 12 8"><path d="M1.5 6.5L6 2l4.5 4.5" fill="none" stroke="#fff" stroke-width="1.7" stroke-linecap="round" stroke-linejoin="round"/></svg>
<svg class="b" style="left:164px;top:957px;" width="36" height="36" viewBox="0 0 36 36"><g fill="none" stroke="#fff" stroke-width="1.8" stroke-linejoin="round"><rect x="3.5" y="10" width="20" height="15" rx="3.5"/><path d="M23.5 15.5l8-4v12l-8-4z"/></g><path d="M4 32L32 4" stroke="#f2265a" stroke-width="3" stroke-linecap="round"/></svg>
<div class="t" style="left:162px;top:996.4px;font-size:15.5px;color:#fff;font-weight:bold;transform:scaleX(0.948);">Vídeo</div>
<svg class="b" style="left:221.5px;top:970px;" width="12" height="8" viewBox="0 0 12 8"><path d="M1.5 6.5L6 2l4.5 4.5" fill="none" stroke="#fff" stroke-width="1.7" stroke-linecap="round" stroke-linejoin="round"/></svg>
<svg class="b" style="left:350px;top:961px;" width="28" height="26" viewBox="0 0 28 26"><g fill="none" stroke="#fff" stroke-width="1.8" stroke-linejoin="round"><circle cx="9" cy="6" r="3.6"/><circle cx="19.5" cy="11" r="3"/><path d="M2.5 21.5c0-5 2.5-8 6.5-8 2 0 3.5.8 4.6 2.2-1.5 1.6-2.1 3.6-2.1 5.8v1.5H4.5a2 2 0 0 1-2-1.5z"/><path d="M13.5 21.5c0-3.5 2.2-5.5 6-5.5s6 2 6 5.5c0 1-1 1.7-2 1.7h-8c-1 0-2-.7-2-1.7z"/></g></svg>
<div class="t" style="left:385px;top:965.2px;font-size:14.5px;color:#d0d0d0;transform:scaleX(1.023);">82</div>
<div class="t" style="left:320.1px;top:996.4px;font-size:15.5px;color:#fff;font-weight:bold;transform:scaleX(0.909);">Participantes</div>
<svg class="b" style="left:424px;top:970px;" width="12" height="8" viewBox="0 0 12 8"><path d="M1.5 6.5L6 2l4.5 4.5" fill="none" stroke="#fff" stroke-width="1.7" stroke-linecap="round" stroke-linejoin="round"/></svg>
<svg class="b" style="left:486px;top:959px;" width="32" height="32" viewBox="0 0 32 32"><g fill="none" stroke="#fff" stroke-width="1.8" stroke-linejoin="round"><path d="M10 7.5V7a4 4 0 0 1 4-4h11a4 4 0 0 1 4 4v8a4 4 0 0 1-4 4h-.5"/><path d="M7 8.5h12a4 4 0 0 1 4 4v7a4 4 0 0 1-4 4h-6.5L8 27.5v-4H7a4 4 0 0 1-4-4v-7a4 4 0 0 1 4-4z"/></g><g fill="#fff"><circle cx="8.5" cy="16" r="1.3"/><circle cx="13" cy="16" r="1.3"/><circle cx="17.5" cy="16" r="1.3"/></g></svg>
<div class="t" style="left:487px;top:996.4px;font-size:15.5px;color:#fff;font-weight:bold;transform:scaleX(0.9);">Chat</div>
<svg class="b" style="left:537px;top:970px;" width="12" height="8" viewBox="0 0 12 8"><path d="M1.5 6.5L6 2l4.5 4.5" fill="none" stroke="#fff" stroke-width="1.7" stroke-linecap="round" stroke-linejoin="round"/></svg>
<svg class="b" style="left:592px;top:960px;" width="34" height="30" viewBox="0 0 34 30"><path d="M17 27C9 21 3 15.5 3 9.8 3 5.8 6 3 9.6 3c3 0 5.4 1.7 7.4 5 2-3.3 4.4-5 7.4-5C28 3 31 5.8 31 9.8 31 15.5 25 21 17 27z" fill="none" stroke="#fff" stroke-width="1.8" stroke-linejoin="round" transform="rotate(-12 17 15)"/></svg>
<div class="t" style="left:571px;top:996.4px;font-size:15.5px;color:#fff;font-weight:bold;transform:scaleX(0.897);">Reaccionar</div>
<div class="b" style="left:705px;top:962px;width:30px;height:24px;background:#1cf38c;border-radius:4.5px;"></div>
<svg class="b" style="left:705px;top:962px;" width="30" height="24" viewBox="0 0 30 24"><path d="M15 19V6.5M9.5 11.5L15 6l5.5 5.5" fill="none" stroke="#000" stroke-width="2.6" stroke-linecap="round" stroke-linejoin="round"/></svg>
<div class="t" style="left:686px;top:996.4px;font-size:15.5px;color:#fff;font-weight:bold;transform:scaleX(0.932);">Compartir</div>
<svg class="b" style="left:760px;top:970px;" width="12" height="8" viewBox="0 0 12 8"><path d="M1.5 6.5L6 2l4.5 4.5" fill="none" stroke="#fff" stroke-width="1.7" stroke-linecap="round" stroke-linejoin="round"/></svg>
<svg class="b" style="left:865px;top:958px;" width="28" height="32" viewBox="0 0 28 32"><path d="M14 3c3.5 2.5 7 3.5 11 3.7v8c0 6.5-4.5 11-11 14-6.5-3-11-7.5-11-14v-8C7 6.5 10.5 5.5 14 3z" fill="none" stroke="#fff" stroke-width="1.8" stroke-linejoin="round"/><path d="M14 7.5v8.5H6.5v-6.5C9 9.3 11.5 8.7 14 7.5zM14 16h7.5c-.5 4-3.5 7-7.5 9z" fill="#fff"/></svg>
<div class="t" style="left:792px;top:996.4px;font-size:15.5px;color:#fff;font-weight:bold;transform:scaleX(0.937);">Herramientas de anfitrión</div>
<svg class="b" style="left:1019px;top:958px;" width="34" height="34" viewBox="0 0 34 34"><defs><linearGradient id="aic" x1="0" y1="0" x2="1" y2="1"><stop offset="0" stop-color="#ffffff"/><stop offset=".55" stop-color="#d6ecff"/><stop offset="1" stop-color="#8fc4f2"/></linearGradient></defs><path d="M14 5c1.6 8 4.4 10.8 12.5 12.5C18.4 19.2 15.6 22 14 30c-1.6-8-4.4-10.8-12.5-12.5C9.6 15.8 12.4 13 14 5z" fill="url(#aic)"/><path d="M26.5 1.5c.7 3.5 1.9 4.7 5.4 5.4-3.5.7-4.7 1.9-5.4 5.4-.7-3.5-1.9-4.7-5.4-5.4 3.5-.7 4.7-1.9 5.4-5.4z" fill="#fff"/></svg>
<div class="t" style="left:988px;top:996.4px;font-size:15.5px;color:#fff;font-weight:bold;transform:scaleX(0.923);">AI Companion</div>
<svg class="b" style="left:1131px;top:959px;" width="32" height="32" viewBox="0 0 32 32"><g fill="none" stroke="#fff" stroke-width="1.8" stroke-linecap="round"><circle cx="23.5" cy="7.5" r="4.2"/><circle cx="8.5" cy="23.5" r="4.2"/><path d="M4 12V8a4 4 0 0 1 4-4h5M28 19v5a4 4 0 0 1-4 4h-5"/></g></svg>
<div class="t" style="left:1104.8px;top:996.4px;font-size:15.5px;color:#fff;font-weight:bold;transform:scaleX(0.894);">Aplicaciones</div>
<svg class="b" style="left:1178px;top:970px;" width="12" height="8" viewBox="0 0 12 8"><path d="M1.5 6.5L6 2l4.5 4.5" fill="none" stroke="#fff" stroke-width="1.7" stroke-linecap="round" stroke-linejoin="round"/></svg>
<svg class="b" style="left:1268px;top:958px;" width="64" height="32" viewBox="0 0 64 32"><g fill="none" stroke="#fff" stroke-width="1.8"><rect x="1.5" y="1.5" width="28" height="28.5" rx="6"/><rect x="33.5" y="1.5" width="28" height="28.5" rx="6"/></g><g fill="#fff"><rect x="10.5" y="10" width="3.6" height="12" rx="1.5"/><rect x="17" y="10" width="3.6" height="12" rx="1.5"/><rect x="42" y="10.5" width="11" height="11" rx="2.5"/></g></svg>
<div class="t" style="left:1210px;top:996.4px;font-size:15.5px;color:#9b9b9b;">Pausar/detener grabación</div>
<svg class="b" style="left:1454px;top:961px;" width="32" height="26" viewBox="0 0 32 26"><rect x="1.5" y="1.5" width="29" height="22.5" rx="5" fill="none" stroke="#fff" stroke-width="1.8"/></svg>
<div class="t" style="left:1460.5px;top:967.9px;font-size:12.5px;color:#fff;font-weight:bold;transform:scaleX(1.052);">CC</div>
<div class="t" style="left:1408px;top:996.4px;font-size:15.5px;color:#fff;font-weight:bold;transform:scaleX(0.921);">Mostrar subtítulos</div>
<svg class="b" style="left:1519.5px;top:970px;" width="12" height="8" viewBox="0 0 12 8"><path d="M1.5 6.5L6 2l4.5 4.5" fill="none" stroke="#fff" stroke-width="1.7" stroke-linecap="round" stroke-linejoin="round"/></svg>
<svg class="b" style="left:1587px;top:961px;" width="32" height="28" viewBox="0 0 32 28"><path d="M13 23H5.5a3 3 0 0 1-3-3V5.5a3 3 0 0 1 3-3h21a3 3 0 0 1 3 3V16" fill="none" stroke="#fff" stroke-width="1.8" stroke-linecap="round"/><rect x="15" y="20.5" width="15" height="5" rx="2.5" fill="#fff"/></svg>
<div class="t" style="left:1576px;top:996.4px;font-size:15.5px;color:#fff;font-weight:bold;transform:scaleX(0.904);">Pizarras</div>
<svg class="b" style="left:1643px;top:970px;" width="12" height="8" viewBox="0 0 12 8"><path d="M1.5 6.5L6 2l4.5 4.5" fill="none" stroke="#fff" stroke-width="1.7" stroke-linecap="round" stroke-linejoin="round"/></svg>
<svg class="b" style="left:1699px;top:957px;" width="34" height="34" viewBox="0 0 34 34"><circle cx="17" cy="17" r="14.2" fill="none" stroke="#fff" stroke-width="1.8"/><g fill="#fff"><circle cx="10.5" cy="17" r="1.7"/><circle cx="17" cy="17" r="1.7"/><circle cx="23.5" cy="17" r="1.7"/></g></svg>
<div class="t" style="left:1702px;top:996.4px;font-size:15.5px;color:#fff;font-weight:bold;transform:scaleX(0.945);">Más</div>
<svg class="b" style="left:1842px;top:958px;" width="34" height="32" viewBox="0 0 34 32"><path d="M10.5 3.5h13l7 12.5-7 12.5h-13L3.5 16z" fill="none" stroke="#f0204e" stroke-width="2" stroke-linejoin="round"/><path d="M12.5 11.5l9 9M21.5 11.5l-9 9" stroke="#fff" stroke-width="2.8" stroke-linecap="round"/></svg>
<div class="t" style="left:1830px;top:996.4px;font-size:15.5px;color:#fff;font-weight:bold;transform:scaleX(0.922);">Finalizar</div>
<div class="b" style="left:899px;top:1018.5px;width:568px;height:1.5px;background:#e8e8e8;"></div>
<div class="b" style="left:25px;top:884px;width:40px;height:40px;background:#27282c;border-radius:20px;"></div>
<svg class="b" style="left:33px;top:892px;" width="24" height="24" viewBox="0 0 24 24"><path d="M3.8 17.3V14L15.3 2.5l4.8 4.8L8.6 18.8H5.3a1.5 1.5 0 0 1-1.5-1.5zM12.8 5l4.8 4.8M4 21.6h17.2" fill="none" stroke="#20e695" stroke-width="1.5" stroke-linejoin="round" stroke-linecap="round"/></svg>
<!-- taskbar -->
<div class="b" style="left:0px;top:1020px;width:1920px;height:60px;background:linear-gradient(90deg,#d8dee9 0%,#d3dbe6 30%,#d6dde3 55%,#dde5db 68%,#dde8d6 85%,#dbe7d3 100%);"></div>
<svg class="b" style="left:25px;top:1033px;" width="31" height="29" viewBox="0 0 31 29"><defs><radialGradient id="sun" cx=".4" cy=".35" r=".7"><stop offset="0" stop-color="#ffc533"/><stop offset="1" stop-color="#f07d12"/></radialGradient>
    <linearGradient id="cl" x1="0" y1="0" x2="0" y2="1"><stop offset="0" stop-color="#f6f9ff"/><stop offset="1" stop-color="#9fb9e8"/></linearGradient></defs>
    <circle cx="15" cy="15.5" r="12.5" fill="url(#sun)"/>
    <path d="M3.5 13a3.3 3.3 0 0 1 .3-6.6 5 5 0 0 1 9.4-.6 3.7 3.7 0 0 1 1.3 7.2z" fill="url(#cl)"/>
    <path d="M16.5 28a3.3 3.3 0 0 1 .3-6.6 5 5 0 0 1 9.4-.6 3.7 3.7 0 0 1 1.3 7.2z" fill="url(#cl)"/></svg>
<div class="t" style="left:64.5px;top:1032.7px;font-size:14.5px;color:#1a1a1a;transform:scaleX(0.957);">25°C</div>
<div class="t" style="left:64.5px;top:1052.9px;font-size:14.5px;color:#4d4d4d;transform:scaleX(0.992);">Parc. soleado</div>
<svg class="b" style="left:613px;top:1035.5px;" width="29" height="29" viewBox="0 0 29 29"><defs><linearGradient id="wl" x1="0" y1="0" x2="1" y2="1"><stop offset="0" stop-color="#5fd0fb"/><stop offset="1" stop-color="#1190e8"/></linearGradient></defs><g fill="url(#wl)"><rect x="0" y="0" width="13.8" height="13.8" rx=".8"/><rect x="15.2" y="0" width="13.8" height="13.8" rx=".8"/><rect x="0" y="15.2" width="13.8" height="13.8" rx=".8"/><rect x="15.2" y="15.2" width="13.8" height="13.8" rx=".8"/></g></svg>
<div class="b" style="left:659.5px;top:1030.5px;width:273.5px;height:39px;background:#f2f5f9;border-radius:20px;box-shadow:0 0 0 1px rgba(0,0,0,.06);"></div>
<svg class="b" style="left:673px;top:1040px;" width="22" height="22" viewBox="0 0 22 22"><circle cx="9" cy="9" r="6.6" fill="none" stroke="#1b1b1b" stroke-width="1.9"/><path d="M14 14l5 5" stroke="#1b1b1b" stroke-width="2.1" stroke-linecap="round"/></svg>
<div class="t" style="left:705.5px;top:1042.2px;font-size:17px;color:#5b5b5b;transform:scaleX(0.936);">Buscar</div>
<svg class="b" style="left:948px;top:1035px;" width="32" height="30" viewBox="0 0 32 30"><rect x="10" y="0.5" width="21" height="20" rx="2" fill="#f5f5f5"/><rect x="0.5" y="9" width="22" height="20.5" rx="2" fill="#1f1f1f"/><path d="M10 9h12.5v11.5H10z" fill="#bdbdbd"/></svg>
<svg class="b" style="left:1003px;top:1034px;" width="32" height="32" viewBox="0 0 32 32"><defs><linearGradient id="ed1" x1="0" y1="0" x2="1" y2="1"><stop offset="0" stop-color="#35c1f1"/><stop offset=".6" stop-color="#1b8be0"/><stop offset="1" stop-color="#0c59a4"/></linearGradient><linearGradient id="ed2" x1="0" y1="0" x2="1" y2="0"><stop offset="0" stop-color="#2fb8ee"/><stop offset="1" stop-color="#6fdb5b"/></linearGradient></defs>
    <path d="M16 1.5C8 1.5 2 7.5 1.5 15c2-4 6-6.5 11-6.5 6 0 10 3.5 10 8 0 2-1 3.5-2.5 4.5h7.5c2-1.5 3-4 3-6.5C30.5 7 24 1.5 16 1.5z" fill="url(#ed2)"/>
    <path d="M1.5 15C1 23.5 7.5 30.5 16 30.5c5 0 9-2 11.5-5.5-2 1-4.5 1.5-6.5 1-4.5-1-7.5-5-7-9.5.2-2 1.3-3.5 2.5-4.5C9.5 10.5 3 11.5 1.5 15z" fill="url(#ed1)"/>
    <rect x="3" y="20" width="14" height="10.5" rx="1.8" fill="#d98324"/><rect x="3" y="20" width="14" height="4.5" rx="1.5" fill="#b5651d"/><rect x="7.5" y="17.8" width="5" height="3" rx="1" fill="none" stroke="#8a4a12" stroke-width="1.2"/><rect x="9" y="23.5" width="2" height="2" fill="#ffd88a"/></svg>
<svg class="b" style="left:1058px;top:1034px;" width="31" height="32" viewBox="0 0 31 32"><defs><linearGradient id="st" x1="0" y1="0" x2="0" y2="1"><stop offset="0" stop-color="#1b7fd4"/><stop offset="1" stop-color="#0f4c8f"/></linearGradient></defs><path d="M10 8V5.5a3 3 0 0 1 3-3h5a3 3 0 0 1 3 3V8" fill="none" stroke="#2aa8e8" stroke-width="2"/><path d="M1 8h29v19a4 4 0 0 1-4 4H5a4 4 0 0 1-4-4z" fill="url(#st)"/><rect x="9.5" y="12.5" width="5.5" height="5.5" fill="#f25022"/><rect x="16" y="12.5" width="5.5" height="5.5" fill="#7fba00"/><rect x="9.5" y="19" width="5.5" height="5.5" fill="#00a4ef"/><rect x="16" y="19" width="5.5" height="5.5" fill="#ffb900"/></svg>
<svg class="b" style="left:1113px;top:1035px;" width="31" height="30" viewBox="0 0 31 30"><rect width="31" height="30" rx="1.5" fill="#2a6fe8"/><path d="M7 5.5L25 18" stroke="#fff" stroke-width="2.4"/><path d="M4 19.5h23v6.5H4z" fill="#fff"/><path d="M6 24h8" stroke="#2a6fe8" stroke-width="1.2"/></svg>
<svg class="b" style="left:1168px;top:1036px;" width="32" height="28" viewBox="0 0 32 28"><defs><linearGradient id="fo" x1="0" y1="0" x2="0" y2="1"><stop offset="0" stop-color="#ffd867"/><stop offset="1" stop-color="#f5b827"/></linearGradient></defs><path d="M1 3.5a2 2 0 0 1 2-2h8l3.5 3.5H29a2 2 0 0 1 2 2V10H1z" fill="#e9a321"/><path d="M1 8.5h30V25a2 2 0 0 1-2 2H3a2 2 0 0 1-2-2z" fill="url(#fo)"/><rect x="8" y="19.5" width="16" height="5" rx="1.3" fill="#1d82d8"/></svg>
<svg class="b" style="left:1223px;top:1035px;" width="32" height="32" viewBox="0 0 32 32"><circle cx="16" cy="16" r="15" fill="#fff"/><path d="M16 1a15 15 0 0 1 13 7.5H16a7.5 7.5 0 0 0-6.5 3.75L3 8.5A15 15 0 0 1 16 1z" fill="#ea4335"/><path d="M29 8.5a15 15 0 0 1-13 22.5l6.5-11.25A7.5 7.5 0 0 0 22.5 12.25 7.5 7.5 0 0 0 16 8.5z" fill="#fbc116"/><path d="M16 31A15 15 0 0 1 3 8.5l6.5 11.25A7.5 7.5 0 0 0 22.5 19.75z" fill="#34a853"/><circle cx="16" cy="16" r="6.8" fill="#fff"/><circle cx="16" cy="16" r="5.4" fill="#4285f4"/></svg>
<div class="b" style="left:1240px;top:1028.5px;width:19.5px;height:19.5px;background:#e8447a;border-radius:10px;"></div>
<div class="t" style="left:1245.6px;top:1032.7px;font-size:11.5px;color:#fff;font-weight:bold;">C</div>
<div class="b" style="left:1234.5px;top:1070.5px;width:8.5px;height:3px;background:#8b8f94;border-radius:2px;"></div>
<div class="b" style="left:1270.5px;top:1026px;width:46.5px;height:48px;background:rgba(255,255,255,.55);border-radius:5px;box-shadow:0 0 0 1px rgba(0,0,0,.05);"></div>
<div class="b" style="left:1312.5px;top:1027px;width:5.5px;height:46px;background:rgba(255,255,255,.5);border-radius:0 5px 5px 0;box-shadow:0 0 0 1px rgba(0,0,0,.05);"></div>
<div class="b" style="left:1278px;top:1034px;width:31.5px;height:31.5px;background:linear-gradient(180deg,#2d6cf6,#0b45e0);border-radius:16px;"></div>
<div class="t" style="left:1283.8px;top:1045.6px;font-size:8.5px;color:#fff;font-weight:bold;transform:scaleX(0.901);">zoom</div>
<div class="b" style="left:1284.5px;top:1070.5px;width:18.5px;height:3px;background:#e81b2a;border-radius:2px;"></div>
<svg class="b" style="left:1600px;top:1044px;" width="16" height="11" viewBox="0 0 16 11"><path d="M1.5 9L8 2.5 14.5 9" fill="none" stroke="#1b1b1b" stroke-width="1.6" stroke-linecap="round" stroke-linejoin="round"/></svg>
<svg class="b" style="left:1637px;top:1040px;" width="23" height="20" viewBox="0 0 23 20"><defs><linearGradient id="cg" x1="0" y1="0" x2="0" y2="1"><stop offset="0" stop-color="#666"/><stop offset="1" stop-color="#d8d8d8"/></linearGradient></defs><path d="M5.5 16a4 4 0 0 1-.6-7.9A5.5 5.5 0 0 1 15.5 6.5a4.8 4.8 0 0 1 1 9.5z" fill="url(#cg)" stroke="#1b1b1b" stroke-width="1.3"/><path d="M3 2l16.5 16" stroke="#1b1b1b" stroke-width="1.5" stroke-linecap="round"/></svg>
<svg class="b" style="left:1675px;top:1039px;" width="28" height="22" viewBox="0 0 28 22"><g fill="none" stroke="#c42b1c" stroke-width="1.3" stroke-linecap="round" stroke-linejoin="round"><rect x="4.5" y="1.5" width="4.6" height="9" rx="2.3"/><path d="M2 8.5a4.8 4.8 0 0 0 9.6 0M6.8 13.5V16"/><path d="M26 8.5L14.5 13l5 2 2 5z"/></g></svg>
<svg class="b" style="left:1717px;top:1041px;" width="22" height="17" viewBox="0 0 22 17"><g fill="none" stroke="#1b1b1b" stroke-width="1.4" stroke-linecap="round"><path d="M1.5 6.5a13.5 13.5 0 0 1 19 0"/><path d="M4.8 9.8a9 9 0 0 1 12.4 0"/><path d="M8 13a4.5 4.5 0 0 1 6 0"/></g><circle cx="11" cy="15" r="1.2" fill="#1b1b1b"/></svg>
<svg class="b" style="left:1747px;top:1041px;" width="22" height="17" viewBox="0 0 22 17"><g fill="none" stroke="#1b1b1b" stroke-width="1.3" stroke-linecap="round" stroke-linejoin="round"><path d="M1.5 6h3L9 2v13L4.5 11h-3z"/><path d="M12 5.5a4.5 4.5 0 0 1 0 6M14.8 3.2a8 8 0 0 1 0 10.6M17.5 1.2a11.2 11.2 0 0 1 0 14.6"/></g></svg>
<svg class="b" style="left:1776px;top:1039px;" width="23" height="18" viewBox="0 0 23 18"><rect x="2.5" y="5.5" width="16" height="10" rx="2.2" fill="none" stroke="#1b1b1b" stroke-width="1.4"/><rect x="19" y="8.5" width="2.3" height="4" rx="1" fill="#1b1b1b"/><rect x="4.8" y="7.8" width="6" height="5.4" fill="#1b1b1b"/><path d="M6 0.5L2.5 5.5h3L4 9.5l4.5-5.5H5.5z" fill="#dde8d6" stroke="#1b1b1b" stroke-width="1.1" stroke-linejoin="round"/></svg>
<div class="t" style="left:1860px;top:1032.7px;font-size:14.5px;color:#1b1b1b;transform:scaleX(0.978);">16:09</div>
<div class="t" style="left:1818.7px;top:1052.5px;font-size:14.5px;color:#1b1b1b;transform:scaleX(1.058);">23/09/2025</div>
</body></html>
